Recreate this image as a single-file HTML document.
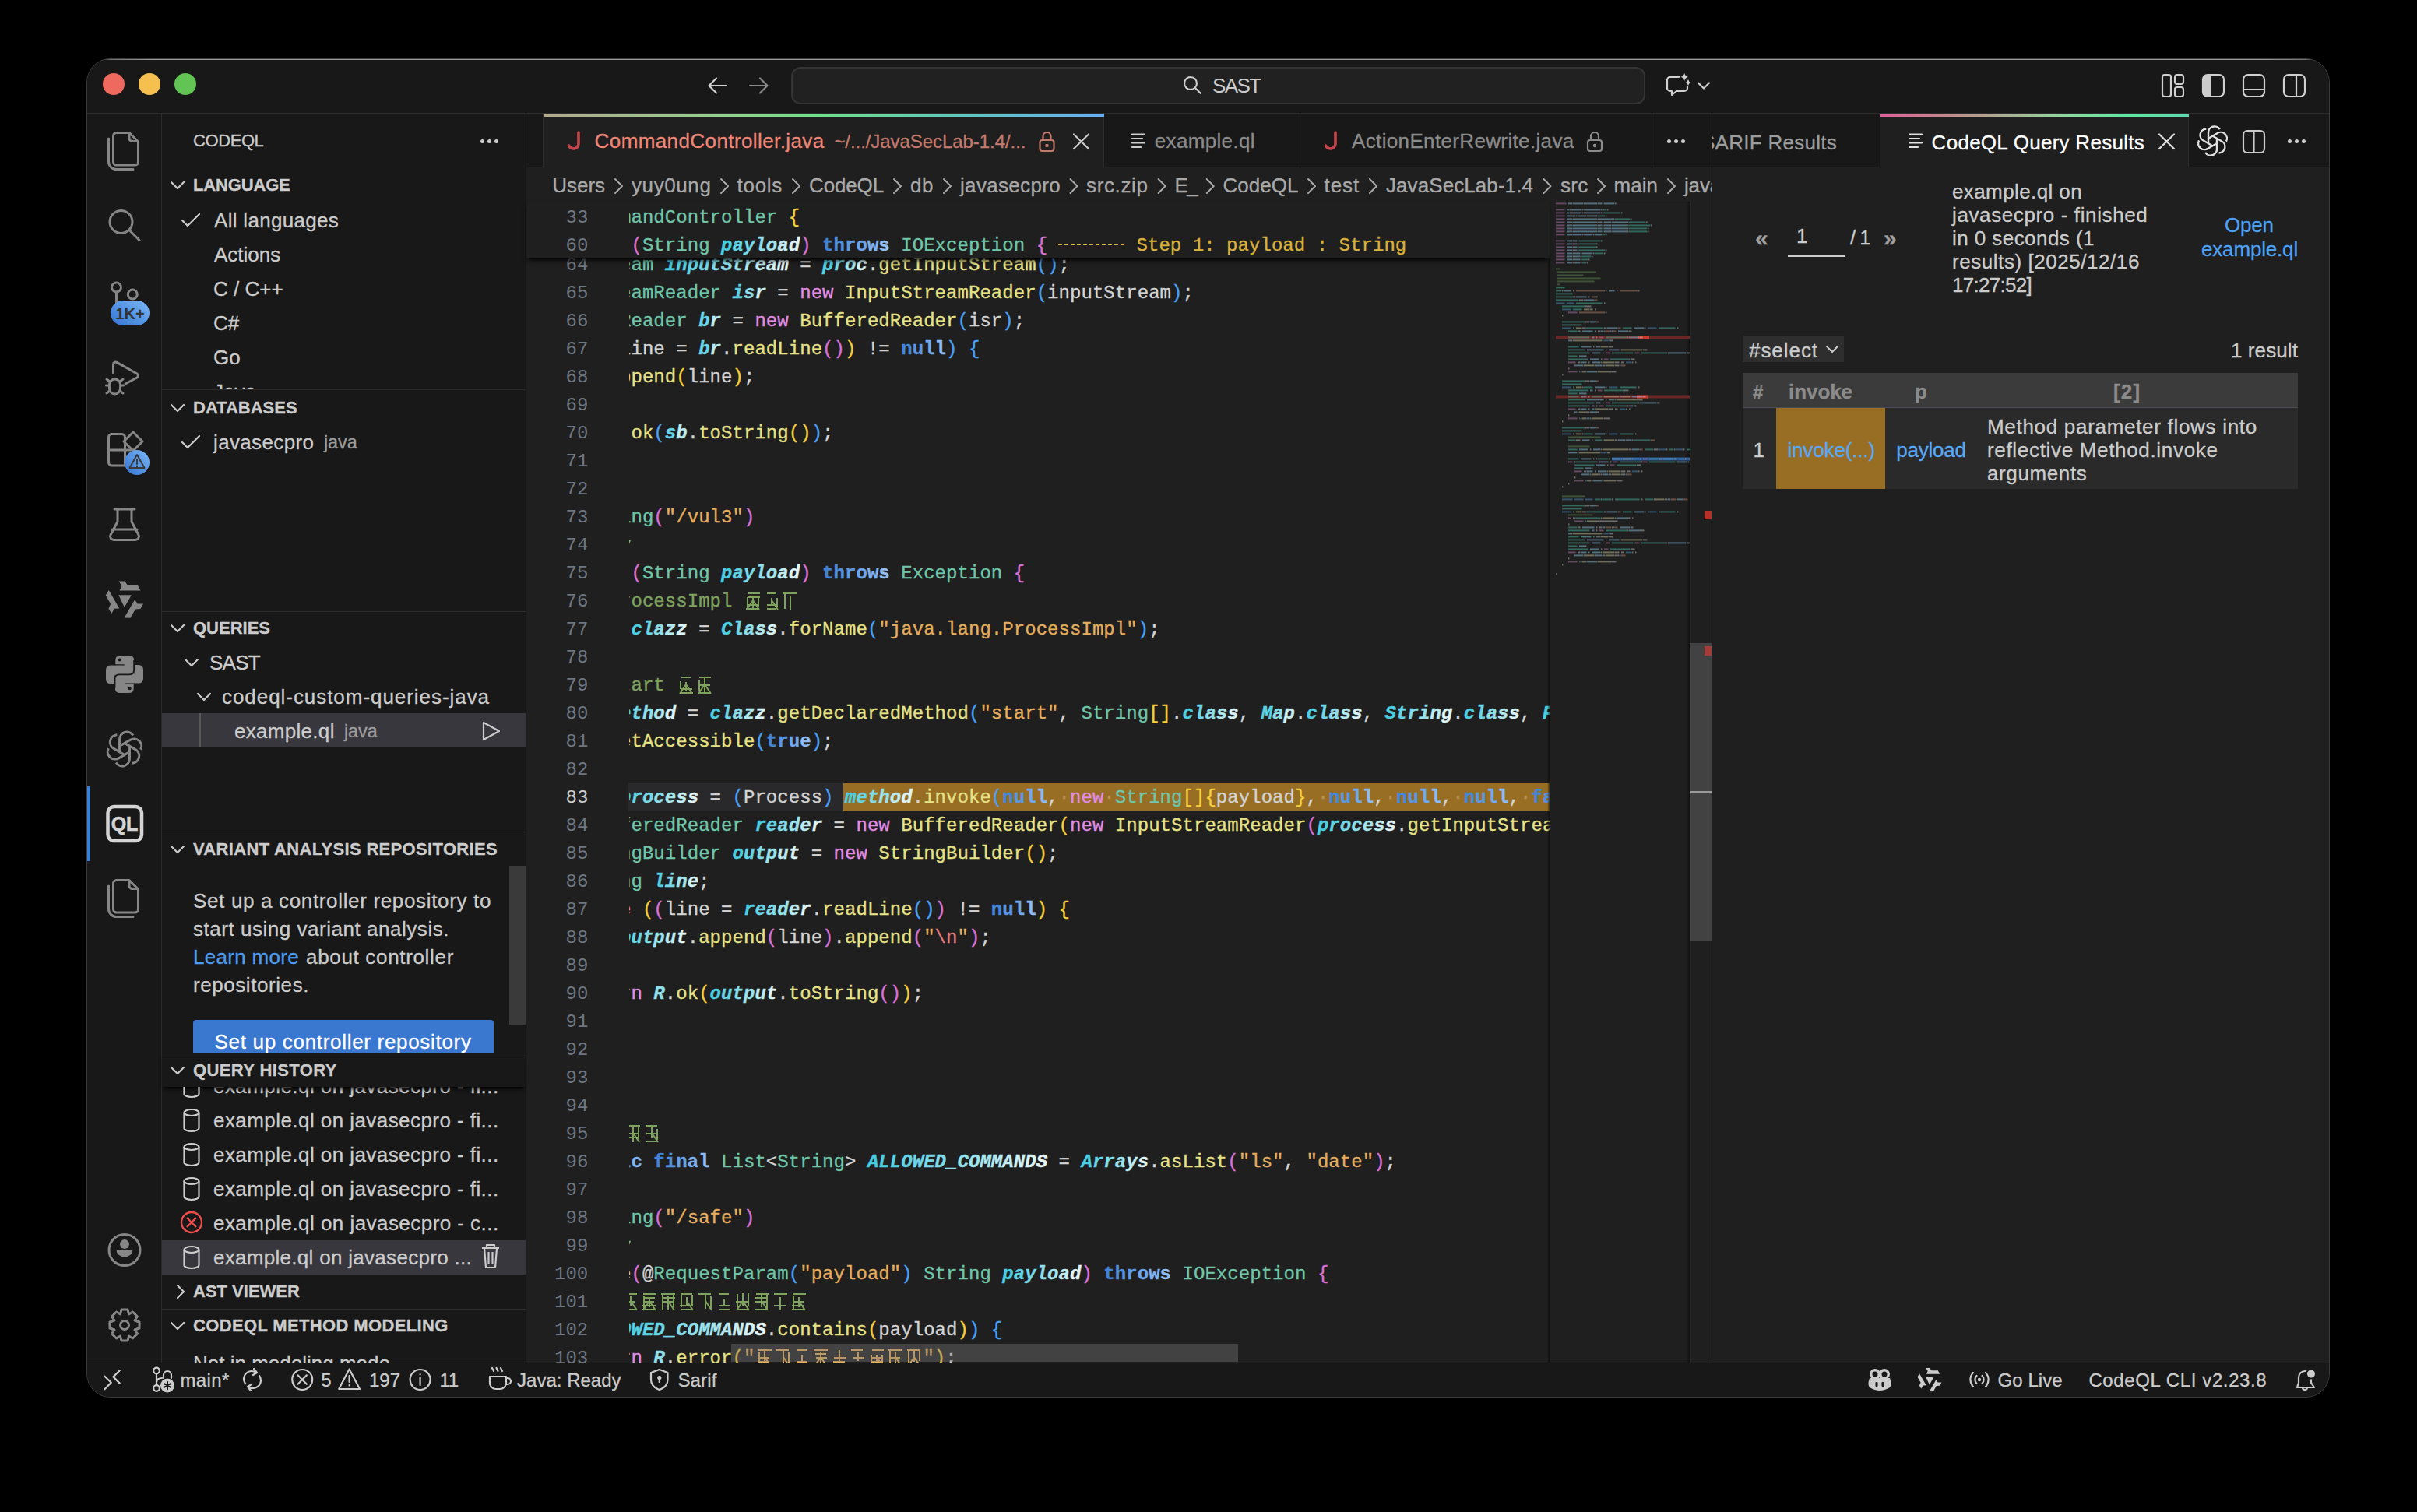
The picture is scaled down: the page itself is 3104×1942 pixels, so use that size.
<!DOCTYPE html>
<html><head><meta charset="utf-8">
<style>
html,body{margin:0;padding:0;background:#000;width:3104px;height:1942px;overflow:hidden}
*{box-sizing:border-box}
.win{position:absolute;left:112px;top:76px;width:2879px;height:1718px;border-radius:30px;overflow:hidden;background:#181818;box-shadow:0 0 0 1px #3a3a3a}
.pg{position:absolute;left:-112px;top:-76px;width:3104px;height:1942px}
.a{position:absolute}
.ui{position:absolute;font-family:"Liberation Sans",sans-serif;color:#cccccc;font-size:26px;white-space:pre;line-height:44px;height:44px}
.hdr{position:absolute;font-family:"Liberation Sans",sans-serif;color:#cccccc;font-size:22px;font-weight:700;white-space:pre;line-height:44px;height:44px}
.cl{position:absolute;font-family:"Liberation Mono",monospace;font-size:24px;white-space:pre;line-height:36px;height:36px;color:#cccccc}
.cl i{position:absolute;top:0;font-style:normal;-webkit-text-stroke:0.35px currentColor}
.a[style*='Liberation Sans']{-webkit-text-stroke:0.3px currentColor}
svg{position:absolute;overflow:visible}
.ic{fill:none;stroke:#868686;stroke-width:3;stroke-linecap:round;stroke-linejoin:round}
</style></head><body>
<div class="win"><div class="pg">

<!-- TITLE BAR -->
<div class="a" style="left:112px;top:76px;width:2880px;height:70px;background:#181818;border-bottom:1px solid #2b2b2b"></div>
<div class="a" style="left:132px;top:94px;width:28px;height:28px;border-radius:50%;background:#ee6a5f"></div>
<div class="a" style="left:178px;top:94px;width:28px;height:28px;border-radius:50%;background:#f5c04f"></div>
<div class="a" style="left:224px;top:94px;width:28px;height:28px;border-radius:50%;background:#61c454"></div>
<svg style="left:0;top:0" width="1" height="1">
 <g fill="none" stroke-width="2.2" stroke-linecap="round" stroke-linejoin="round">
  <path d="M933,110 H911 M920,100.5 L910.5,110 L920,119.5" stroke="#d0d0d0"/>
  <path d="M963,110 H985 M976,100.5 L985.5,110 L976,119.5" stroke="#8a8a8a"/>
 </g>
</svg>
<div class="a" style="left:1016px;top:86px;width:1097px;height:48px;border-radius:12px;background:#212121;border:2px solid #343434"></div>
<svg style="left:0;top:0" width="1" height="1">
 <g fill="none" stroke="#cccccc" stroke-width="2.2" stroke-linecap="round">
  <circle cx="1529" cy="107" r="8"/><path d="M1535,113 L1542,120"/>
 </g>
</svg>
<div class="ui" style="left:1557px;top:88px;line-height:44px;font-size:26px;color:#cccccc;letter-spacing:-1.6px">SAST</div>
<svg style="left:0;top:0" width="1" height="1">
 <g fill="none" stroke="#d0d0d0" stroke-width="2.2" stroke-linecap="round" stroke-linejoin="round">
  <path d="M2156,98.8 H2145 a4,4 0 0 0 -4,4 V113 a4,4 0 0 0 4,4 H2147 V122 L2153,117 H2163 a4,4 0 0 0 4,-4 V111"/>
  <path d="M2181,106.5 L2188,113.5 L2195,106.5"/>
 </g>
 <path fill="#d0d0d0" d="M2163.2,94 Q2164.2,98 2168,98.8 Q2164.2,99.6 2163.2,104 Q2162.2,99.6 2158.4,98.8 Q2162.2,98 2163.2,94 Z M2168,102 Q2168.7,105 2171.5,106 Q2168.7,107 2168,110 Q2167.3,107 2164.5,106 Q2167.3,105 2168,102 Z"/>
 <g fill="none" stroke="#d0d0d0" stroke-width="2.2">
  <rect x="2777" y="96" width="11" height="28" rx="3"/>
  <rect x="2793" y="96" width="11" height="12" rx="3"/>
  <rect x="2793" y="112" width="11" height="12" rx="3"/>
  <rect x="2829" y="96" width="27" height="28" rx="6"/>
  <rect x="2881" y="96" width="27" height="28" rx="6"/>
  <path d="M2881,115 H2908"/>
  <rect x="2933" y="96" width="27" height="28" rx="6"/>
  <path d="M2949,96 V124"/>
 </g>
 <path fill="#cccccc" d="M2835,96 H2840 V124 H2835 a6,6 0 0 1 -6,-6 V102 a6,6 0 0 1 6,-6 Z"/>
</svg>

<!-- ACTIVITY BAR -->
<div class="a" style="left:112px;top:146px;width:96px;height:1604px;background:#181818;border-right:1px solid #2b2b2b"></div>
<svg style="left:0;top:0" width="1" height="1">
 <g class="ic">
  <!-- files -->
  <path d="M149.5,170.5 H166 L177.5,182 V208 a4,4 0 0 1 -4,4 H149.5 a4,4 0 0 1 -4,-4 V174.5 a4,4 0 0 1 4,-4 Z M166,170.5 V177.5 a4,4 0 0 0 4,4 H177.5"/>
  <path d="M139.5,178 V207.5 a10,10 0 0 0 10,10 H171"/>
  <!-- search -->
  <circle cx="155.5" cy="285" r="14.5"/><path d="M166.5,296 L179,308.5"/>
  <!-- scm -->
  <circle cx="149.5" cy="369" r="6"/><circle cx="170.3" cy="378" r="6"/><path d="M149.5,375 V392"/>
  <!-- debug -->
  <path d="M145.5,479 V468 a3,3 0 0 1 4.5,-2.6 L176,480 a3,3 0 0 1 0,5 L161,493"/>
  <path d="M147.5,487 a7,7 0 0 1 7,7 V499 a7,7 0 0 1 -14,0 V494 a7,7 0 0 1 7,-7 Z" transform="translate(-0,0)"/>
  <path d="M136.5,495 H140 M155,495 H158.5 M137,487 L141,490 M158,487 L154,490 M137,505 L141,502 M158,505 L154,502"/>
  <!-- extensions -->
  <path d="M143.5,557.5 H156.5 a4,4 0 0 1 4,4 V598 H143.5 a4,4 0 0 1 -4,-4 V561.5 a4,4 0 0 1 4,-4 Z M139.5,578 H160.5 M160.5,578 H172"/>
  <path d="M171,555 L183,567 L171,579 L159,567 Z"/>
  <!-- flask -->
  <path d="M147,654 H173 M151,654 V670 L142,687 a4.5,4.5 0 0 0 4,6.5 H174 a4.5,4.5 0 0 0 4,-6.5 L169,670 V654 M144,680 H176"/>
  <!-- files 2 -->
  <path d="M149.5,1130.5 H166 L177.5,1142 V1168 a4,4 0 0 1 -4,4 H149.5 a4,4 0 0 1 -4,-4 V1134.5 a4,4 0 0 1 4,-4 Z M166,1130.5 V1137.5 a4,4 0 0 0 4,4 H177.5"/>
  <path d="M139.5,1138 V1167.5 a10,10 0 0 0 10,10 H171"/>
  <!-- account -->
  <circle cx="160" cy="1605.5" r="20"/>
  <!-- gear -->
  <circle cx="160" cy="1702" r="5.5"/>
 </g>
 <!-- scm badge -->
 <defs>
  <linearGradient id="bg1" x1="0" y1="1" x2="1" y2="0"><stop offset="0" stop-color="#3274d3"/><stop offset="1" stop-color="#7ab6f5"/></linearGradient>
 </defs>
 <rect x="142" y="386" width="50" height="32" rx="16" fill="url(#bg1)"/>
 <text x="167" y="409.5" text-anchor="middle" font-family="Liberation Sans" font-weight="700" font-size="20" fill="#333333">1K+</text>
 <!-- ext badge -->
 <circle cx="176" cy="594" r="16" fill="url(#bg1)"/>
 <path d="M176,584 L185.5,601 H166.5 Z" fill="none" stroke="#3a3a3a" stroke-width="2" stroke-linejoin="round"/>
 <path d="M176,590 V596 M176,598.5 V599.5" stroke="#3a3a3a" stroke-width="2" stroke-linecap="round"/>
 <!-- qwen-like filled -->
 <defs><path id="qarm" d="M-7.3,-23.6 L0.2,-23.6 L4,-18.3 L16.9,-18.3 L20.6,-11.5 L-6.5,-11.5 L-3.6,-17.1 L-6.5,-22.2 Z"/>
 <path id="oalk" d="M-6.5,4 V-12 A9.5,9.5 0 0 1 11,-17.5"/></defs>
 <g fill="#868686" transform="translate(160,770)">
  <use href="#qarm"/><use href="#qarm" transform="rotate(120)"/><use href="#qarm" transform="rotate(240)"/>
  <path d="M-7.7,-5.75 L8.9,-5.75 L-0.2,10.1 Z"/>
 </g>
 <g fill="none" stroke="#868686" stroke-width="3" stroke-linejoin="round" transform="translate(160,962)">
  <use href="#oalk"/><use href="#oalk" transform="rotate(60)"/><use href="#oalk" transform="rotate(120)"/><use href="#oalk" transform="rotate(180)"/><use href="#oalk" transform="rotate(240)"/><use href="#oalk" transform="rotate(300)"/>
 </g>
 <!-- python -->
 <g transform="translate(160,866)">
  <defs><path id="pysn" d="M-5.7,-24 H6.1 Q12.1,-24 12.1,-18 V0.4 H-12.5 V12.1 H-18 Q-24,12.1 -24,6 V-5.6 Q-24,-11.6 -18,-11.6 H-11.7 V-18 Q-11.7,-24 -5.7,-24 Z"/></defs>
  <use href="#pysn" fill="#868686"/><use href="#pysn" fill="#868686" transform="rotate(180)"/>
  <path d="M12.1,-18 V-5.4 Q12.1,0.4 6.5,0.4 H-6.9 Q-12.5,0.4 -12.5,5.8 V18" fill="none" stroke="#181818" stroke-width="1.8"/>
  <path d="M-13,-12.1 H-0.3 M0.3,12.1 H13" fill="none" stroke="#181818" stroke-width="1.4"/>
  <circle cx="-6.3" cy="-18.6" r="2" fill="#181818"/><circle cx="6.6" cy="18.3" r="2" fill="#181818"/>
 </g>
 <!-- account fill -->
 <circle cx="160" cy="1598" r="6" fill="#868686"/>
 <path d="M149.5,1605.5 H170.5 a10.5,9 0 0 1 -21,0 Z" fill="#868686"/>
 <!-- gear -->
 <path fill="none" stroke="#868686" stroke-width="3" stroke-linejoin="round" d="M156,1682 H164 L165.5,1688 L170.5,1685 L176.5,1691 L173,1696 L179,1698 V1706 L173,1708 L176.5,1713 L170.5,1719 L165.5,1716 L164,1722 H156 L154.5,1716 L149.5,1719 L143.5,1713 L147,1708 L141,1706 V1698 L147,1696 L143.5,1691 L149.5,1685 L154.5,1688 Z"/>
 <!-- QL active -->
 <rect x="138.5" y="1036" width="43.5" height="44" rx="8" fill="none" stroke="#d4d4d4" stroke-width="4.5"/>
 <text x="160" y="1067" text-anchor="middle" font-family="Liberation Sans" font-weight="700" font-size="25" fill="#d4d4d4" stroke="#d4d4d4" stroke-width="0.6">QL</text>
</svg>
<div class="a" style="left:112px;top:1010px;width:4px;height:96px;background:#3a80d6"></div>

<div class="a" style="left:208px;top:146px;width:468px;height:1604px;background:#181818;border-right:1px solid #2b2b2b"></div>
<div class="a" style="left:208px;top:500px;width:467px;height:1px;background:#2b2b2b"></div>
<div class="a" style="left:208px;top:785px;width:467px;height:1px;background:#2b2b2b"></div>
<div class="a" style="left:208px;top:1068px;width:467px;height:1px;background:#2b2b2b"></div>
<div class="a" style="left:208px;top:1352px;width:467px;height:1px;background:#2b2b2b"></div>
<div class="a" style="left:208px;top:1681px;width:467px;height:1px;background:#2b2b2b"></div>
<div class="a " style="left:248px;top:162.1px;height:37px;line-height:37px;font-family:'Liberation Sans';font-size:22px;font-weight:400;font-style:normal;color:#cccccc;white-space:pre;letter-spacing:-0.420px;">CODEQL</div>
<div class="a" style="left:617px;top:179px;width:5px;height:5px;border-radius:50%;background:#ccc;box-shadow:9px 0 0 #ccc,18px 0 0 #ccc"></div>
<div class="a " style="left:248px;top:219.1px;height:37px;line-height:37px;font-family:'Liberation Sans';font-size:22px;font-weight:700;font-style:normal;color:#cccccc;white-space:pre;letter-spacing:-0.161px;">LANGUAGE</div>
<div class="a " style="left:275px;top:260.7px;height:44px;line-height:44px;font-family:'Liberation Sans';font-size:26px;font-weight:400;font-style:normal;color:#cccccc;white-space:pre;letter-spacing:0.298px;">All languages</div>
<div class="a " style="left:275px;top:304.7px;height:44px;line-height:44px;font-family:'Liberation Sans';font-size:26px;font-weight:400;font-style:normal;color:#cccccc;white-space:pre;">Actions</div>
<div class="a " style="left:274px;top:348.7px;height:44px;line-height:44px;font-family:'Liberation Sans';font-size:26px;font-weight:400;font-style:normal;color:#cccccc;white-space:pre;">C / C++</div>
<div class="a " style="left:274px;top:392.7px;height:44px;line-height:44px;font-family:'Liberation Sans';font-size:26px;font-weight:400;font-style:normal;color:#cccccc;white-space:pre;">C#</div>
<div class="a " style="left:274px;top:436.7px;height:44px;line-height:44px;font-family:'Liberation Sans';font-size:26px;font-weight:400;font-style:normal;color:#cccccc;white-space:pre;">Go</div>
<div class="a" style="left:208px;top:470px;width:467px;height:30px;overflow:hidden"><div class="a " style="left:66px;top:10.7px;height:44px;line-height:44px;font-family:'Liberation Sans';font-size:26px;font-weight:400;font-style:normal;color:#cccccc;white-space:pre;">Java</div></div>
<div class="a " style="left:248px;top:505.1px;height:37px;line-height:37px;font-family:'Liberation Sans';font-size:22px;font-weight:700;font-style:normal;color:#cccccc;white-space:pre;">DATABASES</div>
<div class="a " style="left:274px;top:545.7px;height:44px;line-height:44px;font-family:'Liberation Sans';font-size:26px;font-weight:400;font-style:normal;color:#cccccc;white-space:pre;letter-spacing:0.357px;">javasecpro</div>
<div class="a " style="left:416px;top:547.6px;height:40px;line-height:40px;font-family:'Liberation Sans';font-size:23.4px;font-weight:400;font-style:normal;color:#9d9d9d;white-space:pre;letter-spacing:-0.080px;">java</div>
<div class="a " style="left:248px;top:788.1px;height:37px;line-height:37px;font-family:'Liberation Sans';font-size:22px;font-weight:700;font-style:normal;color:#cccccc;white-space:pre;">QUERIES</div>
<div class="a " style="left:269px;top:828.7px;height:44px;line-height:44px;font-family:'Liberation Sans';font-size:26px;font-weight:400;font-style:normal;color:#cccccc;white-space:pre;letter-spacing:-0.730px;">SAST</div>
<div class="a " style="left:285px;top:872.7px;height:44px;line-height:44px;font-family:'Liberation Sans';font-size:26px;font-weight:400;font-style:normal;color:#cccccc;white-space:pre;letter-spacing:0.947px;">codeql-custom-queries-java</div>
<div class="a" style="left:208px;top:916px;width:467px;height:44px;background:#37373d"></div>
<div class="a" style="left:256px;top:916px;width:2px;height:44px;background:#585858"></div>
<div class="a " style="left:301px;top:916.7px;height:44px;line-height:44px;font-family:'Liberation Sans';font-size:26px;font-weight:400;font-style:normal;color:#cccccc;white-space:pre;letter-spacing:0.297px;">example.ql</div>
<div class="a " style="left:442px;top:918.6px;height:40px;line-height:40px;font-family:'Liberation Sans';font-size:23.4px;font-weight:400;font-style:normal;color:#9d9d9d;white-space:pre;letter-spacing:-0.080px;">java</div>
<div class="a " style="left:248px;top:1072.1px;height:37px;line-height:37px;font-family:'Liberation Sans';font-size:22px;font-weight:700;font-style:normal;color:#cccccc;white-space:pre;letter-spacing:0.331px;">VARIANT ANALYSIS REPOSITORIES</div>
<div class="a " style="left:248px;top:1134.7px;height:44px;line-height:44px;font-family:'Liberation Sans';font-size:26px;font-weight:400;font-style:normal;color:#cccccc;white-space:pre;letter-spacing:0.658px;">Set up a controller repository to</div>
<div class="a " style="left:248px;top:1170.7px;height:44px;line-height:44px;font-family:'Liberation Sans';font-size:26px;font-weight:400;font-style:normal;color:#cccccc;white-space:pre;letter-spacing:0.531px;">start using variant analysis.</div>
<div class="a" style="left:248px;top:1171px;height:80px"><div class="a " style="left:0px;top:35.7px;height:44px;line-height:44px;font-family:'Liberation Sans';font-size:26px;font-weight:400;font-style:normal;color:#4d9cf0;white-space:pre;letter-spacing:0.303px;">Learn more</div></div>
<div class="a " style="left:393px;top:1206.7px;height:44px;line-height:44px;font-family:'Liberation Sans';font-size:26px;font-weight:400;font-style:normal;color:#cccccc;white-space:pre;letter-spacing:0.673px;">about controller</div>
<div class="a " style="left:248px;top:1242.7px;height:44px;line-height:44px;font-family:'Liberation Sans';font-size:26px;font-weight:400;font-style:normal;color:#cccccc;white-space:pre;letter-spacing:0.567px;">repositories.</div>
<div class="a" style="left:248px;top:1310px;width:386px;height:42px;background:#3a78d0;border-radius:4px 4px 0 0;overflow:hidden"><div class="a " style="left:27.6px;top:5.7px;height:44px;line-height:44px;font-family:'Liberation Sans';font-size:26px;font-weight:400;font-style:normal;color:#ffffff;white-space:pre;letter-spacing:0.689px;">Set up controller repository</div></div>
<div class="a" style="left:654px;top:1112px;width:21px;height:204px;background:#3a3a3a"></div>
<div class="a" style="left:208px;top:1353px;width:467px;height:280px;overflow:hidden">
<div class="a " style="left:66px;top:19.7px;height:44px;line-height:44px;font-family:'Liberation Sans';font-size:26px;font-weight:400;font-style:normal;color:#cccccc;white-space:pre;letter-spacing:0.437px;">example.ql on javasecpro - fi...</div>
<div class="a " style="left:66px;top:63.7px;height:44px;line-height:44px;font-family:'Liberation Sans';font-size:26px;font-weight:400;font-style:normal;color:#cccccc;white-space:pre;letter-spacing:0.437px;">example.ql on javasecpro - fi...</div>
<div class="a " style="left:66px;top:107.7px;height:44px;line-height:44px;font-family:'Liberation Sans';font-size:26px;font-weight:400;font-style:normal;color:#cccccc;white-space:pre;letter-spacing:0.437px;">example.ql on javasecpro - fi...</div>
<div class="a " style="left:66px;top:151.7px;height:44px;line-height:44px;font-family:'Liberation Sans';font-size:26px;font-weight:400;font-style:normal;color:#cccccc;white-space:pre;letter-spacing:0.437px;">example.ql on javasecpro - fi...</div>
<div class="a " style="left:66px;top:195.7px;height:44px;line-height:44px;font-family:'Liberation Sans';font-size:26px;font-weight:400;font-style:normal;color:#cccccc;white-space:pre;letter-spacing:0.451px;">example.ql on javasecpro - c...</div>
</div>
<div class="a" style="left:208px;top:1593px;width:467px;height:44px;background:#37373d"></div>
<div class="a " style="left:274px;top:1592.7px;height:44px;line-height:44px;font-family:'Liberation Sans';font-size:26px;font-weight:400;font-style:normal;color:#cccccc;white-space:pre;letter-spacing:0.295px;">example.ql on javasecpro ...</div>
<div class="a" style="left:208px;top:1353px;width:467px;height:43px;background:#181818;box-shadow:0 4px 5px -2px #000"></div>
<div class="a " style="left:248px;top:1356.1px;height:37px;line-height:37px;font-family:'Liberation Sans';font-size:22px;font-weight:700;font-style:normal;color:#cccccc;white-space:pre;letter-spacing:0.383px;">QUERY HISTORY</div>
<svg style="left:0;top:0" width="1" height="1"><g fill="none" stroke="#cccccc" stroke-width="2.2"><ellipse cx="246" cy="1429" rx="9.5" ry="4"/><path d="M236.5,1429 V1449 a9.5,4 0 0 0 19,0 V1429"/><ellipse cx="246" cy="1473" rx="9.5" ry="4"/><path d="M236.5,1473 V1493 a9.5,4 0 0 0 19,0 V1473"/><ellipse cx="246" cy="1517" rx="9.5" ry="4"/><path d="M236.5,1517 V1537 a9.5,4 0 0 0 19,0 V1517"/><ellipse cx="246" cy="1605" rx="9.5" ry="4"/><path d="M236.5,1605 V1625 a9.5,4 0 0 0 19,0 V1605"/></g><g fill="none" stroke="#f14c4c" stroke-width="2.4"><circle cx="246" cy="1570" r="13"/><path d="M240,1564 L252,1576 M252,1564 L240,1576"/></g><g fill="none" stroke="#cccccc" stroke-width="2.2" stroke-linejoin="round"><path d="M619,1603 H641 M625,1603 V1599 H635 V1603 M622,1603 L624,1628 H636 L638,1603 M627.5,1608 V1623 M632.5,1608 V1623"/></g></svg>
<div class="a" style="left:208px;top:1396px;width:100px;height:20px;overflow:hidden"><svg style="left:0;top:0" width="1" height="1"><g fill="none" stroke="#cccccc" stroke-width="2.2" transform="translate(-208,-1396)"><ellipse cx="246" cy="1385" rx="9.5" ry="4"/><path d="M236.5,1385 V1405 a9.5,4 0 0 0 19,0 V1385"/></g></svg></div>
<div class="a " style="left:248px;top:1640.1px;height:37px;line-height:37px;font-family:'Liberation Sans';font-size:22px;font-weight:700;font-style:normal;color:#cccccc;white-space:pre;">AST VIEWER</div>
<div class="a " style="left:248px;top:1684.1px;height:37px;line-height:37px;font-family:'Liberation Sans';font-size:22px;font-weight:700;font-style:normal;color:#cccccc;white-space:pre;letter-spacing:0.358px;">CODEQL METHOD MODELING</div>
<div class="a" style="left:208px;top:1726px;width:467px;height:24px;overflow:hidden"><div class="a " style="left:40px;top:2.7px;height:44px;line-height:44px;font-family:'Liberation Sans';font-size:26px;font-weight:400;font-style:normal;color:#cccccc;white-space:pre;">Not in modeling mode</div></div>
<svg style="left:0;top:0" width="1" height="1"><g fill="none" stroke-width="2.2" stroke-linecap="round" stroke-linejoin="round"><path d="M220,234 L228,242 L236,234" stroke="#cccccc"/><path d="M234,283 L241,290 L256,275" stroke="#cccccc"/><path d="M220,520 L228,528 L236,520" stroke="#cccccc"/><path d="M234,568 L241,575 L256,560" stroke="#cccccc"/><path d="M220,803 L228,811 L236,803" stroke="#cccccc"/><path d="M238,847 L246,855 L254,847" stroke="#cccccc"/><path d="M254,891 L262,899 L270,891" stroke="#cccccc"/><path d="M621,928 L641,939 L621,950 Z" stroke="#cccccc"/><path d="M220,1087 L228,1095 L236,1087" stroke="#cccccc"/><path d="M220,1371 L228,1379 L236,1371" stroke="#cccccc"/><path d="M228,1651 L236,1659 L228,1667" stroke="#cccccc"/><path d="M220,1699 L228,1707 L236,1699" stroke="#cccccc"/></g></svg>
<div class="a" style="left:676px;top:146px;width:1522px;height:1604px;background:#1f1f1f"></div>
<div class="a" style="left:676px;top:146px;width:1522px;height:69px;background:#181818;border-bottom:1px solid #2b2b2b"></div>
<div class="a" style="left:676px;top:146px;width:22px;height:69px;background:#181818;border-right:1px solid #2b2b2b;border-bottom:1px solid #2b2b2b"></div>
<div class="a" style="left:698px;top:146px;width:720px;height:69px;background:#1f1f1f;border-right:1px solid #2b2b2b"></div>
<div class="a" style="left:698px;top:146px;width:720px;height:4px;background:linear-gradient(90deg,#b3a98c 0%,#8fd58e 35%,#6fe08a 50%,#5fc7c0 75%,#6aaef2 100%)"></div>
<div class="a" style="left:1418px;top:146px;width:252px;height:69px;border-right:1px solid #2b2b2b"></div>
<div class="a" style="left:1670px;top:146px;width:452px;height:69px;border-right:1px solid #2b2b2b"></div>
<div class="a " style="left:763.6px;top:159.2px;height:44px;line-height:44px;font-family:'Liberation Sans';font-size:26px;font-weight:400;font-style:normal;color:#ef8677;white-space:pre;letter-spacing:0.403px;">CommandController.java</div>
<div class="a " style="left:1071.4px;top:160.7px;height:41px;line-height:41px;font-family:'Liberation Sans';font-size:24px;font-weight:400;font-style:normal;color:#c47a6c;white-space:pre;letter-spacing:-0.062px;">~/.../JavaSecLab-1.4/...</div>
<div class="a " style="left:1736px;top:159.2px;height:44px;line-height:44px;font-family:'Liberation Sans';font-size:26px;font-weight:400;font-style:normal;color:#8b8b8b;white-space:pre;letter-spacing:0.354px;">ActionEnterRewrite.java</div>
<div class="a " style="left:1482.8px;top:159.2px;height:44px;line-height:44px;font-family:'Liberation Sans';font-size:26px;font-weight:400;font-style:normal;color:#8b8b8b;white-space:pre;letter-spacing:0.327px;">example.ql</div>
<svg style="left:0;top:0" width="1" height="1"><g fill="none" stroke-width="2.2" stroke-linecap="round" stroke-linejoin="round"><rect x="1335.5" y="180" width="18" height="14" rx="3" stroke="#c47a6c"/><path d="M1339.5,180 V175 a5,5 0 0 1 10,0 V180" stroke="#c47a6c"/><circle cx="1344.5" cy="187" r="1.2" fill="#c47a6c" stroke="#c47a6c"/><rect x="2039" y="180" width="18" height="14" rx="3" stroke="#8b8b8b"/><path d="M2043,180 V175 a5,5 0 0 1 10,0 V180" stroke="#8b8b8b"/><circle cx="2048" cy="187" r="1.2" fill="#8b8b8b" stroke="#8b8b8b"/><path d="M743,170 V184.5 a6.5,6.5 0 0 1 -12.5,2.5" stroke="#c9454a" stroke-width="3.6"/><path d="M1715,170 V184.5 a6.5,6.5 0 0 1 -12.5,2.5" stroke="#c9454a" stroke-width="3.6"/><path d="M1379,172.5 L1398,191 M1398,172.5 L1379,191" stroke="#cccccc"/><path d="M1454,172.5 H1470 M1454,178 H1467 M1454,183.5 H1470 M1454,189 H1465" stroke="#cccccc" stroke-width="2.2"/></g></svg>
<div class="a" style="left:2141px;top:179px;width:5px;height:5px;border-radius:50%;background:#ccc;box-shadow:9px 0 0 #ccc,18px 0 0 #ccc"></div>
<div class="a" style="left:676px;top:215px;width:1522px;height:44px;overflow:hidden">
<div class="a " style="left:33.299999999999955px;top:1.2px;height:44px;line-height:44px;font-family:'Liberation Sans';font-size:26px;font-weight:400;font-style:normal;color:#a9a9a9;white-space:pre;letter-spacing:-0.041px;">Users</div>
<div class="a " style="left:135px;top:1.2px;height:44px;line-height:44px;font-family:'Liberation Sans';font-size:26px;font-weight:400;font-style:normal;color:#a9a9a9;white-space:pre;letter-spacing:0.598px;">yuy0ung</div>
<div class="a " style="left:270.6px;top:1.2px;height:44px;line-height:44px;font-family:'Liberation Sans';font-size:26px;font-weight:400;font-style:normal;color:#a9a9a9;white-space:pre;letter-spacing:0.696px;">tools</div>
<div class="a " style="left:363px;top:1.2px;height:44px;line-height:44px;font-family:'Liberation Sans';font-size:26px;font-weight:400;font-style:normal;color:#a9a9a9;white-space:pre;letter-spacing:-0.141px;">CodeQL</div>
<div class="a " style="left:493px;top:1.2px;height:44px;line-height:44px;font-family:'Liberation Sans';font-size:26px;font-weight:400;font-style:normal;color:#a9a9a9;white-space:pre;letter-spacing:0.539px;">db</div>
<div class="a " style="left:557px;top:1.2px;height:44px;line-height:44px;font-family:'Liberation Sans';font-size:26px;font-weight:400;font-style:normal;color:#a9a9a9;white-space:pre;letter-spacing:0.327px;">javasecpro</div>
<div class="a " style="left:719px;top:1.2px;height:44px;line-height:44px;font-family:'Liberation Sans';font-size:26px;font-weight:400;font-style:normal;color:#a9a9a9;white-space:pre;letter-spacing:0.639px;">src.zip</div>
<div class="a " style="left:832.5999999999999px;top:1.2px;height:44px;line-height:44px;font-family:'Liberation Sans';font-size:26px;font-weight:400;font-style:normal;color:#a9a9a9;white-space:pre;letter-spacing:-1.706px;">E_</div>
<div class="a " style="left:894.5px;top:1.2px;height:44px;line-height:44px;font-family:'Liberation Sans';font-size:26px;font-weight:400;font-style:normal;color:#a9a9a9;white-space:pre;letter-spacing:0.026px;">CodeQL</div>
<div class="a " style="left:1024.6px;top:1.2px;height:44px;line-height:44px;font-family:'Liberation Sans';font-size:26px;font-weight:400;font-style:normal;color:#a9a9a9;white-space:pre;letter-spacing:0.870px;">test</div>
<div class="a " style="left:1104px;top:1.2px;height:44px;line-height:44px;font-family:'Liberation Sans';font-size:26px;font-weight:400;font-style:normal;color:#a9a9a9;white-space:pre;letter-spacing:0.078px;">JavaSecLab-1.4</div>
<div class="a " style="left:1328px;top:1.2px;height:44px;line-height:44px;font-family:'Liberation Sans';font-size:26px;font-weight:400;font-style:normal;color:#a9a9a9;white-space:pre;letter-spacing:0.276px;">src</div>
<div class="a " style="left:1396.6px;top:1.2px;height:44px;line-height:44px;font-family:'Liberation Sans';font-size:26px;font-weight:400;font-style:normal;color:#a9a9a9;white-space:pre;letter-spacing:0.010px;">main</div>
<div class="a " style="left:1487px;top:1.2px;height:44px;line-height:44px;font-family:'Liberation Sans';font-size:26px;font-weight:400;font-style:normal;color:#a9a9a9;white-space:pre;letter-spacing:-0.176px;">java</div>
<svg style="left:0;top:0" width="1" height="1"><g fill="none" stroke="#a9a9a9" stroke-width="2" stroke-linecap="round" stroke-linejoin="round"><path d="M114.0,15 L123.0,24 L114.0,33"/><path d="M250.04999999999995,15 L259.04999999999995,24 L250.04999999999995,33"/><path d="M342.0,15 L351.0,24 L342.0,33"/><path d="M472.0,15 L481.0,24 L472.0,33"/><path d="M536.0,15 L545.0,24 L536.0,33"/><path d="M698.5,15 L707.5,24 L698.5,33"/><path d="M811.5999999999999,15 L820.5999999999999,24 L811.5999999999999,33"/><path d="M873.75,15 L882.75,24 L873.75,33"/><path d="M1004.05,15 L1013.05,24 L1004.05,33"/><path d="M1083.0,15 L1092.0,24 L1083.0,33"/><path d="M1306.5,15 L1315.5,24 L1306.5,33"/><path d="M1376.0500000000002,15 L1385.0500000000002,24 L1376.0500000000002,33"/><path d="M1466.0,15 L1475.0,24 L1466.0,33"/></g></svg>
</div>
<div class="a" style="left:676px;top:259px;width:1314px;height:1491px;overflow:hidden">
<div class="a" style="left:-676px;top:-259px;width:3104px;height:1942px">
<div class="a" style="left:807px;top:1006px;width:276px;height:36px;background:#29292b"></div>
<div class="a" style="left:1083px;top:1006px;width:907px;height:36px;background:#986e24"></div>
<div class="cl" style="left:726.5px;top:323px;color:#6e7681">64</div>
<div class="cl" style="left:726.5px;top:359px;color:#6e7681">65</div>
<div class="cl" style="left:726.5px;top:395px;color:#6e7681">66</div>
<div class="cl" style="left:726.5px;top:431px;color:#6e7681">67</div>
<div class="cl" style="left:726.5px;top:467px;color:#6e7681">68</div>
<div class="cl" style="left:726.5px;top:503px;color:#6e7681">69</div>
<div class="cl" style="left:726.5px;top:539px;color:#6e7681">70</div>
<div class="cl" style="left:726.5px;top:575px;color:#6e7681">71</div>
<div class="cl" style="left:726.5px;top:611px;color:#6e7681">72</div>
<div class="cl" style="left:726.5px;top:647px;color:#6e7681">73</div>
<div class="cl" style="left:726.5px;top:683px;color:#6e7681">74</div>
<div class="cl" style="left:726.5px;top:719px;color:#6e7681">75</div>
<div class="cl" style="left:726.5px;top:755px;color:#6e7681">76</div>
<div class="cl" style="left:726.5px;top:791px;color:#6e7681">77</div>
<div class="cl" style="left:726.5px;top:827px;color:#6e7681">78</div>
<div class="cl" style="left:726.5px;top:863px;color:#6e7681">79</div>
<div class="cl" style="left:726.5px;top:899px;color:#6e7681">80</div>
<div class="cl" style="left:726.5px;top:935px;color:#6e7681">81</div>
<div class="cl" style="left:726.5px;top:971px;color:#6e7681">82</div>
<div class="cl" style="left:726.5px;top:1007px;color:#cccccc">83</div>
<div class="cl" style="left:726.5px;top:1043px;color:#6e7681">84</div>
<div class="cl" style="left:726.5px;top:1079px;color:#6e7681">85</div>
<div class="cl" style="left:726.5px;top:1115px;color:#6e7681">86</div>
<div class="cl" style="left:726.5px;top:1151px;color:#6e7681">87</div>
<div class="cl" style="left:726.5px;top:1187px;color:#6e7681">88</div>
<div class="cl" style="left:726.5px;top:1223px;color:#6e7681">89</div>
<div class="cl" style="left:726.5px;top:1259px;color:#6e7681">90</div>
<div class="cl" style="left:726.5px;top:1295px;color:#6e7681">91</div>
<div class="cl" style="left:726.5px;top:1331px;color:#6e7681">92</div>
<div class="cl" style="left:726.5px;top:1367px;color:#6e7681">93</div>
<div class="cl" style="left:726.5px;top:1403px;color:#6e7681">94</div>
<div class="cl" style="left:726.5px;top:1439px;color:#6e7681">95</div>
<div class="cl" style="left:726.5px;top:1475px;color:#6e7681">96</div>
<div class="cl" style="left:726.5px;top:1511px;color:#6e7681">97</div>
<div class="cl" style="left:726.5px;top:1547px;color:#6e7681">98</div>
<div class="cl" style="left:726.5px;top:1583px;color:#6e7681">99</div>
<div class="cl" style="left:712.0px;top:1619px;color:#6e7681">100</div>
<div class="cl" style="left:712.0px;top:1655px;color:#6e7681">101</div>
<div class="cl" style="left:712.0px;top:1691px;color:#6e7681">102</div>
<div class="cl" style="left:712.0px;top:1727px;color:#6e7681">103</div>
<div class="a" style="left:808px;top:259px;width:1182px;height:1491px;overflow:hidden"><div class="a" style="left:-808px;top:-259px;width:3104px;height:1942px">
<div class="cl" style="left:796.0px;top:323px"><i style="left:0.00px;color:#6fc6a8">e</i><i style="left:14.45px;color:#6fc6a8">a</i><i style="left:28.90px;color:#6fc6a8">m</i><i style="left:57.80px;font-weight:700;font-style:italic;color:#46cde1">i</i><i style="left:72.25px;font-weight:700;font-style:italic;color:#55d0e3">n</i><i style="left:86.70px;font-weight:700;font-style:italic;color:#63d4e5">p</i><i style="left:101.15px;font-weight:700;font-style:italic;color:#72d8e6">u</i><i style="left:115.60px;font-weight:700;font-style:italic;color:#80dbe8">t</i><i style="left:130.05px;font-weight:700;font-style:italic;color:#8fdfea">S</i><i style="left:144.50px;font-weight:700;font-style:italic;color:#9ee3ec">t</i><i style="left:158.95px;font-weight:700;font-style:italic;color:#afe7ef">r</i><i style="left:173.40px;font-weight:700;font-style:italic;color:#c1ecf2">e</i><i style="left:187.85px;font-weight:700;font-style:italic;color:#d3f1f5">a</i><i style="left:202.30px;font-weight:700;font-style:italic;color:#e5f6f8">m</i><i style="left:231.20px;color:#d4d4d4">=</i><i style="left:260.10px;font-weight:700;font-style:italic;color:#53d0e2">p</i><i style="left:274.55px;font-weight:700;font-style:italic;color:#7bdae8">r</i><i style="left:289.00px;font-weight:700;font-style:italic;color:#a4e4ed">o</i><i style="left:303.45px;font-weight:700;font-style:italic;color:#d5f1f5">c</i><i style="left:317.90px;color:#d4d4d4">.</i><i style="left:332.35px;color:#e6e287">g</i><i style="left:346.80px;color:#e6e287">e</i><i style="left:361.25px;color:#e6e287">t</i><i style="left:375.70px;color:#e6e287">I</i><i style="left:390.15px;color:#e6e287">n</i><i style="left:404.60px;color:#e6e287">p</i><i style="left:419.05px;color:#e6e287">u</i><i style="left:433.50px;color:#e6e287">t</i><i style="left:447.95px;color:#e6e287">S</i><i style="left:462.40px;color:#e6e287">t</i><i style="left:476.85px;color:#e6e287">r</i><i style="left:491.30px;color:#e6e287">e</i><i style="left:505.75px;color:#e6e287">a</i><i style="left:520.20px;color:#e6e287">m</i><i style="left:534.65px;color:#4aa0f5">(</i><i style="left:549.10px;color:#4aa0f5">)</i><i style="left:563.55px;color:#d4d4d4">;</i></div>
<div class="cl" style="left:796.0px;top:359px"><i style="left:0.00px;color:#6fc6a8">e</i><i style="left:14.45px;color:#6fc6a8">a</i><i style="left:28.90px;color:#6fc6a8">m</i><i style="left:43.35px;color:#6fc6a8">R</i><i style="left:57.80px;color:#6fc6a8">e</i><i style="left:72.25px;color:#6fc6a8">a</i><i style="left:86.70px;color:#6fc6a8">d</i><i style="left:101.15px;color:#6fc6a8">e</i><i style="left:115.60px;color:#6fc6a8">r</i><i style="left:144.50px;font-weight:700;font-style:italic;color:#5ad2e3">i</i><i style="left:158.95px;font-weight:700;font-style:italic;color:#8fdfea">s</i><i style="left:173.40px;font-weight:700;font-style:italic;color:#cdeff4">r</i><i style="left:202.30px;color:#d4d4d4">=</i><i style="left:231.20px;color:#e28de4">n</i><i style="left:245.65px;color:#e28de4">e</i><i style="left:260.10px;color:#e28de4">w</i><i style="left:289.00px;color:#e6e287">I</i><i style="left:303.45px;color:#e6e287">n</i><i style="left:317.90px;color:#e6e287">p</i><i style="left:332.35px;color:#e6e287">u</i><i style="left:346.80px;color:#e6e287">t</i><i style="left:361.25px;color:#e6e287">S</i><i style="left:375.70px;color:#e6e287">t</i><i style="left:390.15px;color:#e6e287">r</i><i style="left:404.60px;color:#e6e287">e</i><i style="left:419.05px;color:#e6e287">a</i><i style="left:433.50px;color:#e6e287">m</i><i style="left:447.95px;color:#e6e287">R</i><i style="left:462.40px;color:#e6e287">e</i><i style="left:476.85px;color:#e6e287">a</i><i style="left:491.30px;color:#e6e287">d</i><i style="left:505.75px;color:#e6e287">e</i><i style="left:520.20px;color:#e6e287">r</i><i style="left:534.65px;color:#4aa0f5">(</i><i style="left:549.10px;color:#d4d4d4">i</i><i style="left:563.55px;color:#d4d4d4">n</i><i style="left:578.00px;color:#d4d4d4">p</i><i style="left:592.45px;color:#d4d4d4">u</i><i style="left:606.90px;color:#d4d4d4">t</i><i style="left:621.35px;color:#d4d4d4">S</i><i style="left:635.80px;color:#d4d4d4">t</i><i style="left:650.25px;color:#d4d4d4">r</i><i style="left:664.70px;color:#d4d4d4">e</i><i style="left:679.15px;color:#d4d4d4">a</i><i style="left:693.60px;color:#d4d4d4">m</i><i style="left:708.05px;color:#4aa0f5">)</i><i style="left:722.50px;color:#d4d4d4">;</i></div>
<div class="cl" style="left:796.0px;top:395px"><i style="left:0.00px;color:#6fc6a8">R</i><i style="left:14.45px;color:#6fc6a8">e</i><i style="left:28.90px;color:#6fc6a8">a</i><i style="left:43.35px;color:#6fc6a8">d</i><i style="left:57.80px;color:#6fc6a8">e</i><i style="left:72.25px;color:#6fc6a8">r</i><i style="left:101.15px;font-weight:700;font-style:italic;color:#67d5e5">b</i><i style="left:115.60px;font-weight:700;font-style:italic;color:#bdebf1">r</i><i style="left:144.50px;color:#d4d4d4">=</i><i style="left:173.40px;color:#e28de4">n</i><i style="left:187.85px;color:#e28de4">e</i><i style="left:202.30px;color:#e28de4">w</i><i style="left:231.20px;color:#e6e287">B</i><i style="left:245.65px;color:#e6e287">u</i><i style="left:260.10px;color:#e6e287">f</i><i style="left:274.55px;color:#e6e287">f</i><i style="left:289.00px;color:#e6e287">e</i><i style="left:303.45px;color:#e6e287">r</i><i style="left:317.90px;color:#e6e287">e</i><i style="left:332.35px;color:#e6e287">d</i><i style="left:346.80px;color:#e6e287">R</i><i style="left:361.25px;color:#e6e287">e</i><i style="left:375.70px;color:#e6e287">a</i><i style="left:390.15px;color:#e6e287">d</i><i style="left:404.60px;color:#e6e287">e</i><i style="left:419.05px;color:#e6e287">r</i><i style="left:433.50px;color:#4aa0f5">(</i><i style="left:447.95px;color:#d4d4d4">i</i><i style="left:462.40px;color:#d4d4d4">s</i><i style="left:476.85px;color:#d4d4d4">r</i><i style="left:491.30px;color:#4aa0f5">)</i><i style="left:505.75px;color:#d4d4d4">;</i></div>
<div class="cl" style="left:796.0px;top:431px"><i style="left:0.00px;color:#d4d4d4">l</i><i style="left:14.45px;color:#d4d4d4">i</i><i style="left:28.90px;color:#d4d4d4">n</i><i style="left:43.35px;color:#d4d4d4">e</i><i style="left:72.25px;color:#d4d4d4">=</i><i style="left:101.15px;font-weight:700;font-style:italic;color:#67d5e5">b</i><i style="left:115.60px;font-weight:700;font-style:italic;color:#bdebf1">r</i><i style="left:130.05px;color:#d4d4d4">.</i><i style="left:144.50px;color:#e6e287">r</i><i style="left:158.95px;color:#e6e287">e</i><i style="left:173.40px;color:#e6e287">a</i><i style="left:187.85px;color:#e6e287">d</i><i style="left:202.30px;color:#e6e287">L</i><i style="left:216.75px;color:#e6e287">i</i><i style="left:231.20px;color:#e6e287">n</i><i style="left:245.65px;color:#e6e287">e</i><i style="left:260.10px;color:#da70d6">(</i><i style="left:274.55px;color:#da70d6">)</i><i style="left:289.00px;color:#f5cf3c">)</i><i style="left:317.90px;color:#d4d4d4">!</i><i style="left:332.35px;color:#d4d4d4">=</i><i style="left:361.25px;font-weight:700;color:#4586db">n</i><i style="left:375.70px;font-weight:700;color:#5b97e4">u</i><i style="left:390.15px;font-weight:700;color:#72a9ec">l</i><i style="left:404.60px;font-weight:700;color:#8ebcf2">l</i><i style="left:419.05px;color:#4aa0f5">)</i><i style="left:447.95px;color:#4aa0f5">{</i></div>
<div class="cl" style="left:796.0px;top:467px"><i style="left:0.00px;color:#e6e287">p</i><i style="left:14.45px;color:#e6e287">p</i><i style="left:28.90px;color:#e6e287">e</i><i style="left:43.35px;color:#e6e287">n</i><i style="left:57.80px;color:#e6e287">d</i><i style="left:72.25px;color:#f5cf3c">(</i><i style="left:86.70px;color:#d4d4d4">l</i><i style="left:101.15px;color:#d4d4d4">i</i><i style="left:115.60px;color:#d4d4d4">n</i><i style="left:130.05px;color:#d4d4d4">e</i><i style="left:144.50px;color:#f5cf3c">)</i><i style="left:158.95px;color:#d4d4d4">;</i></div>
<div class="cl" style="left:796.0px;top:539px"><i style="left:0.00px;color:#d4d4d4">.</i><i style="left:14.45px;color:#e6e287">o</i><i style="left:28.90px;color:#e6e287">k</i><i style="left:43.35px;color:#4aa0f5">(</i><i style="left:57.80px;font-weight:700;font-style:italic;color:#67d5e5">s</i><i style="left:72.25px;font-weight:700;font-style:italic;color:#bdebf1">b</i><i style="left:86.70px;color:#d4d4d4">.</i><i style="left:101.15px;color:#e6e287">t</i><i style="left:115.60px;color:#e6e287">o</i><i style="left:130.05px;color:#e6e287">S</i><i style="left:144.50px;color:#e6e287">t</i><i style="left:158.95px;color:#e6e287">r</i><i style="left:173.40px;color:#e6e287">i</i><i style="left:187.85px;color:#e6e287">n</i><i style="left:202.30px;color:#e6e287">g</i><i style="left:216.75px;color:#f5cf3c">(</i><i style="left:231.20px;color:#f5cf3c">)</i><i style="left:245.65px;color:#4aa0f5">)</i><i style="left:260.10px;color:#d4d4d4">;</i></div>
<div class="cl" style="left:796.0px;top:647px"><i style="left:0.00px;color:#6fc6a8">i</i><i style="left:14.45px;color:#6fc6a8">n</i><i style="left:28.90px;color:#6fc6a8">g</i><i style="left:43.35px;color:#da70d6">(</i><i style="left:57.80px;color:#e5ad5e">"</i><i style="left:72.25px;color:#e5ad5e">/</i><i style="left:86.70px;color:#e5ad5e">v</i><i style="left:101.15px;color:#e5ad5e">u</i><i style="left:115.60px;color:#e5ad5e">l</i><i style="left:130.05px;color:#e5ad5e">3</i><i style="left:144.50px;color:#e5ad5e">"</i><i style="left:158.95px;color:#da70d6">)</i></div>
<div class="cl" style="left:796.0px;top:683px"><i style="left:0.00px;color:#6fc6a8">y</i></div>
<div class="cl" style="left:796.0px;top:719px"><i style="left:14.45px;color:#da70d6">(</i><i style="left:28.90px;color:#6fc6a8">S</i><i style="left:43.35px;color:#6fc6a8">t</i><i style="left:57.80px;color:#6fc6a8">r</i><i style="left:72.25px;color:#6fc6a8">i</i><i style="left:86.70px;color:#6fc6a8">n</i><i style="left:101.15px;color:#6fc6a8">g</i><i style="left:130.05px;font-weight:700;font-style:italic;color:#4acee1">p</i><i style="left:144.50px;font-weight:700;font-style:italic;color:#61d4e4">a</i><i style="left:158.95px;font-weight:700;font-style:italic;color:#78d9e7">y</i><i style="left:173.40px;font-weight:700;font-style:italic;color:#8fdfea">l</i><i style="left:187.85px;font-weight:700;font-style:italic;color:#a7e5ed">o</i><i style="left:202.30px;font-weight:700;font-style:italic;color:#c4edf2">a</i><i style="left:216.75px;font-weight:700;font-style:italic;color:#e0f4f7">d</i><i style="left:231.20px;color:#da70d6">)</i><i style="left:260.10px;font-weight:700;color:#4183d9">t</i><i style="left:274.55px;font-weight:700;color:#508edf">h</i><i style="left:289.00px;font-weight:700;color:#5e9ae5">r</i><i style="left:303.45px;font-weight:700;color:#6ea6eb">o</i><i style="left:317.90px;font-weight:700;color:#80b3ef">w</i><i style="left:332.35px;font-weight:700;color:#93c0f3">s</i><i style="left:361.25px;color:#6fc6a8">E</i><i style="left:375.70px;color:#6fc6a8">x</i><i style="left:390.15px;color:#6fc6a8">c</i><i style="left:404.60px;color:#6fc6a8">e</i><i style="left:419.05px;color:#6fc6a8">p</i><i style="left:433.50px;color:#6fc6a8">t</i><i style="left:447.95px;color:#6fc6a8">i</i><i style="left:462.40px;color:#6fc6a8">o</i><i style="left:476.85px;color:#6fc6a8">n</i><i style="left:505.75px;color:#da70d6">{</i></div>
<div class="cl" style="left:796.0px;top:755px"><i style="left:0.00px;color:#7fa35f">r</i><i style="left:14.45px;color:#7fa35f">o</i><i style="left:28.90px;color:#7fa35f">c</i><i style="left:43.35px;color:#7fa35f">e</i><i style="left:57.80px;color:#7fa35f">s</i><i style="left:72.25px;color:#7fa35f">s</i><i style="left:86.70px;color:#7fa35f">I</i><i style="left:101.15px;color:#7fa35f">m</i><i style="left:115.60px;color:#7fa35f">p</i><i style="left:130.05px;color:#7fa35f">l</i><svg style="left:159.45px;top:0" width="24" height="36"><path d="M6,7 H21 M6,12 H21 M4,22 H18 M3,27 H18 M5,12 V27 M12,13 V28 M19,13 V24 M12,16 L4,28 M12,16 L20,28" fill="none" stroke="#7fa35f" stroke-width="2"/></svg><svg style="left:183.45px;top:0" width="24" height="36"><path d="M6,7 H18 M6,22 H19 M6,27 H18 M12,13 V21 M19,13 V25 M12,16 L20,28" fill="none" stroke="#7fa35f" stroke-width="2"/></svg><svg style="left:207.45px;top:0" width="24" height="36"><path d="M3,7 H21 M5,6 V27 M12,10 V28" fill="none" stroke="#7fa35f" stroke-width="2"/></svg></div>
<div class="cl" style="left:796.0px;top:791px"><i style="left:14.45px;font-weight:700;font-style:italic;color:#4fcfe2">c</i><i style="left:28.90px;font-weight:700;font-style:italic;color:#6fd7e6">l</i><i style="left:43.35px;font-weight:700;font-style:italic;color:#8fdfea">a</i><i style="left:57.80px;font-weight:700;font-style:italic;color:#b3e8ef">z</i><i style="left:72.25px;font-weight:700;font-style:italic;color:#daf3f6">z</i><i style="left:101.15px;color:#d4d4d4">=</i><i style="left:130.05px;font-weight:700;font-style:italic;color:#4fcfe2">C</i><i style="left:144.50px;font-weight:700;font-style:italic;color:#6fd7e6">l</i><i style="left:158.95px;font-weight:700;font-style:italic;color:#8fdfea">a</i><i style="left:173.40px;font-weight:700;font-style:italic;color:#b3e8ef">s</i><i style="left:187.85px;font-weight:700;font-style:italic;color:#daf3f6">s</i><i style="left:202.30px;color:#d4d4d4">.</i><i style="left:216.75px;color:#e6e287">f</i><i style="left:231.20px;color:#e6e287">o</i><i style="left:245.65px;color:#e6e287">r</i><i style="left:260.10px;color:#e6e287">N</i><i style="left:274.55px;color:#e6e287">a</i><i style="left:289.00px;color:#e6e287">m</i><i style="left:303.45px;color:#e6e287">e</i><i style="left:317.90px;color:#4aa0f5">(</i><i style="left:332.35px;color:#e5ad5e">"</i><i style="left:346.80px;color:#e5ad5e">j</i><i style="left:361.25px;color:#e5ad5e">a</i><i style="left:375.70px;color:#e5ad5e">v</i><i style="left:390.15px;color:#e5ad5e">a</i><i style="left:404.60px;color:#e5ad5e">.</i><i style="left:419.05px;color:#e5ad5e">l</i><i style="left:433.50px;color:#e5ad5e">a</i><i style="left:447.95px;color:#e5ad5e">n</i><i style="left:462.40px;color:#e5ad5e">g</i><i style="left:476.85px;color:#e5ad5e">.</i><i style="left:491.30px;color:#e5ad5e">P</i><i style="left:505.75px;color:#e5ad5e">r</i><i style="left:520.20px;color:#e5ad5e">o</i><i style="left:534.65px;color:#e5ad5e">c</i><i style="left:549.10px;color:#e5ad5e">e</i><i style="left:563.55px;color:#e5ad5e">s</i><i style="left:578.00px;color:#e5ad5e">s</i><i style="left:592.45px;color:#e5ad5e">I</i><i style="left:606.90px;color:#e5ad5e">m</i><i style="left:621.35px;color:#e5ad5e">p</i><i style="left:635.80px;color:#e5ad5e">l</i><i style="left:650.25px;color:#e5ad5e">"</i><i style="left:664.70px;color:#4aa0f5">)</i><i style="left:679.15px;color:#d4d4d4">;</i></div>
<div class="cl" style="left:796.0px;top:863px"><i style="left:0.00px;color:#7fa35f">t</i><i style="left:14.45px;color:#7fa35f">a</i><i style="left:28.90px;color:#7fa35f">r</i><i style="left:43.35px;color:#7fa35f">t</i><svg style="left:72.75px;top:0" width="24" height="36"><path d="M6,7 H18 M5,22 H20 M6,27 H21 M5,12 V22 M12,13 V25 M12,16 L4,28 M12,16 L20,28" fill="none" stroke="#7fa35f" stroke-width="2"/></svg><svg style="left:96.75px;top:0" width="24" height="36"><path d="M5,7 H20 M5,17 H19 M4,27 H20 M5,11 V25 M12,8 V27 M12,16 L4,28 M12,16 L20,28" fill="none" stroke="#7fa35f" stroke-width="2"/></svg></div>
<div class="cl" style="left:796.0px;top:899px"><i style="left:0.00px;font-weight:700;font-style:italic;color:#4fcfe2">e</i><i style="left:14.45px;font-weight:700;font-style:italic;color:#6fd7e6">t</i><i style="left:28.90px;font-weight:700;font-style:italic;color:#8fdfea">h</i><i style="left:43.35px;font-weight:700;font-style:italic;color:#b3e8ef">o</i><i style="left:57.80px;font-weight:700;font-style:italic;color:#daf3f6">d</i><i style="left:86.70px;color:#d4d4d4">=</i><i style="left:115.60px;font-weight:700;font-style:italic;color:#4fcfe2">c</i><i style="left:130.05px;font-weight:700;font-style:italic;color:#6fd7e6">l</i><i style="left:144.50px;font-weight:700;font-style:italic;color:#8fdfea">a</i><i style="left:158.95px;font-weight:700;font-style:italic;color:#b3e8ef">z</i><i style="left:173.40px;font-weight:700;font-style:italic;color:#daf3f6">z</i><i style="left:187.85px;color:#d4d4d4">.</i><i style="left:202.30px;color:#e6e287">g</i><i style="left:216.75px;color:#e6e287">e</i><i style="left:231.20px;color:#e6e287">t</i><i style="left:245.65px;color:#e6e287">D</i><i style="left:260.10px;color:#e6e287">e</i><i style="left:274.55px;color:#e6e287">c</i><i style="left:289.00px;color:#e6e287">l</i><i style="left:303.45px;color:#e6e287">a</i><i style="left:317.90px;color:#e6e287">r</i><i style="left:332.35px;color:#e6e287">e</i><i style="left:346.80px;color:#e6e287">d</i><i style="left:361.25px;color:#e6e287">M</i><i style="left:375.70px;color:#e6e287">e</i><i style="left:390.15px;color:#e6e287">t</i><i style="left:404.60px;color:#e6e287">h</i><i style="left:419.05px;color:#e6e287">o</i><i style="left:433.50px;color:#e6e287">d</i><i style="left:447.95px;color:#4aa0f5">(</i><i style="left:462.40px;color:#e5ad5e">"</i><i style="left:476.85px;color:#e5ad5e">s</i><i style="left:491.30px;color:#e5ad5e">t</i><i style="left:505.75px;color:#e5ad5e">a</i><i style="left:520.20px;color:#e5ad5e">r</i><i style="left:534.65px;color:#e5ad5e">t</i><i style="left:549.10px;color:#e5ad5e">"</i><i style="left:563.55px;color:#d4d4d4">,</i><i style="left:592.45px;color:#6fc6a8">S</i><i style="left:606.90px;color:#6fc6a8">t</i><i style="left:621.35px;color:#6fc6a8">r</i><i style="left:635.80px;color:#6fc6a8">i</i><i style="left:650.25px;color:#6fc6a8">n</i><i style="left:664.70px;color:#6fc6a8">g</i><i style="left:679.15px;color:#f5cf3c">[</i><i style="left:693.60px;color:#f5cf3c">]</i><i style="left:708.05px;color:#d4d4d4">.</i><i style="left:722.50px;font-weight:700;font-style:italic;color:#4fcfe2">c</i><i style="left:736.95px;font-weight:700;font-style:italic;color:#6fd7e6">l</i><i style="left:751.40px;font-weight:700;font-style:italic;color:#8fdfea">a</i><i style="left:765.85px;font-weight:700;font-style:italic;color:#b3e8ef">s</i><i style="left:780.30px;font-weight:700;font-style:italic;color:#daf3f6">s</i><i style="left:794.75px;color:#d4d4d4">,</i><i style="left:823.65px;font-weight:700;font-style:italic;color:#5ad2e3">M</i><i style="left:838.10px;font-weight:700;font-style:italic;color:#8fdfea">a</i><i style="left:852.55px;font-weight:700;font-style:italic;color:#cdeff4">p</i><i style="left:867.00px;color:#d4d4d4">.</i><i style="left:881.45px;font-weight:700;font-style:italic;color:#4fcfe2">c</i><i style="left:895.90px;font-weight:700;font-style:italic;color:#6fd7e6">l</i><i style="left:910.35px;font-weight:700;font-style:italic;color:#8fdfea">a</i><i style="left:924.80px;font-weight:700;font-style:italic;color:#b3e8ef">s</i><i style="left:939.25px;font-weight:700;font-style:italic;color:#daf3f6">s</i><i style="left:953.70px;color:#d4d4d4">,</i><i style="left:982.60px;font-weight:700;font-style:italic;color:#4ccee2">S</i><i style="left:997.05px;font-weight:700;font-style:italic;color:#67d5e5">t</i><i style="left:1011.50px;font-weight:700;font-style:italic;color:#82dce8">r</i><i style="left:1025.95px;font-weight:700;font-style:italic;color:#9ce2ec">i</i><i style="left:1040.40px;font-weight:700;font-style:italic;color:#bdebf1">n</i><i style="left:1054.85px;font-weight:700;font-style:italic;color:#def4f6">g</i><i style="left:1069.30px;color:#d4d4d4">.</i><i style="left:1083.75px;font-weight:700;font-style:italic;color:#4fcfe2">c</i><i style="left:1098.20px;font-weight:700;font-style:italic;color:#6fd7e6">l</i><i style="left:1112.65px;font-weight:700;font-style:italic;color:#8fdfea">a</i><i style="left:1127.10px;font-weight:700;font-style:italic;color:#b3e8ef">s</i><i style="left:1141.55px;font-weight:700;font-style:italic;color:#daf3f6">s</i><i style="left:1156.00px;color:#d4d4d4">,</i><i style="left:1184.90px;font-weight:700;font-style:italic;color:#4acee1">P</i><i style="left:1199.35px;font-weight:700;font-style:italic;color:#61d4e4">r</i><i style="left:1213.80px;font-weight:700;font-style:italic;color:#78d9e7">o</i><i style="left:1228.25px;font-weight:700;font-style:italic;color:#8fdfea">c</i><i style="left:1242.70px;font-weight:700;font-style:italic;color:#a7e5ed">e</i><i style="left:1257.15px;font-weight:700;font-style:italic;color:#c4edf2">s</i><i style="left:1271.60px;font-weight:700;font-style:italic;color:#e0f4f7">s</i></div>
<div class="cl" style="left:796.0px;top:935px"><i style="left:0.00px;color:#e6e287">e</i><i style="left:14.45px;color:#e6e287">t</i><i style="left:28.90px;color:#e6e287">A</i><i style="left:43.35px;color:#e6e287">c</i><i style="left:57.80px;color:#e6e287">c</i><i style="left:72.25px;color:#e6e287">e</i><i style="left:86.70px;color:#e6e287">s</i><i style="left:101.15px;color:#e6e287">s</i><i style="left:115.60px;color:#e6e287">i</i><i style="left:130.05px;color:#e6e287">b</i><i style="left:144.50px;color:#e6e287">l</i><i style="left:158.95px;color:#e6e287">e</i><i style="left:173.40px;color:#4aa0f5">(</i><i style="left:187.85px;font-weight:700;color:#4586db">t</i><i style="left:202.30px;font-weight:700;color:#5b97e4">r</i><i style="left:216.75px;font-weight:700;color:#72a9ec">u</i><i style="left:231.20px;font-weight:700;color:#8ebcf2">e</i><i style="left:245.65px;color:#4aa0f5">)</i><i style="left:260.10px;color:#d4d4d4">;</i></div>
<div class="cl" style="left:796.0px;top:1043px"><i style="left:0.00px;color:#6fc6a8">f</i><i style="left:14.45px;color:#6fc6a8">e</i><i style="left:28.90px;color:#6fc6a8">r</i><i style="left:43.35px;color:#6fc6a8">e</i><i style="left:57.80px;color:#6fc6a8">d</i><i style="left:72.25px;color:#6fc6a8">R</i><i style="left:86.70px;color:#6fc6a8">e</i><i style="left:101.15px;color:#6fc6a8">a</i><i style="left:115.60px;color:#6fc6a8">d</i><i style="left:130.05px;color:#6fc6a8">e</i><i style="left:144.50px;color:#6fc6a8">r</i><i style="left:173.40px;font-weight:700;font-style:italic;color:#4ccee2">r</i><i style="left:187.85px;font-weight:700;font-style:italic;color:#67d5e5">e</i><i style="left:202.30px;font-weight:700;font-style:italic;color:#82dce8">a</i><i style="left:216.75px;font-weight:700;font-style:italic;color:#9ce2ec">d</i><i style="left:231.20px;font-weight:700;font-style:italic;color:#bdebf1">e</i><i style="left:245.65px;font-weight:700;font-style:italic;color:#def4f6">r</i><i style="left:274.55px;color:#d4d4d4">=</i><i style="left:303.45px;color:#e28de4">n</i><i style="left:317.90px;color:#e28de4">e</i><i style="left:332.35px;color:#e28de4">w</i><i style="left:361.25px;color:#e6e287">B</i><i style="left:375.70px;color:#e6e287">u</i><i style="left:390.15px;color:#e6e287">f</i><i style="left:404.60px;color:#e6e287">f</i><i style="left:419.05px;color:#e6e287">e</i><i style="left:433.50px;color:#e6e287">r</i><i style="left:447.95px;color:#e6e287">e</i><i style="left:462.40px;color:#e6e287">d</i><i style="left:476.85px;color:#e6e287">R</i><i style="left:491.30px;color:#e6e287">e</i><i style="left:505.75px;color:#e6e287">a</i><i style="left:520.20px;color:#e6e287">d</i><i style="left:534.65px;color:#e6e287">e</i><i style="left:549.10px;color:#e6e287">r</i><i style="left:563.55px;color:#f5cf3c">(</i><i style="left:578.00px;color:#e28de4">n</i><i style="left:592.45px;color:#e28de4">e</i><i style="left:606.90px;color:#e28de4">w</i><i style="left:635.80px;color:#e6e287">I</i><i style="left:650.25px;color:#e6e287">n</i><i style="left:664.70px;color:#e6e287">p</i><i style="left:679.15px;color:#e6e287">u</i><i style="left:693.60px;color:#e6e287">t</i><i style="left:708.05px;color:#e6e287">S</i><i style="left:722.50px;color:#e6e287">t</i><i style="left:736.95px;color:#e6e287">r</i><i style="left:751.40px;color:#e6e287">e</i><i style="left:765.85px;color:#e6e287">a</i><i style="left:780.30px;color:#e6e287">m</i><i style="left:794.75px;color:#e6e287">R</i><i style="left:809.20px;color:#e6e287">e</i><i style="left:823.65px;color:#e6e287">a</i><i style="left:838.10px;color:#e6e287">d</i><i style="left:852.55px;color:#e6e287">e</i><i style="left:867.00px;color:#e6e287">r</i><i style="left:881.45px;color:#da70d6">(</i><i style="left:895.90px;font-weight:700;font-style:italic;color:#4acee1">p</i><i style="left:910.35px;font-weight:700;font-style:italic;color:#61d4e4">r</i><i style="left:924.80px;font-weight:700;font-style:italic;color:#78d9e7">o</i><i style="left:939.25px;font-weight:700;font-style:italic;color:#8fdfea">c</i><i style="left:953.70px;font-weight:700;font-style:italic;color:#a7e5ed">e</i><i style="left:968.15px;font-weight:700;font-style:italic;color:#c4edf2">s</i><i style="left:982.60px;font-weight:700;font-style:italic;color:#e0f4f7">s</i><i style="left:997.05px;color:#d4d4d4">.</i><i style="left:1011.50px;color:#e6e287">g</i><i style="left:1025.95px;color:#e6e287">e</i><i style="left:1040.40px;color:#e6e287">t</i><i style="left:1054.85px;color:#e6e287">I</i><i style="left:1069.30px;color:#e6e287">n</i><i style="left:1083.75px;color:#e6e287">p</i><i style="left:1098.20px;color:#e6e287">u</i><i style="left:1112.65px;color:#e6e287">t</i><i style="left:1127.10px;color:#e6e287">S</i><i style="left:1141.55px;color:#e6e287">t</i><i style="left:1156.00px;color:#e6e287">r</i><i style="left:1170.45px;color:#e6e287">e</i><i style="left:1184.90px;color:#e6e287">a</i><i style="left:1199.35px;color:#e6e287">m</i></div>
<div class="cl" style="left:796.0px;top:1079px"><i style="left:0.00px;color:#6fc6a8">n</i><i style="left:14.45px;color:#6fc6a8">g</i><i style="left:28.90px;color:#6fc6a8">B</i><i style="left:43.35px;color:#6fc6a8">u</i><i style="left:57.80px;color:#6fc6a8">i</i><i style="left:72.25px;color:#6fc6a8">l</i><i style="left:86.70px;color:#6fc6a8">d</i><i style="left:101.15px;color:#6fc6a8">e</i><i style="left:115.60px;color:#6fc6a8">r</i><i style="left:144.50px;font-weight:700;font-style:italic;color:#4ccee2">o</i><i style="left:158.95px;font-weight:700;font-style:italic;color:#67d5e5">u</i><i style="left:173.40px;font-weight:700;font-style:italic;color:#82dce8">t</i><i style="left:187.85px;font-weight:700;font-style:italic;color:#9ce2ec">p</i><i style="left:202.30px;font-weight:700;font-style:italic;color:#bdebf1">u</i><i style="left:216.75px;font-weight:700;font-style:italic;color:#def4f6">t</i><i style="left:245.65px;color:#d4d4d4">=</i><i style="left:274.55px;color:#e28de4">n</i><i style="left:289.00px;color:#e28de4">e</i><i style="left:303.45px;color:#e28de4">w</i><i style="left:332.35px;color:#e6e287">S</i><i style="left:346.80px;color:#e6e287">t</i><i style="left:361.25px;color:#e6e287">r</i><i style="left:375.70px;color:#e6e287">i</i><i style="left:390.15px;color:#e6e287">n</i><i style="left:404.60px;color:#e6e287">g</i><i style="left:419.05px;color:#e6e287">B</i><i style="left:433.50px;color:#e6e287">u</i><i style="left:447.95px;color:#e6e287">i</i><i style="left:462.40px;color:#e6e287">l</i><i style="left:476.85px;color:#e6e287">d</i><i style="left:491.30px;color:#e6e287">e</i><i style="left:505.75px;color:#e6e287">r</i><i style="left:520.20px;color:#f5cf3c">(</i><i style="left:534.65px;color:#f5cf3c">)</i><i style="left:549.10px;color:#d4d4d4">;</i></div>
<div class="cl" style="left:796.0px;top:1115px"><i style="left:0.00px;color:#6fc6a8">n</i><i style="left:14.45px;color:#6fc6a8">g</i><i style="left:43.35px;font-weight:700;font-style:italic;color:#53d0e2">l</i><i style="left:57.80px;font-weight:700;font-style:italic;color:#7bdae8">i</i><i style="left:72.25px;font-weight:700;font-style:italic;color:#a4e4ed">n</i><i style="left:86.70px;font-weight:700;font-style:italic;color:#d5f1f5">e</i><i style="left:101.15px;color:#d4d4d4">;</i></div>
<div class="cl" style="left:796.0px;top:1151px"><i style="left:0.00px;color:#e28de4">e</i><i style="left:28.90px;color:#f5cf3c">(</i><i style="left:43.35px;color:#da70d6">(</i><i style="left:57.80px;color:#d4d4d4">l</i><i style="left:72.25px;color:#d4d4d4">i</i><i style="left:86.70px;color:#d4d4d4">n</i><i style="left:101.15px;color:#d4d4d4">e</i><i style="left:130.05px;color:#d4d4d4">=</i><i style="left:158.95px;font-weight:700;font-style:italic;color:#4ccee2">r</i><i style="left:173.40px;font-weight:700;font-style:italic;color:#67d5e5">e</i><i style="left:187.85px;font-weight:700;font-style:italic;color:#82dce8">a</i><i style="left:202.30px;font-weight:700;font-style:italic;color:#9ce2ec">d</i><i style="left:216.75px;font-weight:700;font-style:italic;color:#bdebf1">e</i><i style="left:231.20px;font-weight:700;font-style:italic;color:#def4f6">r</i><i style="left:245.65px;color:#d4d4d4">.</i><i style="left:260.10px;color:#e6e287">r</i><i style="left:274.55px;color:#e6e287">e</i><i style="left:289.00px;color:#e6e287">a</i><i style="left:303.45px;color:#e6e287">d</i><i style="left:317.90px;color:#e6e287">L</i><i style="left:332.35px;color:#e6e287">i</i><i style="left:346.80px;color:#e6e287">n</i><i style="left:361.25px;color:#e6e287">e</i><i style="left:375.70px;color:#4aa0f5">(</i><i style="left:390.15px;color:#4aa0f5">)</i><i style="left:404.60px;color:#da70d6">)</i><i style="left:433.50px;color:#d4d4d4">!</i><i style="left:447.95px;color:#d4d4d4">=</i><i style="left:476.85px;font-weight:700;color:#4586db">n</i><i style="left:491.30px;font-weight:700;color:#5b97e4">u</i><i style="left:505.75px;font-weight:700;color:#72a9ec">l</i><i style="left:520.20px;font-weight:700;color:#8ebcf2">l</i><i style="left:534.65px;color:#f5cf3c">)</i><i style="left:563.55px;color:#f5cf3c">{</i></div>
<div class="cl" style="left:796.0px;top:1187px"><i style="left:0.00px;font-weight:700;font-style:italic;color:#4ccee2">o</i><i style="left:14.45px;font-weight:700;font-style:italic;color:#67d5e5">u</i><i style="left:28.90px;font-weight:700;font-style:italic;color:#82dce8">t</i><i style="left:43.35px;font-weight:700;font-style:italic;color:#9ce2ec">p</i><i style="left:57.80px;font-weight:700;font-style:italic;color:#bdebf1">u</i><i style="left:72.25px;font-weight:700;font-style:italic;color:#def4f6">t</i><i style="left:86.70px;color:#d4d4d4">.</i><i style="left:101.15px;color:#e6e287">a</i><i style="left:115.60px;color:#e6e287">p</i><i style="left:130.05px;color:#e6e287">p</i><i style="left:144.50px;color:#e6e287">e</i><i style="left:158.95px;color:#e6e287">n</i><i style="left:173.40px;color:#e6e287">d</i><i style="left:187.85px;color:#da70d6">(</i><i style="left:202.30px;color:#d4d4d4">l</i><i style="left:216.75px;color:#d4d4d4">i</i><i style="left:231.20px;color:#d4d4d4">n</i><i style="left:245.65px;color:#d4d4d4">e</i><i style="left:260.10px;color:#da70d6">)</i><i style="left:274.55px;color:#d4d4d4">.</i><i style="left:289.00px;color:#e6e287">a</i><i style="left:303.45px;color:#e6e287">p</i><i style="left:317.90px;color:#e6e287">p</i><i style="left:332.35px;color:#e6e287">e</i><i style="left:346.80px;color:#e6e287">n</i><i style="left:361.25px;color:#e6e287">d</i><i style="left:375.70px;color:#da70d6">(</i><i style="left:390.15px;color:#e5ad5e">"</i><i style="left:404.60px;color:#e27b7b">\</i><i style="left:419.05px;color:#e27b7b">n</i><i style="left:433.50px;color:#e5ad5e">"</i><i style="left:447.95px;color:#da70d6">)</i><i style="left:462.40px;color:#d4d4d4">;</i></div>
<div class="cl" style="left:796.0px;top:1259px"><i style="left:0.00px;color:#e28de4">r</i><i style="left:14.45px;color:#e28de4">n</i><i style="left:43.35px;font-weight:700;font-style:italic;color:#8fdfea">R</i><i style="left:57.80px;color:#d4d4d4">.</i><i style="left:72.25px;color:#e6e287">o</i><i style="left:86.70px;color:#e6e287">k</i><i style="left:101.15px;color:#f5cf3c">(</i><i style="left:115.60px;font-weight:700;font-style:italic;color:#4ccee2">o</i><i style="left:130.05px;font-weight:700;font-style:italic;color:#67d5e5">u</i><i style="left:144.50px;font-weight:700;font-style:italic;color:#82dce8">t</i><i style="left:158.95px;font-weight:700;font-style:italic;color:#9ce2ec">p</i><i style="left:173.40px;font-weight:700;font-style:italic;color:#bdebf1">u</i><i style="left:187.85px;font-weight:700;font-style:italic;color:#def4f6">t</i><i style="left:202.30px;color:#d4d4d4">.</i><i style="left:216.75px;color:#e6e287">t</i><i style="left:231.20px;color:#e6e287">o</i><i style="left:245.65px;color:#e6e287">S</i><i style="left:260.10px;color:#e6e287">t</i><i style="left:274.55px;color:#e6e287">r</i><i style="left:289.00px;color:#e6e287">i</i><i style="left:303.45px;color:#e6e287">n</i><i style="left:317.90px;color:#e6e287">g</i><i style="left:332.35px;color:#da70d6">(</i><i style="left:346.80px;color:#da70d6">)</i><i style="left:361.25px;color:#f5cf3c">)</i><i style="left:375.70px;color:#d4d4d4">;</i></div>
<div class="cl" style="left:786.4px;top:1439px"><i style="left:0.00px;color:#7fa35f">白</i><svg style="left:14.95px;top:0" width="24" height="36"><path d="M4,7 H21 M3,17 H19 M3,22 H20 M5,9 V28 M12,7 V28 M19,6 V24 M12,16 L20,28" fill="none" stroke="#7fa35f" stroke-width="2"/></svg><svg style="left:38.95px;top:0" width="24" height="36"><path d="M5,7 H19 M5,17 H20 M5,27 H19 M12,8 V22 M19,11 V25 M12,16 L20,28" fill="none" stroke="#7fa35f" stroke-width="2"/></svg></div>
<div class="cl" style="left:796.0px;top:1475px"><i style="left:0.00px;font-weight:700;color:#508edf">i</i><i style="left:14.45px;font-weight:700;color:#80b3ef">c</i><i style="left:43.35px;font-weight:700;color:#4384da">f</i><i style="left:57.80px;font-weight:700;color:#5492e1">i</i><i style="left:72.25px;font-weight:700;color:#66a0e8">n</i><i style="left:86.70px;font-weight:700;color:#7bafee">a</i><i style="left:101.15px;font-weight:700;color:#91bef3">l</i><i style="left:130.05px;color:#6fc6a8">L</i><i style="left:144.50px;color:#6fc6a8">i</i><i style="left:158.95px;color:#6fc6a8">s</i><i style="left:173.40px;color:#6fc6a8">t</i><i style="left:187.85px;color:#d4d4d4">&lt;</i><i style="left:202.30px;color:#6fc6a8">S</i><i style="left:216.75px;color:#6fc6a8">t</i><i style="left:231.20px;color:#6fc6a8">r</i><i style="left:245.65px;color:#6fc6a8">i</i><i style="left:260.10px;color:#6fc6a8">n</i><i style="left:274.55px;color:#6fc6a8">g</i><i style="left:289.00px;color:#d4d4d4">&gt;</i><i style="left:317.90px;font-weight:700;font-style:italic;color:#44cce1">A</i><i style="left:332.35px;font-weight:700;font-style:italic;color:#4ecfe2">L</i><i style="left:346.80px;font-weight:700;font-style:italic;color:#58d1e3">L</i><i style="left:361.25px;font-weight:700;font-style:italic;color:#62d4e4">O</i><i style="left:375.70px;font-weight:700;font-style:italic;color:#6cd6e6">W</i><i style="left:390.15px;font-weight:700;font-style:italic;color:#76d9e7">E</i><i style="left:404.60px;font-weight:700;font-style:italic;color:#80dbe8">D</i><i style="left:419.05px;font-weight:700;font-style:italic;color:#8adee9">_</i><i style="left:433.50px;font-weight:700;font-style:italic;color:#94e0eb">C</i><i style="left:447.95px;font-weight:700;font-style:italic;color:#9ee3ec">O</i><i style="left:462.40px;font-weight:700;font-style:italic;color:#aae6ee">M</i><i style="left:476.85px;font-weight:700;font-style:italic;color:#b6e9f0">M</i><i style="left:491.30px;font-weight:700;font-style:italic;color:#c3edf2">A</i><i style="left:505.75px;font-weight:700;font-style:italic;color:#cff0f4">N</i><i style="left:520.20px;font-weight:700;font-style:italic;color:#dbf3f6">D</i><i style="left:534.65px;font-weight:700;font-style:italic;color:#e8f6f8">S</i><i style="left:563.55px;color:#d4d4d4">=</i><i style="left:592.45px;font-weight:700;font-style:italic;color:#4ccee2">A</i><i style="left:606.90px;font-weight:700;font-style:italic;color:#67d5e5">r</i><i style="left:621.35px;font-weight:700;font-style:italic;color:#82dce8">r</i><i style="left:635.80px;font-weight:700;font-style:italic;color:#9ce2ec">a</i><i style="left:650.25px;font-weight:700;font-style:italic;color:#bdebf1">y</i><i style="left:664.70px;font-weight:700;font-style:italic;color:#def4f6">s</i><i style="left:679.15px;color:#d4d4d4">.</i><i style="left:693.60px;color:#e6e287">a</i><i style="left:708.05px;color:#e6e287">s</i><i style="left:722.50px;color:#e6e287">L</i><i style="left:736.95px;color:#e6e287">i</i><i style="left:751.40px;color:#e6e287">s</i><i style="left:765.85px;color:#e6e287">t</i><i style="left:780.30px;color:#da70d6">(</i><i style="left:794.75px;color:#e5ad5e">"</i><i style="left:809.20px;color:#e5ad5e">l</i><i style="left:823.65px;color:#e5ad5e">s</i><i style="left:838.10px;color:#e5ad5e">"</i><i style="left:852.55px;color:#d4d4d4">,</i><i style="left:881.45px;color:#e5ad5e">"</i><i style="left:895.90px;color:#e5ad5e">d</i><i style="left:910.35px;color:#e5ad5e">a</i><i style="left:924.80px;color:#e5ad5e">t</i><i style="left:939.25px;color:#e5ad5e">e</i><i style="left:953.70px;color:#e5ad5e">"</i><i style="left:968.15px;color:#da70d6">)</i><i style="left:982.60px;color:#d4d4d4">;</i></div>
<div class="cl" style="left:796.0px;top:1547px"><i style="left:0.00px;color:#6fc6a8">i</i><i style="left:14.45px;color:#6fc6a8">n</i><i style="left:28.90px;color:#6fc6a8">g</i><i style="left:43.35px;color:#da70d6">(</i><i style="left:57.80px;color:#e5ad5e">"</i><i style="left:72.25px;color:#e5ad5e">/</i><i style="left:86.70px;color:#e5ad5e">s</i><i style="left:101.15px;color:#e5ad5e">a</i><i style="left:115.60px;color:#e5ad5e">f</i><i style="left:130.05px;color:#e5ad5e">e</i><i style="left:144.50px;color:#e5ad5e">"</i><i style="left:158.95px;color:#da70d6">)</i></div>
<div class="cl" style="left:796.0px;top:1583px"><i style="left:0.00px;color:#6fc6a8">y</i></div>
<div class="cl" style="left:796.0px;top:1619px"><i style="left:0.00px;color:#d4d4d4">e</i><i style="left:14.45px;color:#da70d6">(</i><i style="left:28.90px;color:#d4d4d4">@</i><i style="left:43.35px;color:#6fc6a8">R</i><i style="left:57.80px;color:#6fc6a8">e</i><i style="left:72.25px;color:#6fc6a8">q</i><i style="left:86.70px;color:#6fc6a8">u</i><i style="left:101.15px;color:#6fc6a8">e</i><i style="left:115.60px;color:#6fc6a8">s</i><i style="left:130.05px;color:#6fc6a8">t</i><i style="left:144.50px;color:#6fc6a8">P</i><i style="left:158.95px;color:#6fc6a8">a</i><i style="left:173.40px;color:#6fc6a8">r</i><i style="left:187.85px;color:#6fc6a8">a</i><i style="left:202.30px;color:#6fc6a8">m</i><i style="left:216.75px;color:#4aa0f5">(</i><i style="left:231.20px;color:#e5ad5e">"</i><i style="left:245.65px;color:#e5ad5e">p</i><i style="left:260.10px;color:#e5ad5e">a</i><i style="left:274.55px;color:#e5ad5e">y</i><i style="left:289.00px;color:#e5ad5e">l</i><i style="left:303.45px;color:#e5ad5e">o</i><i style="left:317.90px;color:#e5ad5e">a</i><i style="left:332.35px;color:#e5ad5e">d</i><i style="left:346.80px;color:#e5ad5e">"</i><i style="left:361.25px;color:#4aa0f5">)</i><i style="left:390.15px;color:#6fc6a8">S</i><i style="left:404.60px;color:#6fc6a8">t</i><i style="left:419.05px;color:#6fc6a8">r</i><i style="left:433.50px;color:#6fc6a8">i</i><i style="left:447.95px;color:#6fc6a8">n</i><i style="left:462.40px;color:#6fc6a8">g</i><i style="left:491.30px;font-weight:700;font-style:italic;color:#4acee1">p</i><i style="left:505.75px;font-weight:700;font-style:italic;color:#61d4e4">a</i><i style="left:520.20px;font-weight:700;font-style:italic;color:#78d9e7">y</i><i style="left:534.65px;font-weight:700;font-style:italic;color:#8fdfea">l</i><i style="left:549.10px;font-weight:700;font-style:italic;color:#a7e5ed">o</i><i style="left:563.55px;font-weight:700;font-style:italic;color:#c4edf2">a</i><i style="left:578.00px;font-weight:700;font-style:italic;color:#e0f4f7">d</i><i style="left:592.45px;color:#da70d6">)</i><i style="left:621.35px;font-weight:700;color:#4183d9">t</i><i style="left:635.80px;font-weight:700;color:#508edf">h</i><i style="left:650.25px;font-weight:700;color:#5e9ae5">r</i><i style="left:664.70px;font-weight:700;color:#6ea6eb">o</i><i style="left:679.15px;font-weight:700;color:#80b3ef">w</i><i style="left:693.60px;font-weight:700;color:#93c0f3">s</i><i style="left:722.50px;color:#6fc6a8">I</i><i style="left:736.95px;color:#6fc6a8">O</i><i style="left:751.40px;color:#6fc6a8">E</i><i style="left:765.85px;color:#6fc6a8">x</i><i style="left:780.30px;color:#6fc6a8">c</i><i style="left:794.75px;color:#6fc6a8">e</i><i style="left:809.20px;color:#6fc6a8">p</i><i style="left:823.65px;color:#6fc6a8">t</i><i style="left:838.10px;color:#6fc6a8">i</i><i style="left:852.55px;color:#6fc6a8">o</i><i style="left:867.00px;color:#6fc6a8">n</i><i style="left:895.90px;color:#da70d6">{</i></div>
<div class="cl" style="left:796.0px;top:1691px"><i style="left:0.00px;font-weight:700;font-style:italic;color:#45cde1">O</i><i style="left:14.45px;font-weight:700;font-style:italic;color:#51d0e2">W</i><i style="left:28.90px;font-weight:700;font-style:italic;color:#5ed3e4">E</i><i style="left:43.35px;font-weight:700;font-style:italic;color:#6ad6e5">D</i><i style="left:57.80px;font-weight:700;font-style:italic;color:#76d9e7">_</i><i style="left:72.25px;font-weight:700;font-style:italic;color:#83dce8">C</i><i style="left:86.70px;font-weight:700;font-style:italic;color:#8fdfea">O</i><i style="left:101.15px;font-weight:700;font-style:italic;color:#9be2ec">M</i><i style="left:115.60px;font-weight:700;font-style:italic;color:#aae6ee">M</i><i style="left:130.05px;font-weight:700;font-style:italic;color:#b9eaf0">A</i><i style="left:144.50px;font-weight:700;font-style:italic;color:#c8eef3">N</i><i style="left:158.95px;font-weight:700;font-style:italic;color:#d7f2f5">D</i><i style="left:173.40px;font-weight:700;font-style:italic;color:#e6f6f8">S</i><i style="left:187.85px;color:#d4d4d4">.</i><i style="left:202.30px;color:#e6e287">c</i><i style="left:216.75px;color:#e6e287">o</i><i style="left:231.20px;color:#e6e287">n</i><i style="left:245.65px;color:#e6e287">t</i><i style="left:260.10px;color:#e6e287">a</i><i style="left:274.55px;color:#e6e287">i</i><i style="left:289.00px;color:#e6e287">n</i><i style="left:303.45px;color:#e6e287">s</i><i style="left:317.90px;color:#f5cf3c">(</i><i style="left:332.35px;color:#d4d4d4">p</i><i style="left:346.80px;color:#d4d4d4">a</i><i style="left:361.25px;color:#d4d4d4">y</i><i style="left:375.70px;color:#d4d4d4">l</i><i style="left:390.15px;color:#d4d4d4">o</i><i style="left:404.60px;color:#d4d4d4">a</i><i style="left:419.05px;color:#d4d4d4">d</i><i style="left:433.50px;color:#f5cf3c">)</i><i style="left:447.95px;color:#4aa0f5">)</i><i style="left:476.85px;color:#4aa0f5">{</i></div>
<div class="cl" style="left:796.0px;top:1727px"><i style="left:0.00px;color:#e28de4">r</i><i style="left:14.45px;color:#e28de4">n</i><i style="left:43.35px;font-weight:700;font-style:italic;color:#8fdfea">R</i><i style="left:57.80px;color:#d4d4d4">.</i><i style="left:72.25px;color:#e6e287">e</i><i style="left:86.70px;color:#e6e287">r</i><i style="left:101.15px;color:#e6e287">r</i><i style="left:115.60px;color:#e6e287">o</i><i style="left:130.05px;color:#e6e287">r</i><i style="left:144.50px;color:#f5cf3c">(</i><i style="left:158.95px;color:#e5ad5e">"</i><svg style="left:173.90px;top:0" width="24" height="36"><path d="M4,7 H21 M3,17 H18 M3,22 H18 M3,27 H20 M5,9 V28 M12,7 V24 M12,16 L20,28" fill="none" stroke="#e5ad5e" stroke-width="2"/></svg><svg style="left:197.90px;top:0" width="24" height="36"><path d="M3,7 H19 M12,6 V26 M19,10 V27 M12,16 L20,28" fill="none" stroke="#e5ad5e" stroke-width="2"/></svg><svg style="left:221.90px;top:0" width="24" height="36"><path d="M6,7 H18 M5,22 H19 M6,27 H20 M12,13 V21" fill="none" stroke="#e5ad5e" stroke-width="2"/></svg><svg style="left:245.90px;top:0" width="24" height="36"><path d="M3,7 H21 M5,12 H19 M6,17 H20 M3,27 H21 M12,10 V24 M12,16 L4,28 M12,16 L20,28" fill="none" stroke="#e5ad5e" stroke-width="2"/></svg><svg style="left:269.90px;top:0" width="24" height="36"><path d="M5,17 H21 M4,22 H19 M12,7 V28" fill="none" stroke="#e5ad5e" stroke-width="2"/></svg><svg style="left:293.90px;top:0" width="24" height="36"><path d="M3,7 H18 M6,17 H20 M6,27 H20 M12,10 V21" fill="none" stroke="#e5ad5e" stroke-width="2"/></svg><svg style="left:317.90px;top:0" width="24" height="36"><path d="M6,7 H21 M6,17 H19 M4,22 H20 M3,27 H19 M5,13 V27 M12,13 V28 M19,13 V24 M12,16 L20,28" fill="none" stroke="#e5ad5e" stroke-width="2"/></svg><svg style="left:341.90px;top:0" width="24" height="36"><path d="M3,7 H20 M6,17 H18 M4,27 H20 M5,7 V25 M12,10 V23 M12,16 L20,28" fill="none" stroke="#e5ad5e" stroke-width="2"/></svg><svg style="left:365.90px;top:0" width="24" height="36"><path d="M3,7 H19 M5,27 H18 M5,6 V24 M12,6 V22 M19,6 V21 M12,16 L4,28 M12,16 L20,28" fill="none" stroke="#e5ad5e" stroke-width="2"/></svg><i style="left:389.40px;color:#e5ad5e">"</i><i style="left:403.85px;color:#f5cf3c">)</i><i style="left:418.30px;color:#d4d4d4">;</i></div>
<div class="cl" style="left:797.5px;top:1655px"><svg style="left:0.50px;top:0" width="24" height="36"><path d="M3,7 H20 M6,17 H18 M4,27 H20 M5,7 V25 M12,10 V23 M12,16 L20,28" fill="none" stroke="#7fa35f" stroke-width="2"/></svg><svg style="left:24.50px;top:0" width="24" height="36"><path d="M4,7 H21 M5,12 H19 M4,17 H18 M3,22 H20 M3,27 H21 M5,9 V28 M12,11 V24 M12,16 L4,28 M12,16 L20,28" fill="none" stroke="#7fa35f" stroke-width="2"/></svg><svg style="left:48.50px;top:0" width="24" height="36"><path d="M3,7 H21 M5,12 H21 M4,17 H19 M5,7 V28 M12,10 V28 M19,8 V24 M12,16 L20,28" fill="none" stroke="#7fa35f" stroke-width="2"/></svg><svg style="left:72.50px;top:0" width="24" height="36"><path d="M4,7 H19 M3,22 H20 M5,27 H19 M5,8 V24 M12,11 V22 M19,8 V21 M12,16 L20,28" fill="none" stroke="#7fa35f" stroke-width="2"/></svg><svg style="left:96.50px;top:0" width="24" height="36"><path d="M3,7 H19 M12,6 V26 M19,10 V27 M12,16 L20,28" fill="none" stroke="#7fa35f" stroke-width="2"/></svg><svg style="left:120.50px;top:0" width="24" height="36"><path d="M6,7 H18 M5,22 H19 M6,27 H20 M12,13 V21" fill="none" stroke="#7fa35f" stroke-width="2"/></svg><svg style="left:144.50px;top:0" width="24" height="36"><path d="M3,17 H18 M4,27 H19 M5,7 V26 M12,6 V23 M19,6 V22 M12,16 L4,28 M12,16 L20,28" fill="none" stroke="#7fa35f" stroke-width="2"/></svg><svg style="left:168.50px;top:0" width="24" height="36"><path d="M5,7 H21 M4,12 H19 M3,17 H20 M3,27 H19 M12,8 V24 M19,7 V26 M12,16 L20,28" fill="none" stroke="#7fa35f" stroke-width="2"/></svg><svg style="left:192.50px;top:0" width="24" height="36"><path d="M4,7 H21 M4,22 H19 M12,11 V28" fill="none" stroke="#7fa35f" stroke-width="2"/></svg><svg style="left:216.50px;top:0" width="24" height="36"><path d="M4,7 H21 M4,17 H18 M3,22 H18 M3,27 H20 M5,9 V28 M12,11 V24 M12,16 L20,28" fill="none" stroke="#7fa35f" stroke-width="2"/></svg></div>
<div class="cl" style="left:796.0px;top:1007px"><i style="left:0.00px;font-weight:700;font-style:italic;color:#4acee1">p</i><i style="left:14.45px;font-weight:700;font-style:italic;color:#61d4e4">r</i><i style="left:28.90px;font-weight:700;font-style:italic;color:#78d9e7">o</i><i style="left:43.35px;font-weight:700;font-style:italic;color:#8fdfea">c</i><i style="left:57.80px;font-weight:700;font-style:italic;color:#a7e5ed">e</i><i style="left:72.25px;font-weight:700;font-style:italic;color:#c4edf2">s</i><i style="left:86.70px;font-weight:700;font-style:italic;color:#e0f4f7">s</i><i style="left:115.60px;color:#d4d4d4">=</i><i style="left:144.50px;color:#4aa0f5">(</i><i style="left:158.95px;color:#d4d4d4">P</i><i style="left:173.40px;color:#d4d4d4">r</i><i style="left:187.85px;color:#d4d4d4">o</i><i style="left:202.30px;color:#d4d4d4">c</i><i style="left:216.75px;color:#d4d4d4">e</i><i style="left:231.20px;color:#d4d4d4">s</i><i style="left:245.65px;color:#d4d4d4">s</i><i style="left:260.10px;color:#4aa0f5">)</i><i style="left:289.00px;font-weight:700;font-style:italic;color:#4ccee2">m</i><i style="left:303.45px;font-weight:700;font-style:italic;color:#67d5e5">e</i><i style="left:317.90px;font-weight:700;font-style:italic;color:#82dce8">t</i><i style="left:332.35px;font-weight:700;font-style:italic;color:#9ce2ec">h</i><i style="left:346.80px;font-weight:700;font-style:italic;color:#bdebf1">o</i><i style="left:361.25px;font-weight:700;font-style:italic;color:#def4f6">d</i><i style="left:375.70px;color:#d4d4d4">.</i><i style="left:390.15px;color:#e6e287">i</i><i style="left:404.60px;color:#e6e287">n</i><i style="left:419.05px;color:#e6e287">v</i><i style="left:433.50px;color:#e6e287">o</i><i style="left:447.95px;color:#e6e287">k</i><i style="left:462.40px;color:#e6e287">e</i><i style="left:476.85px;color:#4aa0f5">(</i><i style="left:491.30px;font-weight:700;color:#4586db">n</i><i style="left:505.75px;font-weight:700;color:#5b97e4">u</i><i style="left:520.20px;font-weight:700;color:#72a9ec">l</i><i style="left:534.65px;font-weight:700;color:#8ebcf2">l</i><i style="left:549.10px;color:#d4d4d4">,</i><i style="left:563.55px;color:#b89050">·</i><i style="left:578.00px;color:#e28de4">n</i><i style="left:592.45px;color:#e28de4">e</i><i style="left:606.90px;color:#e28de4">w</i><i style="left:621.35px;color:#b89050">·</i><i style="left:635.80px;color:#6fc6a8">S</i><i style="left:650.25px;color:#6fc6a8">t</i><i style="left:664.70px;color:#6fc6a8">r</i><i style="left:679.15px;color:#6fc6a8">i</i><i style="left:693.60px;color:#6fc6a8">n</i><i style="left:708.05px;color:#6fc6a8">g</i><i style="left:722.50px;color:#f5cf3c">[</i><i style="left:736.95px;color:#f5cf3c">]</i><i style="left:751.40px;color:#f5cf3c">{</i><i style="left:765.85px;color:#d4d4d4">p</i><i style="left:780.30px;color:#d4d4d4">a</i><i style="left:794.75px;color:#d4d4d4">y</i><i style="left:809.20px;color:#d4d4d4">l</i><i style="left:823.65px;color:#d4d4d4">o</i><i style="left:838.10px;color:#d4d4d4">a</i><i style="left:852.55px;color:#d4d4d4">d</i><i style="left:867.00px;color:#f5cf3c">}</i><i style="left:881.45px;color:#d4d4d4">,</i><i style="left:895.90px;color:#b89050">·</i><i style="left:910.35px;font-weight:700;color:#4586db">n</i><i style="left:924.80px;font-weight:700;color:#5b97e4">u</i><i style="left:939.25px;font-weight:700;color:#72a9ec">l</i><i style="left:953.70px;font-weight:700;color:#8ebcf2">l</i><i style="left:968.15px;color:#d4d4d4">,</i><i style="left:982.60px;color:#b89050">·</i><i style="left:997.05px;font-weight:700;color:#4586db">n</i><i style="left:1011.50px;font-weight:700;color:#5b97e4">u</i><i style="left:1025.95px;font-weight:700;color:#72a9ec">l</i><i style="left:1040.40px;font-weight:700;color:#8ebcf2">l</i><i style="left:1054.85px;color:#d4d4d4">,</i><i style="left:1069.30px;color:#b89050">·</i><i style="left:1083.75px;font-weight:700;color:#4586db">n</i><i style="left:1098.20px;font-weight:700;color:#5b97e4">u</i><i style="left:1112.65px;font-weight:700;color:#72a9ec">l</i><i style="left:1127.10px;font-weight:700;color:#8ebcf2">l</i><i style="left:1141.55px;color:#d4d4d4">,</i><i style="left:1156.00px;color:#b89050">·</i><i style="left:1170.45px;font-weight:700;color:#4384da">f</i><i style="left:1184.90px;font-weight:700;color:#5492e1">a</i><i style="left:1199.35px;font-weight:700;color:#66a0e8">l</i><i style="left:1213.80px;font-weight:700;color:#7bafee">s</i><i style="left:1228.25px;font-weight:700;color:#91bef3">e</i></div>
</div></div>
</div></div>
<div class="a" style="left:676px;top:259px;width:1314px;height:73px;background:#1f1f1f;box-shadow:0 4px 6px -2px #000;overflow:hidden">
<div class="a" style="left:-676px;top:-259px;width:3104px;height:1942px">
<div class="cl" style="left:726.5px;top:261.5px;color:#6e7681">33</div>
<div class="cl" style="left:726.5px;top:297.5px;color:#6e7681">60</div>
<div class="a" style="left:808px;top:259px;width:1182px;height:73px;overflow:hidden"><div class="a" style="left:-808px;top:-259px;width:3104px;height:1942px">
<div class="cl" style="left:796.0px;top:261.5px"><i style="left:0.00px;color:#6fc6a8">m</i><i style="left:14.45px;color:#6fc6a8">a</i><i style="left:28.90px;color:#6fc6a8">n</i><i style="left:43.35px;color:#6fc6a8">d</i><i style="left:57.80px;color:#6fc6a8">C</i><i style="left:72.25px;color:#6fc6a8">o</i><i style="left:86.70px;color:#6fc6a8">n</i><i style="left:101.15px;color:#6fc6a8">t</i><i style="left:115.60px;color:#6fc6a8">r</i><i style="left:130.05px;color:#6fc6a8">o</i><i style="left:144.50px;color:#6fc6a8">l</i><i style="left:158.95px;color:#6fc6a8">l</i><i style="left:173.40px;color:#6fc6a8">e</i><i style="left:187.85px;color:#6fc6a8">r</i><i style="left:216.75px;color:#f5cf3c">{</i></div>
<div class="cl" style="left:796.0px;top:297.5px"><i style="left:14.45px;color:#da70d6">(</i><i style="left:28.90px;color:#6fc6a8">S</i><i style="left:43.35px;color:#6fc6a8">t</i><i style="left:57.80px;color:#6fc6a8">r</i><i style="left:72.25px;color:#6fc6a8">i</i><i style="left:86.70px;color:#6fc6a8">n</i><i style="left:101.15px;color:#6fc6a8">g</i><i style="left:130.05px;font-weight:700;font-style:italic;color:#4acee1">p</i><i style="left:144.50px;font-weight:700;font-style:italic;color:#61d4e4">a</i><i style="left:158.95px;font-weight:700;font-style:italic;color:#78d9e7">y</i><i style="left:173.40px;font-weight:700;font-style:italic;color:#8fdfea">l</i><i style="left:187.85px;font-weight:700;font-style:italic;color:#a7e5ed">o</i><i style="left:202.30px;font-weight:700;font-style:italic;color:#c4edf2">a</i><i style="left:216.75px;font-weight:700;font-style:italic;color:#e0f4f7">d</i><i style="left:231.20px;color:#da70d6">)</i><i style="left:260.10px;font-weight:700;color:#4183d9">t</i><i style="left:274.55px;font-weight:700;color:#508edf">h</i><i style="left:289.00px;font-weight:700;color:#5e9ae5">r</i><i style="left:303.45px;font-weight:700;color:#6ea6eb">o</i><i style="left:317.90px;font-weight:700;color:#80b3ef">w</i><i style="left:332.35px;font-weight:700;color:#93c0f3">s</i><i style="left:361.25px;color:#6fc6a8">I</i><i style="left:375.70px;color:#6fc6a8">O</i><i style="left:390.15px;color:#6fc6a8">E</i><i style="left:404.60px;color:#6fc6a8">x</i><i style="left:419.05px;color:#6fc6a8">c</i><i style="left:433.50px;color:#6fc6a8">e</i><i style="left:447.95px;color:#6fc6a8">p</i><i style="left:462.40px;color:#6fc6a8">t</i><i style="left:476.85px;color:#6fc6a8">i</i><i style="left:491.30px;color:#6fc6a8">o</i><i style="left:505.75px;color:#6fc6a8">n</i><i style="left:534.65px;color:#da70d6">{</i></div>
<div class="a" style="left:1359px;top:313px;width:88px;height:2px;background:repeating-linear-gradient(90deg,#d9b13c 0 5px,transparent 5px 8px)"></div>
<div class="cl" style="left:1459.5px;top:297.5px"><i style="left:0.00px;color:#d9b13c">S</i><i style="left:14.45px;color:#d9b13c">t</i><i style="left:28.90px;color:#d9b13c">e</i><i style="left:43.35px;color:#d9b13c">p</i><i style="left:72.25px;color:#d9b13c">1</i><i style="left:86.70px;color:#d9b13c">:</i><i style="left:115.60px;color:#d9b13c">p</i><i style="left:130.05px;color:#d9b13c">a</i><i style="left:144.50px;color:#d9b13c">y</i><i style="left:158.95px;color:#d9b13c">l</i><i style="left:173.40px;color:#d9b13c">o</i><i style="left:187.85px;color:#d9b13c">a</i><i style="left:202.30px;color:#d9b13c">d</i><i style="left:231.20px;color:#d9b13c">:</i><i style="left:260.10px;color:#d9b13c">S</i><i style="left:274.55px;color:#d9b13c">t</i><i style="left:289.00px;color:#d9b13c">r</i><i style="left:303.45px;color:#d9b13c">i</i><i style="left:317.90px;color:#d9b13c">n</i><i style="left:332.35px;color:#d9b13c">g</i></div>
</div></div></div></div>
<div class="a" style="left:2198px;top:146px;width:794px;height:1604px;background:#1f1f1f;border-left:1px solid #2b2b2b"></div>
<div class="a" style="left:2198px;top:146px;width:794px;height:69px;background:#181818;border-bottom:1px solid #2b2b2b"></div>
<div class="a" style="left:2198px;top:146px;width:217px;height:69px;border-right:1px solid #2b2b2b;border-left:1px solid #2b2b2b;overflow:hidden"><div class="a " style="left:-14px;top:14.7px;height:44px;line-height:44px;font-family:'Liberation Sans';font-size:26px;font-weight:400;font-style:normal;color:#9d9d9d;white-space:pre;letter-spacing:0.269px;">SARIF Results</div></div>
<div class="a" style="left:2415px;top:146px;width:396px;height:69px;background:#1f1f1f;border-right:1px solid #2b2b2b"></div>
<div class="a" style="left:2415px;top:146px;width:396px;height:4px;background:linear-gradient(90deg,#e0609a 0%,#b89a8a 30%,#8fd9a0 60%,#5fe8a0 80%,#5fd8b0 100%)"></div>
<div class="a " style="left:2480.6px;top:160.7px;height:44px;line-height:44px;font-family:'Liberation Sans';font-size:26px;font-weight:400;font-style:normal;color:#ffffff;white-space:pre;letter-spacing:0.279px;">CodeQL Query Results</div>
<svg style="left:0;top:0" width="1" height="1"><g fill="none" stroke-width="2.2" stroke-linecap="round" stroke-linejoin="round"><path d="M2452,172.5 H2468 M2452,178 H2465 M2452,183.5 H2468 M2452,189 H2463" stroke="#e0e0e0" stroke-width="2.2"/><path d="M2773,172.5 L2792,191 M2792,172.5 L2773,191" stroke="#e0e0e0"/><rect x="2881" y="168" width="27" height="28" rx="5" stroke="#cccccc"/><path d="M2894.5,168 V196" stroke="#cccccc"/></g><defs><path id="oalk2" d="M-5.5,3.4 V-10 A8,8 0 0 1 9.3,-14.8"/></defs><g fill="none" stroke="#e0e0e0" stroke-width="2.4" stroke-linejoin="round" transform="translate(2841.5,181)"><use href="#oalk2" transform="rotate(0)"/><use href="#oalk2" transform="rotate(60)"/><use href="#oalk2" transform="rotate(120)"/><use href="#oalk2" transform="rotate(180)"/><use href="#oalk2" transform="rotate(240)"/><use href="#oalk2" transform="rotate(300)"/></g></svg>
<div class="a" style="left:2938px;top:179px;width:5px;height:5px;border-radius:50%;background:#ccc;box-shadow:9px 0 0 #ccc,18px 0 0 #ccc"></div>
<div class="a" style="left:2163px;top:179px;width:0px;height:5px"></div>
<div class="a " style="left:2254px;top:280.3px;height:51px;line-height:51px;font-family:'Liberation Sans';font-size:30px;font-weight:700;font-style:normal;color:#a0a0a0;white-space:pre;">«</div>
<div class="a " style="left:2307px;top:281.1px;height:44px;line-height:44px;font-family:'Liberation Sans';font-size:26px;font-weight:400;font-style:normal;color:#cccccc;white-space:pre;">1</div>
<div class="a" style="left:2296px;top:328px;width:74px;height:2px;background:#cccccc"></div>
<div class="a " style="left:2376px;top:283.4px;height:44px;line-height:44px;font-family:'Liberation Sans';font-size:26px;font-weight:400;font-style:normal;color:#cccccc;white-space:pre;letter-spacing:-1.107px;">/ 1</div>
<div class="a " style="left:2419px;top:280.3px;height:51px;line-height:51px;font-family:'Liberation Sans';font-size:30px;font-weight:700;font-style:normal;color:#a0a0a0;white-space:pre;">»</div>
<div class="a " style="left:2507px;top:223.5px;height:44px;line-height:44px;font-family:'Liberation Sans';font-size:26px;font-weight:400;font-style:normal;color:#cccccc;white-space:pre;letter-spacing:0.393px;">example.ql on</div>
<div class="a " style="left:2507px;top:253.5px;height:44px;line-height:44px;font-family:'Liberation Sans';font-size:26px;font-weight:400;font-style:normal;color:#cccccc;white-space:pre;letter-spacing:0.616px;">javasecpro - finished</div>
<div class="a " style="left:2507px;top:283.5px;height:44px;line-height:44px;font-family:'Liberation Sans';font-size:26px;font-weight:400;font-style:normal;color:#cccccc;white-space:pre;letter-spacing:0.438px;">in 0 seconds (1</div>
<div class="a " style="left:2507px;top:313.5px;height:44px;line-height:44px;font-family:'Liberation Sans';font-size:26px;font-weight:400;font-style:normal;color:#cccccc;white-space:pre;letter-spacing:0.554px;">results) [2025/12/16</div>
<div class="a " style="left:2507px;top:343.5px;height:44px;line-height:44px;font-family:'Liberation Sans';font-size:26px;font-weight:400;font-style:normal;color:#cccccc;white-space:pre;letter-spacing:-0.715px;">17:27:52]</div>
<div class="a " style="left:2857px;top:267.3px;height:44px;line-height:44px;font-family:'Liberation Sans';font-size:26px;font-weight:400;font-style:normal;color:#4ea1f3;white-space:pre;letter-spacing:-0.252px;">Open</div>
<div class="a " style="left:2827px;top:298.2px;height:44px;line-height:44px;font-family:'Liberation Sans';font-size:26px;font-weight:400;font-style:normal;color:#4ea1f3;white-space:pre;letter-spacing:-0.173px;">example.ql</div>
<div class="a" style="left:2238px;top:431px;width:130px;height:34px;background:#2e2e2e"></div>
<div class="a " style="left:2246px;top:427.7px;height:44px;line-height:44px;font-family:'Liberation Sans';font-size:26px;font-weight:400;font-style:normal;color:#cccccc;white-space:pre;letter-spacing:0.944px;">#select</div>
<svg style="left:0;top:0" width="1" height="1"><path d="M2346,445 L2353,452 L2360,445" fill="none" stroke="#cccccc" stroke-width="2" stroke-linecap="round" stroke-linejoin="round"/></svg>
<div class="a " style="left:2865px;top:427.7px;height:44px;line-height:44px;font-family:'Liberation Sans';font-size:26px;font-weight:400;font-style:normal;color:#cccccc;white-space:pre;letter-spacing:0.092px;">1 result</div>
<div class="a" style="left:2238px;top:479px;width:713px;height:45px;background:#3b3b3b;border-bottom:1px solid #4a4c52"></div>
<div class="a" style="left:2238px;top:524px;width:713px;height:104px;background:#2a2a2a"></div>
<div class="a" style="left:2281px;top:524px;width:140px;height:104px;background:#986e25"></div>
<div class="a " style="left:2251px;top:482.5px;height:41px;line-height:41px;font-family:'Liberation Sans';font-size:24px;font-weight:700;font-style:normal;color:#8b8b8b;white-space:pre;">#</div>
<div class="a " style="left:2297px;top:481.0px;height:44px;line-height:44px;font-family:'Liberation Sans';font-size:26px;font-weight:700;font-style:normal;color:#8b8b8b;white-space:pre;letter-spacing:-0.062px;">invoke</div>
<div class="a " style="left:2459px;top:481.0px;height:44px;line-height:44px;font-family:'Liberation Sans';font-size:26px;font-weight:700;font-style:normal;color:#8b8b8b;white-space:pre;">p</div>
<div class="a " style="left:2714px;top:481.0px;height:44px;line-height:44px;font-family:'Liberation Sans';font-size:26px;font-weight:700;font-style:normal;color:#8b8b8b;white-space:pre;letter-spacing:1.206px;">[2]</div>
<div class="a " style="left:2251.5px;top:556.0px;height:44px;line-height:44px;font-family:'Liberation Sans';font-size:26px;font-weight:400;font-style:normal;color:#cccccc;white-space:pre;">1</div>
<div class="a " style="left:2295.4px;top:556.0px;height:44px;line-height:44px;font-family:'Liberation Sans';font-size:26px;font-weight:400;font-style:normal;color:#5aa8f5;white-space:pre;letter-spacing:-0.141px;">invoke(...)</div>
<div class="a " style="left:2435.3px;top:556.0px;height:44px;line-height:44px;font-family:'Liberation Sans';font-size:26px;font-weight:400;font-style:normal;color:#5aa8f5;white-space:pre;letter-spacing:-0.240px;">payload</div>
<div class="a " style="left:2552px;top:526.1px;height:44px;line-height:44px;font-family:'Liberation Sans';font-size:26px;font-weight:400;font-style:normal;color:#cccccc;white-space:pre;letter-spacing:0.698px;">Method parameter flows into</div>
<div class="a " style="left:2552px;top:556.1px;height:44px;line-height:44px;font-family:'Liberation Sans';font-size:26px;font-weight:400;font-style:normal;color:#cccccc;white-space:pre;letter-spacing:0.676px;">reflective Method.invoke</div>
<div class="a " style="left:2552px;top:586.1px;height:44px;line-height:44px;font-family:'Liberation Sans';font-size:26px;font-weight:400;font-style:normal;color:#cccccc;white-space:pre;letter-spacing:0.617px;">arguments</div>
<div class="a" style="left:112px;top:1750px;width:2880px;height:44px;background:#181818;border-top:1px solid #2b2b2b"></div>
<div class="a " style="left:231.4px;top:1752.2px;height:41px;line-height:41px;font-family:'Liberation Sans';font-size:24px;font-weight:400;font-style:normal;color:#cccccc;white-space:pre;letter-spacing:0.408px;">main*</div>
<div class="a " style="left:412.2px;top:1752.2px;height:41px;line-height:41px;font-family:'Liberation Sans';font-size:24px;font-weight:400;font-style:normal;color:#cccccc;white-space:pre;letter-spacing:-0.559px;">5</div>
<div class="a " style="left:474px;top:1752.2px;height:41px;line-height:41px;font-family:'Liberation Sans';font-size:24px;font-weight:400;font-style:normal;color:#cccccc;white-space:pre;letter-spacing:-0.016px;">197</div>
<div class="a " style="left:564.5px;top:1752.2px;height:41px;line-height:41px;font-family:'Liberation Sans';font-size:24px;font-weight:400;font-style:normal;color:#cccccc;white-space:pre;letter-spacing:-0.211px;">11</div>
<div class="a " style="left:664px;top:1752.2px;height:41px;line-height:41px;font-family:'Liberation Sans';font-size:24px;font-weight:400;font-style:normal;color:#cccccc;white-space:pre;letter-spacing:0.018px;">Java: Ready</div>
<div class="a " style="left:870.4px;top:1752.2px;height:41px;line-height:41px;font-family:'Liberation Sans';font-size:24px;font-weight:400;font-style:normal;color:#cccccc;white-space:pre;letter-spacing:0.148px;">Sarif</div>
<div class="a " style="left:2565.5px;top:1752.2px;height:41px;line-height:41px;font-family:'Liberation Sans';font-size:24px;font-weight:400;font-style:normal;color:#cccccc;white-space:pre;letter-spacing:0.083px;">Go Live</div>
<div class="a " style="left:2682.4px;top:1752.2px;height:41px;line-height:41px;font-family:'Liberation Sans';font-size:24px;font-weight:400;font-style:normal;color:#cccccc;white-space:pre;letter-spacing:0.610px;">CodeQL CLI v2.23.8</div>
<svg style="left:0;top:0" width="1" height="1"><g fill="none" stroke="#cccccc" stroke-width="2.2" stroke-linecap="round" stroke-linejoin="round"><path d="M134.2,1767.5 L142.8,1775.7 L134.2,1784.4 M153.7,1760.2 L145.5,1768.4 L153.7,1776.6"/><circle cx="201" cy="1760.5" r="3.8"/><circle cx="201" cy="1783" r="3.8"/><path d="M201,1764.3 V1779.2 M201,1776 Q201,1770 208,1770"/><path d="M210,1770 V1766 a5,5 0 0 1 10,0 V1770"/></g><circle cx="215" cy="1779.5" r="9" fill="#cccccc"/><path d="M215,1774 V1785 M210.2,1776.8 L219.8,1782.2 M219.8,1776.8 L210.2,1782.2" stroke="#181818" stroke-width="2"/><g fill="none" stroke="#cccccc" stroke-width="2.2" stroke-linecap="round" stroke-linejoin="round"><path d="M315,1777 a10,10 0 0 1 14,-14 M326,1758 L330,1763 L325,1766 M333,1767 a10,10 0 0 1 -14,14 M322,1786 L318,1781 L323,1778"/><circle cx="388.2" cy="1772" r="13"/><path d="M382.5,1766.3 L393.9,1777.7 M393.9,1766.3 L382.5,1777.7"/><path d="M448.6,1758.5 L462,1784 H435.2 Z"/><path d="M448.6,1767 V1775 M448.6,1779 V1779.5"/><circle cx="539.6" cy="1772" r="13"/><path d="M539.6,1769 V1779 M539.6,1765 V1765.5"/><path d="M629,1768 H650 V1776 a8,8 0 0 1 -8,8 H637 a8,8 0 0 1 -8,-8 Z M650,1770 h2 a4,4 0 0 1 0,8 h-2.5 M632,1757 l2,4 M637.5,1757 l2,4 M643,1757 l2,4"/><path d="M846.8,1759 L857.5,1763 V1772 Q857.5,1781 846.8,1785 Q836,1781 836,1772 V1763 Z"/></g><circle cx="846.8" cy="1769.5" r="2.6" fill="#cccccc"/><path d="M846.8,1770 V1776" stroke="#cccccc" stroke-width="2.2"/><g fill="#cccccc"><path d="M2401,1770 Q2398,1778 2401,1782 Q2414,1790 2427,1782 Q2430,1778 2427,1770 Z"/><circle cx="2408" cy="1765" r="7"/><circle cx="2420" cy="1765" r="7"/></g><g fill="#181818"><circle cx="2408" cy="1765" r="3.5"/><circle cx="2420" cy="1765" r="3.5"/><rect x="2408.5" y="1775" width="3" height="6" rx="1"/><rect x="2416.5" y="1775" width="3" height="6" rx="1"/></g><defs><path id="qarm2" d="M-7.3,-23.6 L0.2,-23.6 L4,-18.3 L16.9,-18.3 L20.6,-11.5 L-6.5,-11.5 L-3.6,-17.1 L-6.5,-22.2 Z"/></defs><g fill="#cccccc" transform="translate(2478,1772) scale(0.64)"><use href="#qarm2"/><use href="#qarm2" transform="rotate(120)"/><use href="#qarm2" transform="rotate(240)"/><path d="M-7.7,-5.75 L8.9,-5.75 L-0.2,10.1 Z"/></g><g fill="none" stroke="#cccccc" stroke-width="2.2" stroke-linecap="round"><path d="M2534,1763 a13,13 0 0 0 0,18 M2550,1763 a13,13 0 0 1 0,18 M2538.5,1767 a7,7 0 0 0 0,10 M2545.5,1767 a7,7 0 0 1 0,10"/></g><circle cx="2542" cy="1772" r="2.2" fill="#cccccc"/><g fill="none" stroke="#cccccc" stroke-width="2.2" stroke-linejoin="round"><path d="M2950,1782 H2972 L2968,1776 V1769 a8,8 0 0 0 -16,0 V1776 Z M2957,1782 a3,3 0 0 0 6,0"/></g><circle cx="2968" cy="1764.6" r="6" fill="#cccccc" stroke="#181818" stroke-width="2"/></svg>
<div class="a" style="left:112px;top:76px;width:2880px;height:1px;background:linear-gradient(90deg,rgba(160,160,160,0.5),#9a9a9a 3%,#9a9a9a 97%,rgba(160,160,160,0.5))"></div>
<div class="a" style="left:1990px;top:259px;width:181px;height:1491px;overflow:hidden;box-shadow:-4px 0 5px -3px #000 inset">
<svg style="left:0;top:0" width="181" height="600">
<rect x="8" y="172.5" width="172" height="4" fill="#6b2626"/>
<rect x="8" y="248.5" width="172" height="4" fill="#6b2626"/>
<rect x="80" y="328.5" width="100" height="4" fill="#2d5a96"/>
<rect x="114.0" y="172.5" width="14" height="4" fill="#c93a2e"/>
<rect x="112.0" y="248.5" width="14" height="4" fill="#c93a2e"/>
<rect x="8.0" y="1.4" width="13.5" height="2" fill="#c586c0" fill-opacity="0.42"/>
<rect x="24.0" y="1.4" width="5.5" height="2" fill="#9cdcfe" fill-opacity="0.42"/>
<rect x="30.0" y="1.4" width="1.5" height="2" fill="#d4d4d4" fill-opacity="0.42"/>
<rect x="32.0" y="1.4" width="11.5" height="2" fill="#9cdcfe" fill-opacity="0.42"/>
<rect x="44.0" y="1.4" width="1.5" height="2" fill="#d4d4d4" fill-opacity="0.42"/>
<rect x="46.0" y="1.4" width="13.5" height="2" fill="#9cdcfe" fill-opacity="0.42"/>
<rect x="60.0" y="1.4" width="1.5" height="2" fill="#d4d4d4" fill-opacity="0.42"/>
<rect x="62.0" y="1.4" width="5.5" height="2" fill="#9cdcfe" fill-opacity="0.42"/>
<rect x="68.0" y="1.4" width="1.5" height="2" fill="#d4d4d4" fill-opacity="0.42"/>
<rect x="70.0" y="1.4" width="13.5" height="2" fill="#9cdcfe" fill-opacity="0.42"/>
<rect x="84.0" y="1.4" width="1.5" height="2" fill="#d4d4d4" fill-opacity="0.42"/>
<rect x="8.0" y="9.4" width="11.5" height="2" fill="#c586c0" fill-opacity="0.42"/>
<rect x="22.0" y="9.4" width="3.5" height="2" fill="#9cdcfe" fill-opacity="0.42"/>
<rect x="26.0" y="9.4" width="1.5" height="2" fill="#d4d4d4" fill-opacity="0.42"/>
<rect x="28.0" y="9.4" width="13.5" height="2" fill="#9cdcfe" fill-opacity="0.42"/>
<rect x="42.0" y="9.4" width="1.5" height="2" fill="#d4d4d4" fill-opacity="0.42"/>
<rect x="44.0" y="9.4" width="21.5" height="2" fill="#9cdcfe" fill-opacity="0.42"/>
<rect x="66.0" y="9.4" width="1.5" height="2" fill="#d4d4d4" fill-opacity="0.42"/>
<rect x="68.0" y="9.4" width="5.5" height="2" fill="#4ec9b0" fill-opacity="0.42"/>
<rect x="74.0" y="9.4" width="1.5" height="2" fill="#d4d4d4" fill-opacity="0.42"/>
<rect x="8.0" y="13.4" width="11.5" height="2" fill="#c586c0" fill-opacity="0.42"/>
<rect x="22.0" y="13.4" width="3.5" height="2" fill="#9cdcfe" fill-opacity="0.42"/>
<rect x="26.0" y="13.4" width="1.5" height="2" fill="#d4d4d4" fill-opacity="0.42"/>
<rect x="28.0" y="13.4" width="13.5" height="2" fill="#9cdcfe" fill-opacity="0.42"/>
<rect x="42.0" y="13.4" width="1.5" height="2" fill="#d4d4d4" fill-opacity="0.42"/>
<rect x="44.0" y="13.4" width="21.5" height="2" fill="#9cdcfe" fill-opacity="0.42"/>
<rect x="66.0" y="13.4" width="1.5" height="2" fill="#d4d4d4" fill-opacity="0.42"/>
<rect x="68.0" y="13.4" width="23.5" height="2" fill="#4ec9b0" fill-opacity="0.42"/>
<rect x="92.0" y="13.4" width="1.5" height="2" fill="#d4d4d4" fill-opacity="0.42"/>
<rect x="8.0" y="17.4" width="11.5" height="2" fill="#c586c0" fill-opacity="0.42"/>
<rect x="22.0" y="17.4" width="11.5" height="2" fill="#9cdcfe" fill-opacity="0.42"/>
<rect x="34.0" y="17.4" width="1.5" height="2" fill="#d4d4d4" fill-opacity="0.42"/>
<rect x="36.0" y="17.4" width="11.5" height="2" fill="#9cdcfe" fill-opacity="0.42"/>
<rect x="48.0" y="17.4" width="1.5" height="2" fill="#d4d4d4" fill-opacity="0.42"/>
<rect x="50.0" y="17.4" width="9.5" height="2" fill="#9cdcfe" fill-opacity="0.42"/>
<rect x="60.0" y="17.4" width="1.5" height="2" fill="#d4d4d4" fill-opacity="0.42"/>
<rect x="62.0" y="17.4" width="9.5" height="2" fill="#4ec9b0" fill-opacity="0.42"/>
<rect x="72.0" y="17.4" width="1.5" height="2" fill="#d4d4d4" fill-opacity="0.42"/>
<rect x="8.0" y="21.4" width="11.5" height="2" fill="#c586c0" fill-opacity="0.42"/>
<rect x="22.0" y="21.4" width="5.5" height="2" fill="#9cdcfe" fill-opacity="0.42"/>
<rect x="28.0" y="21.4" width="1.5" height="2" fill="#d4d4d4" fill-opacity="0.42"/>
<rect x="30.0" y="21.4" width="29.5" height="2" fill="#9cdcfe" fill-opacity="0.42"/>
<rect x="60.0" y="21.4" width="1.5" height="2" fill="#d4d4d4" fill-opacity="0.42"/>
<rect x="62.0" y="21.4" width="19.5" height="2" fill="#9cdcfe" fill-opacity="0.42"/>
<rect x="82.0" y="21.4" width="1.5" height="2" fill="#d4d4d4" fill-opacity="0.42"/>
<rect x="84.0" y="21.4" width="19.5" height="2" fill="#4ec9b0" fill-opacity="0.42"/>
<rect x="104.0" y="21.4" width="1.5" height="2" fill="#d4d4d4" fill-opacity="0.42"/>
<rect x="8.0" y="25.4" width="11.5" height="2" fill="#c586c0" fill-opacity="0.42"/>
<rect x="22.0" y="25.4" width="5.5" height="2" fill="#9cdcfe" fill-opacity="0.42"/>
<rect x="28.0" y="25.4" width="1.5" height="2" fill="#d4d4d4" fill-opacity="0.42"/>
<rect x="30.0" y="25.4" width="29.5" height="2" fill="#9cdcfe" fill-opacity="0.42"/>
<rect x="60.0" y="25.4" width="1.5" height="2" fill="#d4d4d4" fill-opacity="0.42"/>
<rect x="62.0" y="25.4" width="5.5" height="2" fill="#9cdcfe" fill-opacity="0.42"/>
<rect x="68.0" y="25.4" width="1.5" height="2" fill="#d4d4d4" fill-opacity="0.42"/>
<rect x="70.0" y="25.4" width="7.5" height="2" fill="#9cdcfe" fill-opacity="0.42"/>
<rect x="78.0" y="25.4" width="1.5" height="2" fill="#d4d4d4" fill-opacity="0.42"/>
<rect x="80.0" y="25.4" width="19.5" height="2" fill="#9cdcfe" fill-opacity="0.42"/>
<rect x="100.0" y="25.4" width="1.5" height="2" fill="#d4d4d4" fill-opacity="0.42"/>
<rect x="102.0" y="25.4" width="21.5" height="2" fill="#4ec9b0" fill-opacity="0.42"/>
<rect x="124.0" y="25.4" width="1.5" height="2" fill="#d4d4d4" fill-opacity="0.42"/>
<rect x="8.0" y="29.4" width="11.5" height="2" fill="#c586c0" fill-opacity="0.42"/>
<rect x="22.0" y="29.4" width="5.5" height="2" fill="#9cdcfe" fill-opacity="0.42"/>
<rect x="28.0" y="29.4" width="1.5" height="2" fill="#d4d4d4" fill-opacity="0.42"/>
<rect x="30.0" y="29.4" width="29.5" height="2" fill="#9cdcfe" fill-opacity="0.42"/>
<rect x="60.0" y="29.4" width="1.5" height="2" fill="#d4d4d4" fill-opacity="0.42"/>
<rect x="62.0" y="29.4" width="5.5" height="2" fill="#9cdcfe" fill-opacity="0.42"/>
<rect x="68.0" y="29.4" width="1.5" height="2" fill="#d4d4d4" fill-opacity="0.42"/>
<rect x="70.0" y="29.4" width="7.5" height="2" fill="#9cdcfe" fill-opacity="0.42"/>
<rect x="78.0" y="29.4" width="1.5" height="2" fill="#d4d4d4" fill-opacity="0.42"/>
<rect x="80.0" y="29.4" width="19.5" height="2" fill="#9cdcfe" fill-opacity="0.42"/>
<rect x="100.0" y="29.4" width="1.5" height="2" fill="#d4d4d4" fill-opacity="0.42"/>
<rect x="102.0" y="29.4" width="27.5" height="2" fill="#4ec9b0" fill-opacity="0.42"/>
<rect x="130.0" y="29.4" width="1.5" height="2" fill="#d4d4d4" fill-opacity="0.42"/>
<rect x="8.0" y="33.4" width="11.5" height="2" fill="#c586c0" fill-opacity="0.42"/>
<rect x="22.0" y="33.4" width="5.5" height="2" fill="#9cdcfe" fill-opacity="0.42"/>
<rect x="28.0" y="33.4" width="1.5" height="2" fill="#d4d4d4" fill-opacity="0.42"/>
<rect x="30.0" y="33.4" width="29.5" height="2" fill="#9cdcfe" fill-opacity="0.42"/>
<rect x="60.0" y="33.4" width="1.5" height="2" fill="#d4d4d4" fill-opacity="0.42"/>
<rect x="62.0" y="33.4" width="5.5" height="2" fill="#9cdcfe" fill-opacity="0.42"/>
<rect x="68.0" y="33.4" width="1.5" height="2" fill="#d4d4d4" fill-opacity="0.42"/>
<rect x="70.0" y="33.4" width="7.5" height="2" fill="#9cdcfe" fill-opacity="0.42"/>
<rect x="78.0" y="33.4" width="1.5" height="2" fill="#d4d4d4" fill-opacity="0.42"/>
<rect x="80.0" y="33.4" width="19.5" height="2" fill="#9cdcfe" fill-opacity="0.42"/>
<rect x="100.0" y="33.4" width="1.5" height="2" fill="#d4d4d4" fill-opacity="0.42"/>
<rect x="102.0" y="33.4" width="23.5" height="2" fill="#4ec9b0" fill-opacity="0.42"/>
<rect x="126.0" y="33.4" width="1.5" height="2" fill="#d4d4d4" fill-opacity="0.42"/>
<rect x="8.0" y="37.4" width="11.5" height="2" fill="#c586c0" fill-opacity="0.42"/>
<rect x="22.0" y="37.4" width="5.5" height="2" fill="#9cdcfe" fill-opacity="0.42"/>
<rect x="28.0" y="37.4" width="1.5" height="2" fill="#d4d4d4" fill-opacity="0.42"/>
<rect x="30.0" y="37.4" width="29.5" height="2" fill="#9cdcfe" fill-opacity="0.42"/>
<rect x="60.0" y="37.4" width="1.5" height="2" fill="#d4d4d4" fill-opacity="0.42"/>
<rect x="62.0" y="37.4" width="5.5" height="2" fill="#9cdcfe" fill-opacity="0.42"/>
<rect x="68.0" y="37.4" width="1.5" height="2" fill="#d4d4d4" fill-opacity="0.42"/>
<rect x="70.0" y="37.4" width="7.5" height="2" fill="#9cdcfe" fill-opacity="0.42"/>
<rect x="78.0" y="37.4" width="1.5" height="2" fill="#d4d4d4" fill-opacity="0.42"/>
<rect x="80.0" y="37.4" width="19.5" height="2" fill="#9cdcfe" fill-opacity="0.42"/>
<rect x="100.0" y="37.4" width="1.5" height="2" fill="#d4d4d4" fill-opacity="0.42"/>
<rect x="102.0" y="37.4" width="23.5" height="2" fill="#4ec9b0" fill-opacity="0.42"/>
<rect x="126.0" y="37.4" width="1.5" height="2" fill="#d4d4d4" fill-opacity="0.42"/>
<rect x="8.0" y="41.4" width="11.5" height="2" fill="#c586c0" fill-opacity="0.42"/>
<rect x="22.0" y="41.4" width="5.5" height="2" fill="#9cdcfe" fill-opacity="0.42"/>
<rect x="28.0" y="41.4" width="1.5" height="2" fill="#d4d4d4" fill-opacity="0.42"/>
<rect x="30.0" y="41.4" width="11.5" height="2" fill="#9cdcfe" fill-opacity="0.42"/>
<rect x="42.0" y="41.4" width="1.5" height="2" fill="#d4d4d4" fill-opacity="0.42"/>
<rect x="44.0" y="41.4" width="11.5" height="2" fill="#9cdcfe" fill-opacity="0.42"/>
<rect x="56.0" y="41.4" width="1.5" height="2" fill="#d4d4d4" fill-opacity="0.42"/>
<rect x="58.0" y="41.4" width="9.5" height="2" fill="#9cdcfe" fill-opacity="0.42"/>
<rect x="68.0" y="41.4" width="1.5" height="2" fill="#d4d4d4" fill-opacity="0.42"/>
<rect x="70.0" y="41.4" width="1.5" height="2" fill="#4ec9b0" fill-opacity="0.42"/>
<rect x="72.0" y="41.4" width="1.5" height="2" fill="#d4d4d4" fill-opacity="0.42"/>
<rect x="8.0" y="49.4" width="11.5" height="2" fill="#c586c0" fill-opacity="0.42"/>
<rect x="22.0" y="49.4" width="7.5" height="2" fill="#9cdcfe" fill-opacity="0.42"/>
<rect x="30.0" y="49.4" width="1.5" height="2" fill="#d4d4d4" fill-opacity="0.42"/>
<rect x="32.0" y="49.4" width="3.5" height="2" fill="#9cdcfe" fill-opacity="0.42"/>
<rect x="36.0" y="49.4" width="1.5" height="2" fill="#d4d4d4" fill-opacity="0.42"/>
<rect x="38.0" y="49.4" width="27.5" height="2" fill="#4ec9b0" fill-opacity="0.42"/>
<rect x="66.0" y="49.4" width="1.5" height="2" fill="#d4d4d4" fill-opacity="0.42"/>
<rect x="8.0" y="53.4" width="11.5" height="2" fill="#c586c0" fill-opacity="0.42"/>
<rect x="22.0" y="53.4" width="7.5" height="2" fill="#9cdcfe" fill-opacity="0.42"/>
<rect x="30.0" y="53.4" width="1.5" height="2" fill="#d4d4d4" fill-opacity="0.42"/>
<rect x="32.0" y="53.4" width="3.5" height="2" fill="#9cdcfe" fill-opacity="0.42"/>
<rect x="36.0" y="53.4" width="1.5" height="2" fill="#d4d4d4" fill-opacity="0.42"/>
<rect x="38.0" y="53.4" width="21.5" height="2" fill="#4ec9b0" fill-opacity="0.42"/>
<rect x="60.0" y="53.4" width="1.5" height="2" fill="#d4d4d4" fill-opacity="0.42"/>
<rect x="8.0" y="57.4" width="11.5" height="2" fill="#c586c0" fill-opacity="0.42"/>
<rect x="22.0" y="57.4" width="7.5" height="2" fill="#9cdcfe" fill-opacity="0.42"/>
<rect x="30.0" y="57.4" width="1.5" height="2" fill="#d4d4d4" fill-opacity="0.42"/>
<rect x="32.0" y="57.4" width="3.5" height="2" fill="#9cdcfe" fill-opacity="0.42"/>
<rect x="36.0" y="57.4" width="1.5" height="2" fill="#d4d4d4" fill-opacity="0.42"/>
<rect x="38.0" y="57.4" width="21.5" height="2" fill="#4ec9b0" fill-opacity="0.42"/>
<rect x="60.0" y="57.4" width="1.5" height="2" fill="#d4d4d4" fill-opacity="0.42"/>
<rect x="8.0" y="61.4" width="11.5" height="2" fill="#c586c0" fill-opacity="0.42"/>
<rect x="22.0" y="61.4" width="7.5" height="2" fill="#9cdcfe" fill-opacity="0.42"/>
<rect x="30.0" y="61.4" width="1.5" height="2" fill="#d4d4d4" fill-opacity="0.42"/>
<rect x="32.0" y="61.4" width="3.5" height="2" fill="#9cdcfe" fill-opacity="0.42"/>
<rect x="36.0" y="61.4" width="1.5" height="2" fill="#d4d4d4" fill-opacity="0.42"/>
<rect x="38.0" y="61.4" width="33.5" height="2" fill="#4ec9b0" fill-opacity="0.42"/>
<rect x="72.0" y="61.4" width="1.5" height="2" fill="#d4d4d4" fill-opacity="0.42"/>
<rect x="8.0" y="65.4" width="11.5" height="2" fill="#c586c0" fill-opacity="0.42"/>
<rect x="22.0" y="65.4" width="7.5" height="2" fill="#9cdcfe" fill-opacity="0.42"/>
<rect x="30.0" y="65.4" width="1.5" height="2" fill="#d4d4d4" fill-opacity="0.42"/>
<rect x="32.0" y="65.4" width="7.5" height="2" fill="#9cdcfe" fill-opacity="0.42"/>
<rect x="40.0" y="65.4" width="1.5" height="2" fill="#d4d4d4" fill-opacity="0.42"/>
<rect x="42.0" y="65.4" width="13.5" height="2" fill="#9cdcfe" fill-opacity="0.42"/>
<rect x="56.0" y="65.4" width="1.5" height="2" fill="#d4d4d4" fill-opacity="0.42"/>
<rect x="58.0" y="65.4" width="11.5" height="2" fill="#4ec9b0" fill-opacity="0.42"/>
<rect x="70.0" y="65.4" width="1.5" height="2" fill="#d4d4d4" fill-opacity="0.42"/>
<rect x="8.0" y="69.4" width="11.5" height="2" fill="#c586c0" fill-opacity="0.42"/>
<rect x="22.0" y="69.4" width="7.5" height="2" fill="#9cdcfe" fill-opacity="0.42"/>
<rect x="30.0" y="69.4" width="1.5" height="2" fill="#d4d4d4" fill-opacity="0.42"/>
<rect x="32.0" y="69.4" width="7.5" height="2" fill="#9cdcfe" fill-opacity="0.42"/>
<rect x="40.0" y="69.4" width="1.5" height="2" fill="#d4d4d4" fill-opacity="0.42"/>
<rect x="42.0" y="69.4" width="11.5" height="2" fill="#4ec9b0" fill-opacity="0.42"/>
<rect x="54.0" y="69.4" width="1.5" height="2" fill="#d4d4d4" fill-opacity="0.42"/>
<rect x="8.0" y="73.4" width="11.5" height="2" fill="#c586c0" fill-opacity="0.42"/>
<rect x="22.0" y="73.4" width="7.5" height="2" fill="#9cdcfe" fill-opacity="0.42"/>
<rect x="30.0" y="73.4" width="1.5" height="2" fill="#d4d4d4" fill-opacity="0.42"/>
<rect x="32.0" y="73.4" width="7.5" height="2" fill="#9cdcfe" fill-opacity="0.42"/>
<rect x="40.0" y="73.4" width="1.5" height="2" fill="#d4d4d4" fill-opacity="0.42"/>
<rect x="42.0" y="73.4" width="7.5" height="2" fill="#4ec9b0" fill-opacity="0.42"/>
<rect x="50.0" y="73.4" width="1.5" height="2" fill="#d4d4d4" fill-opacity="0.42"/>
<rect x="8.0" y="77.4" width="11.5" height="2" fill="#c586c0" fill-opacity="0.42"/>
<rect x="22.0" y="77.4" width="7.5" height="2" fill="#9cdcfe" fill-opacity="0.42"/>
<rect x="30.0" y="77.4" width="1.5" height="2" fill="#d4d4d4" fill-opacity="0.42"/>
<rect x="32.0" y="77.4" width="7.5" height="2" fill="#9cdcfe" fill-opacity="0.42"/>
<rect x="40.0" y="77.4" width="1.5" height="2" fill="#d4d4d4" fill-opacity="0.42"/>
<rect x="42.0" y="77.4" width="5.5" height="2" fill="#4ec9b0" fill-opacity="0.42"/>
<rect x="48.0" y="77.4" width="1.5" height="2" fill="#d4d4d4" fill-opacity="0.42"/>
<rect x="8.0" y="85.4" width="5.5" height="2" fill="#6a9955" fill-opacity="0.42"/>
<rect x="10.0" y="89.4" width="49.5" height="2" fill="#6a9955" fill-opacity="0.42"/>
<rect x="10.0" y="93.4" width="33.5" height="2" fill="#6a9955" fill-opacity="0.42"/>
<rect x="10.0" y="97.4" width="55.5" height="2" fill="#6a9955" fill-opacity="0.42"/>
<rect x="10.0" y="101.4" width="47.5" height="2" fill="#6a9955" fill-opacity="0.42"/>
<rect x="10.0" y="105.4" width="3.5" height="2" fill="#6a9955" fill-opacity="0.42"/>
<rect x="8.0" y="109.4" width="11.5" height="2" fill="#4ec9b0" fill-opacity="0.42"/>
<rect x="8.0" y="113.4" width="7.5" height="2" fill="#4ec9b0" fill-opacity="0.42"/>
<rect x="16.0" y="113.4" width="1.5" height="2" fill="#d4d4d4" fill-opacity="0.42"/>
<rect x="18.0" y="113.4" width="9.5" height="2" fill="#9cdcfe" fill-opacity="0.42"/>
<rect x="30.0" y="113.4" width="1.5" height="2" fill="#d4d4d4" fill-opacity="0.42"/>
<rect x="34.0" y="113.4" width="37.5" height="2" fill="#ce9178" fill-opacity="0.42"/>
<rect x="72.0" y="113.4" width="1.5" height="2" fill="#d4d4d4" fill-opacity="0.42"/>
<rect x="76.0" y="113.4" width="7.5" height="2" fill="#9cdcfe" fill-opacity="0.42"/>
<rect x="86.0" y="113.4" width="1.5" height="2" fill="#d4d4d4" fill-opacity="0.42"/>
<rect x="90.0" y="113.4" width="23.5" height="2" fill="#ce9178" fill-opacity="0.42"/>
<rect x="114.0" y="113.4" width="1.5" height="2" fill="#d4d4d4" fill-opacity="0.42"/>
<rect x="8.0" y="117.4" width="21.5" height="2" fill="#4ec9b0" fill-opacity="0.42"/>
<rect x="8.0" y="121.4" width="23.5" height="2" fill="#4ec9b0" fill-opacity="0.42"/>
<rect x="32.0" y="121.4" width="1.5" height="2" fill="#d4d4d4" fill-opacity="0.42"/>
<rect x="34.0" y="121.4" width="13.5" height="2" fill="#9cdcfe" fill-opacity="0.42"/>
<rect x="50.0" y="121.4" width="1.5" height="2" fill="#d4d4d4" fill-opacity="0.42"/>
<rect x="54.0" y="121.4" width="5.5" height="2" fill="#ce9178" fill-opacity="0.42"/>
<rect x="60.0" y="121.4" width="1.5" height="2" fill="#d4d4d4" fill-opacity="0.42"/>
<rect x="8.0" y="125.4" width="29.5" height="2" fill="#4ec9b0" fill-opacity="0.42"/>
<rect x="38.0" y="125.4" width="5.5" height="2" fill="#d4d4d4" fill-opacity="0.42"/>
<rect x="44.0" y="125.4" width="13.5" height="2" fill="#9cdcfe" fill-opacity="0.42"/>
<rect x="58.0" y="125.4" width="3.5" height="2" fill="#ce9178" fill-opacity="0.42"/>
<rect x="8.0" y="129.4" width="11.5" height="2" fill="#569cd6" fill-opacity="0.42"/>
<rect x="22.0" y="129.4" width="9.5" height="2" fill="#569cd6" fill-opacity="0.42"/>
<rect x="34.0" y="129.4" width="33.5" height="2" fill="#4ec9b0" fill-opacity="0.42"/>
<rect x="70.0" y="129.4" width="1.5" height="2" fill="#d4d4d4" fill-opacity="0.42"/>
<rect x="16.0" y="133.4" width="29.5" height="2" fill="#4ec9b0" fill-opacity="0.42"/>
<rect x="46.0" y="133.4" width="7.5" height="2" fill="#d4d4d4" fill-opacity="0.42"/>
<rect x="16.0" y="137.4" width="11.5" height="2" fill="#569cd6" fill-opacity="0.42"/>
<rect x="30.0" y="137.4" width="11.5" height="2" fill="#4ec9b0" fill-opacity="0.42"/>
<rect x="44.0" y="137.4" width="7.5" height="2" fill="#dcdcaa" fill-opacity="0.42"/>
<rect x="52.0" y="137.4" width="3.5" height="2" fill="#d4d4d4" fill-opacity="0.42"/>
<rect x="58.0" y="137.4" width="1.5" height="2" fill="#d4d4d4" fill-opacity="0.42"/>
<rect x="24.0" y="141.4" width="11.5" height="2" fill="#c586c0" fill-opacity="0.42"/>
<rect x="38.0" y="141.4" width="33.5" height="2" fill="#ce9178" fill-opacity="0.42"/>
<rect x="72.0" y="141.4" width="1.5" height="2" fill="#d4d4d4" fill-opacity="0.42"/>
<rect x="16.0" y="145.4" width="1.5" height="2" fill="#d4d4d4" fill-opacity="0.42"/>
<rect x="16.0" y="153.4" width="29.5" height="2" fill="#4ec9b0" fill-opacity="0.42"/>
<rect x="46.0" y="153.4" width="5.5" height="2" fill="#d4d4d4" fill-opacity="0.42"/>
<rect x="52.0" y="153.4" width="7.5" height="2" fill="#9cdcfe" fill-opacity="0.42"/>
<rect x="60.0" y="153.4" width="3.5" height="2" fill="#ce9178" fill-opacity="0.42"/>
<rect x="16.0" y="157.4" width="25.5" height="2" fill="#4ec9b0" fill-opacity="0.42"/>
<rect x="16.0" y="161.4" width="11.5" height="2" fill="#569cd6" fill-opacity="0.42"/>
<rect x="30.0" y="161.4" width="1.5" height="2" fill="#4ec9b0" fill-opacity="0.42"/>
<rect x="34.0" y="161.4" width="7.5" height="2" fill="#dcdcaa" fill-opacity="0.42"/>
<rect x="42.0" y="161.4" width="3.5" height="2" fill="#d4d4d4" fill-opacity="0.42"/>
<rect x="46.0" y="161.4" width="23.5" height="2" fill="#4ec9b0" fill-opacity="0.42"/>
<rect x="70.0" y="161.4" width="3.5" height="2" fill="#d4d4d4" fill-opacity="0.42"/>
<rect x="74.0" y="161.4" width="13.5" height="2" fill="#9cdcfe" fill-opacity="0.42"/>
<rect x="88.0" y="161.4" width="3.5" height="2" fill="#ce9178" fill-opacity="0.42"/>
<rect x="94.0" y="161.4" width="11.5" height="2" fill="#4ec9b0" fill-opacity="0.42"/>
<rect x="108.0" y="161.4" width="13.5" height="2" fill="#9cdcfe" fill-opacity="0.42"/>
<rect x="122.0" y="161.4" width="1.5" height="2" fill="#d4d4d4" fill-opacity="0.42"/>
<rect x="126.0" y="161.4" width="11.5" height="2" fill="#569cd6" fill-opacity="0.42"/>
<rect x="140.0" y="161.4" width="21.5" height="2" fill="#4ec9b0" fill-opacity="0.42"/>
<rect x="164.0" y="161.4" width="1.5" height="2" fill="#d4d4d4" fill-opacity="0.42"/>
<rect x="24.0" y="165.4" width="11.5" height="2" fill="#4ec9b0" fill-opacity="0.42"/>
<rect x="36.0" y="165.4" width="3.5" height="2" fill="#d4d4d4" fill-opacity="0.42"/>
<rect x="42.0" y="165.4" width="13.5" height="2" fill="#9cdcfe" fill-opacity="0.42"/>
<rect x="58.0" y="165.4" width="1.5" height="2" fill="#d4d4d4" fill-opacity="0.42"/>
<rect x="62.0" y="165.4" width="3.5" height="2" fill="#d4d4d4" fill-opacity="0.42"/>
<rect x="66.0" y="165.4" width="3.5" height="2" fill="#9cdcfe" fill-opacity="0.42"/>
<rect x="70.0" y="165.4" width="7.5" height="2" fill="#ce9178" fill-opacity="0.42"/>
<rect x="78.0" y="165.4" width="1.5" height="2" fill="#d4d4d4" fill-opacity="0.42"/>
<rect x="80.0" y="165.4" width="1.5" height="2" fill="#9cdcfe" fill-opacity="0.42"/>
<rect x="82.0" y="165.4" width="3.5" height="2" fill="#ce9178" fill-opacity="0.42"/>
<rect x="88.0" y="165.4" width="13.5" height="2" fill="#9cdcfe" fill-opacity="0.42"/>
<rect x="102.0" y="165.4" width="3.5" height="2" fill="#d4d4d4" fill-opacity="0.42"/>
<rect x="24.0" y="173.4" width="27.5" height="2" fill="#4ec9b0" fill-opacity="0.42"/>
<rect x="54.0" y="173.4" width="3.5" height="2" fill="#9cdcfe" fill-opacity="0.42"/>
<rect x="60.0" y="173.4" width="1.5" height="2" fill="#d4d4d4" fill-opacity="0.42"/>
<rect x="64.0" y="173.4" width="5.5" height="2" fill="#c586c0" fill-opacity="0.42"/>
<rect x="72.0" y="173.4" width="27.5" height="2" fill="#4ec9b0" fill-opacity="0.42"/>
<rect x="100.0" y="173.4" width="1.5" height="2" fill="#d4d4d4" fill-opacity="0.42"/>
<rect x="102.0" y="173.4" width="13.5" height="2" fill="#9cdcfe" fill-opacity="0.42"/>
<rect x="116.0" y="173.4" width="3.5" height="2" fill="#d4d4d4" fill-opacity="0.42"/>
<rect x="24.0" y="177.4" width="3.5" height="2" fill="#9cdcfe" fill-opacity="0.42"/>
<rect x="28.0" y="177.4" width="1.5" height="2" fill="#d4d4d4" fill-opacity="0.42"/>
<rect x="30.0" y="177.4" width="37.5" height="2" fill="#dcdcaa" fill-opacity="0.42"/>
<rect x="68.0" y="177.4" width="1.5" height="2" fill="#d4d4d4" fill-opacity="0.42"/>
<rect x="70.0" y="177.4" width="7.5" height="2" fill="#569cd6" fill-opacity="0.42"/>
<rect x="78.0" y="177.4" width="3.5" height="2" fill="#d4d4d4" fill-opacity="0.42"/>
<rect x="24.0" y="185.4" width="13.5" height="2" fill="#4ec9b0" fill-opacity="0.42"/>
<rect x="40.0" y="185.4" width="13.5" height="2" fill="#9cdcfe" fill-opacity="0.42"/>
<rect x="56.0" y="185.4" width="1.5" height="2" fill="#d4d4d4" fill-opacity="0.42"/>
<rect x="60.0" y="185.4" width="3.5" height="2" fill="#9cdcfe" fill-opacity="0.42"/>
<rect x="64.0" y="185.4" width="1.5" height="2" fill="#d4d4d4" fill-opacity="0.42"/>
<rect x="66.0" y="185.4" width="9.5" height="2" fill="#dcdcaa" fill-opacity="0.42"/>
<rect x="76.0" y="185.4" width="5.5" height="2" fill="#d4d4d4" fill-opacity="0.42"/>
<rect x="24.0" y="189.4" width="21.5" height="2" fill="#4ec9b0" fill-opacity="0.42"/>
<rect x="48.0" y="189.4" width="21.5" height="2" fill="#9cdcfe" fill-opacity="0.42"/>
<rect x="72.0" y="189.4" width="1.5" height="2" fill="#d4d4d4" fill-opacity="0.42"/>
<rect x="76.0" y="189.4" width="13.5" height="2" fill="#9cdcfe" fill-opacity="0.42"/>
<rect x="90.0" y="189.4" width="1.5" height="2" fill="#d4d4d4" fill-opacity="0.42"/>
<rect x="92.0" y="189.4" width="27.5" height="2" fill="#dcdcaa" fill-opacity="0.42"/>
<rect x="120.0" y="189.4" width="5.5" height="2" fill="#d4d4d4" fill-opacity="0.42"/>
<rect x="24.0" y="193.4" width="27.5" height="2" fill="#4ec9b0" fill-opacity="0.42"/>
<rect x="54.0" y="193.4" width="11.5" height="2" fill="#9cdcfe" fill-opacity="0.42"/>
<rect x="68.0" y="193.4" width="1.5" height="2" fill="#d4d4d4" fill-opacity="0.42"/>
<rect x="72.0" y="193.4" width="5.5" height="2" fill="#c586c0" fill-opacity="0.42"/>
<rect x="80.0" y="193.4" width="27.5" height="2" fill="#4ec9b0" fill-opacity="0.42"/>
<rect x="108.0" y="193.4" width="1.5" height="2" fill="#d4d4d4" fill-opacity="0.42"/>
<rect x="110.0" y="193.4" width="5.5" height="2" fill="#c586c0" fill-opacity="0.42"/>
<rect x="118.0" y="193.4" width="33.5" height="2" fill="#4ec9b0" fill-opacity="0.42"/>
<rect x="152.0" y="193.4" width="1.5" height="2" fill="#d4d4d4" fill-opacity="0.42"/>
<rect x="154.0" y="193.4" width="21.5" height="2" fill="#9cdcfe" fill-opacity="0.42"/>
<rect x="176.0" y="193.4" width="5.5" height="2" fill="#d4d4d4" fill-opacity="0.42"/>
<rect x="24.0" y="197.4" width="11.5" height="2" fill="#4ec9b0" fill-opacity="0.42"/>
<rect x="38.0" y="197.4" width="7.5" height="2" fill="#9cdcfe" fill-opacity="0.42"/>
<rect x="46.0" y="197.4" width="1.5" height="2" fill="#d4d4d4" fill-opacity="0.42"/>
<rect x="24.0" y="201.4" width="25.5" height="2" fill="#4ec9b0" fill-opacity="0.42"/>
<rect x="52.0" y="201.4" width="11.5" height="2" fill="#9cdcfe" fill-opacity="0.42"/>
<rect x="66.0" y="201.4" width="1.5" height="2" fill="#d4d4d4" fill-opacity="0.42"/>
<rect x="70.0" y="201.4" width="5.5" height="2" fill="#c586c0" fill-opacity="0.42"/>
<rect x="78.0" y="201.4" width="25.5" height="2" fill="#4ec9b0" fill-opacity="0.42"/>
<rect x="104.0" y="201.4" width="5.5" height="2" fill="#d4d4d4" fill-opacity="0.42"/>
<rect x="24.0" y="205.4" width="9.5" height="2" fill="#c586c0" fill-opacity="0.42"/>
<rect x="36.0" y="205.4" width="3.5" height="2" fill="#d4d4d4" fill-opacity="0.42"/>
<rect x="40.0" y="205.4" width="7.5" height="2" fill="#9cdcfe" fill-opacity="0.42"/>
<rect x="50.0" y="205.4" width="1.5" height="2" fill="#d4d4d4" fill-opacity="0.42"/>
<rect x="54.0" y="205.4" width="11.5" height="2" fill="#9cdcfe" fill-opacity="0.42"/>
<rect x="66.0" y="205.4" width="1.5" height="2" fill="#d4d4d4" fill-opacity="0.42"/>
<rect x="68.0" y="205.4" width="15.5" height="2" fill="#dcdcaa" fill-opacity="0.42"/>
<rect x="84.0" y="205.4" width="5.5" height="2" fill="#d4d4d4" fill-opacity="0.42"/>
<rect x="92.0" y="205.4" width="3.5" height="2" fill="#d4d4d4" fill-opacity="0.42"/>
<rect x="98.0" y="205.4" width="7.5" height="2" fill="#569cd6" fill-opacity="0.42"/>
<rect x="106.0" y="205.4" width="1.5" height="2" fill="#d4d4d4" fill-opacity="0.42"/>
<rect x="110.0" y="205.4" width="1.5" height="2" fill="#d4d4d4" fill-opacity="0.42"/>
<rect x="32.0" y="209.4" width="11.5" height="2" fill="#9cdcfe" fill-opacity="0.42"/>
<rect x="44.0" y="209.4" width="1.5" height="2" fill="#d4d4d4" fill-opacity="0.42"/>
<rect x="46.0" y="209.4" width="11.5" height="2" fill="#dcdcaa" fill-opacity="0.42"/>
<rect x="58.0" y="209.4" width="1.5" height="2" fill="#d4d4d4" fill-opacity="0.42"/>
<rect x="60.0" y="209.4" width="7.5" height="2" fill="#9cdcfe" fill-opacity="0.42"/>
<rect x="68.0" y="209.4" width="3.5" height="2" fill="#d4d4d4" fill-opacity="0.42"/>
<rect x="72.0" y="209.4" width="11.5" height="2" fill="#dcdcaa" fill-opacity="0.42"/>
<rect x="84.0" y="209.4" width="5.5" height="2" fill="#d4d4d4" fill-opacity="0.42"/>
<rect x="90.0" y="209.4" width="1.5" height="2" fill="#9cdcfe" fill-opacity="0.42"/>
<rect x="92.0" y="209.4" width="5.5" height="2" fill="#ce9178" fill-opacity="0.42"/>
<rect x="24.0" y="213.4" width="1.5" height="2" fill="#d4d4d4" fill-opacity="0.42"/>
<rect x="24.0" y="217.4" width="11.5" height="2" fill="#c586c0" fill-opacity="0.42"/>
<rect x="38.0" y="217.4" width="1.5" height="2" fill="#4ec9b0" fill-opacity="0.42"/>
<rect x="40.0" y="217.4" width="1.5" height="2" fill="#d4d4d4" fill-opacity="0.42"/>
<rect x="42.0" y="217.4" width="3.5" height="2" fill="#dcdcaa" fill-opacity="0.42"/>
<rect x="46.0" y="217.4" width="1.5" height="2" fill="#d4d4d4" fill-opacity="0.42"/>
<rect x="48.0" y="217.4" width="11.5" height="2" fill="#9cdcfe" fill-opacity="0.42"/>
<rect x="60.0" y="217.4" width="1.5" height="2" fill="#d4d4d4" fill-opacity="0.42"/>
<rect x="62.0" y="217.4" width="15.5" height="2" fill="#dcdcaa" fill-opacity="0.42"/>
<rect x="78.0" y="217.4" width="7.5" height="2" fill="#d4d4d4" fill-opacity="0.42"/>
<rect x="16.0" y="221.4" width="1.5" height="2" fill="#d4d4d4" fill-opacity="0.42"/>
<rect x="16.0" y="229.4" width="29.5" height="2" fill="#4ec9b0" fill-opacity="0.42"/>
<rect x="46.0" y="229.4" width="5.5" height="2" fill="#d4d4d4" fill-opacity="0.42"/>
<rect x="52.0" y="229.4" width="7.5" height="2" fill="#9cdcfe" fill-opacity="0.42"/>
<rect x="60.0" y="229.4" width="3.5" height="2" fill="#ce9178" fill-opacity="0.42"/>
<rect x="16.0" y="233.4" width="25.5" height="2" fill="#4ec9b0" fill-opacity="0.42"/>
<rect x="16.0" y="237.4" width="11.5" height="2" fill="#569cd6" fill-opacity="0.42"/>
<rect x="30.0" y="237.4" width="1.5" height="2" fill="#4ec9b0" fill-opacity="0.42"/>
<rect x="34.0" y="237.4" width="7.5" height="2" fill="#dcdcaa" fill-opacity="0.42"/>
<rect x="42.0" y="237.4" width="1.5" height="2" fill="#d4d4d4" fill-opacity="0.42"/>
<rect x="44.0" y="237.4" width="11.5" height="2" fill="#4ec9b0" fill-opacity="0.42"/>
<rect x="58.0" y="237.4" width="13.5" height="2" fill="#9cdcfe" fill-opacity="0.42"/>
<rect x="72.0" y="237.4" width="1.5" height="2" fill="#d4d4d4" fill-opacity="0.42"/>
<rect x="76.0" y="237.4" width="11.5" height="2" fill="#569cd6" fill-opacity="0.42"/>
<rect x="90.0" y="237.4" width="21.5" height="2" fill="#4ec9b0" fill-opacity="0.42"/>
<rect x="114.0" y="237.4" width="1.5" height="2" fill="#d4d4d4" fill-opacity="0.42"/>
<rect x="24.0" y="241.4" width="25.5" height="2" fill="#4ec9b0" fill-opacity="0.42"/>
<rect x="52.0" y="241.4" width="3.5" height="2" fill="#9cdcfe" fill-opacity="0.42"/>
<rect x="58.0" y="241.4" width="1.5" height="2" fill="#d4d4d4" fill-opacity="0.42"/>
<rect x="62.0" y="241.4" width="5.5" height="2" fill="#c586c0" fill-opacity="0.42"/>
<rect x="70.0" y="241.4" width="25.5" height="2" fill="#4ec9b0" fill-opacity="0.42"/>
<rect x="96.0" y="241.4" width="5.5" height="2" fill="#d4d4d4" fill-opacity="0.42"/>
<rect x="24.0" y="245.4" width="11.5" height="2" fill="#4ec9b0" fill-opacity="0.42"/>
<rect x="38.0" y="245.4" width="7.5" height="2" fill="#9cdcfe" fill-opacity="0.42"/>
<rect x="46.0" y="245.4" width="1.5" height="2" fill="#d4d4d4" fill-opacity="0.42"/>
<rect x="24.0" y="249.4" width="13.5" height="2" fill="#4ec9b0" fill-opacity="0.42"/>
<rect x="40.0" y="249.4" width="7.5" height="2" fill="#9cdcfe" fill-opacity="0.42"/>
<rect x="50.0" y="249.4" width="1.5" height="2" fill="#d4d4d4" fill-opacity="0.42"/>
<rect x="54.0" y="249.4" width="13.5" height="2" fill="#4ec9b0" fill-opacity="0.42"/>
<rect x="68.0" y="249.4" width="1.5" height="2" fill="#d4d4d4" fill-opacity="0.42"/>
<rect x="70.0" y="249.4" width="19.5" height="2" fill="#dcdcaa" fill-opacity="0.42"/>
<rect x="90.0" y="249.4" width="5.5" height="2" fill="#d4d4d4" fill-opacity="0.42"/>
<rect x="96.0" y="249.4" width="7.5" height="2" fill="#dcdcaa" fill-opacity="0.42"/>
<rect x="104.0" y="249.4" width="1.5" height="2" fill="#d4d4d4" fill-opacity="0.42"/>
<rect x="106.0" y="249.4" width="13.5" height="2" fill="#9cdcfe" fill-opacity="0.42"/>
<rect x="120.0" y="249.4" width="3.5" height="2" fill="#d4d4d4" fill-opacity="0.42"/>
<rect x="24.0" y="253.4" width="21.5" height="2" fill="#4ec9b0" fill-opacity="0.42"/>
<rect x="48.0" y="253.4" width="21.5" height="2" fill="#9cdcfe" fill-opacity="0.42"/>
<rect x="72.0" y="253.4" width="1.5" height="2" fill="#d4d4d4" fill-opacity="0.42"/>
<rect x="76.0" y="253.4" width="7.5" height="2" fill="#9cdcfe" fill-opacity="0.42"/>
<rect x="84.0" y="253.4" width="1.5" height="2" fill="#d4d4d4" fill-opacity="0.42"/>
<rect x="86.0" y="253.4" width="27.5" height="2" fill="#dcdcaa" fill-opacity="0.42"/>
<rect x="114.0" y="253.4" width="5.5" height="2" fill="#d4d4d4" fill-opacity="0.42"/>
<rect x="24.0" y="257.4" width="33.5" height="2" fill="#4ec9b0" fill-opacity="0.42"/>
<rect x="60.0" y="257.4" width="5.5" height="2" fill="#9cdcfe" fill-opacity="0.42"/>
<rect x="68.0" y="257.4" width="1.5" height="2" fill="#d4d4d4" fill-opacity="0.42"/>
<rect x="72.0" y="257.4" width="5.5" height="2" fill="#c586c0" fill-opacity="0.42"/>
<rect x="80.0" y="257.4" width="33.5" height="2" fill="#4ec9b0" fill-opacity="0.42"/>
<rect x="114.0" y="257.4" width="1.5" height="2" fill="#d4d4d4" fill-opacity="0.42"/>
<rect x="116.0" y="257.4" width="21.5" height="2" fill="#9cdcfe" fill-opacity="0.42"/>
<rect x="138.0" y="257.4" width="3.5" height="2" fill="#d4d4d4" fill-opacity="0.42"/>
<rect x="24.0" y="261.4" width="27.5" height="2" fill="#4ec9b0" fill-opacity="0.42"/>
<rect x="54.0" y="261.4" width="3.5" height="2" fill="#9cdcfe" fill-opacity="0.42"/>
<rect x="60.0" y="261.4" width="1.5" height="2" fill="#d4d4d4" fill-opacity="0.42"/>
<rect x="64.0" y="261.4" width="5.5" height="2" fill="#c586c0" fill-opacity="0.42"/>
<rect x="72.0" y="261.4" width="27.5" height="2" fill="#4ec9b0" fill-opacity="0.42"/>
<rect x="100.0" y="261.4" width="1.5" height="2" fill="#d4d4d4" fill-opacity="0.42"/>
<rect x="102.0" y="261.4" width="5.5" height="2" fill="#9cdcfe" fill-opacity="0.42"/>
<rect x="108.0" y="261.4" width="3.5" height="2" fill="#d4d4d4" fill-opacity="0.42"/>
<rect x="24.0" y="265.4" width="9.5" height="2" fill="#c586c0" fill-opacity="0.42"/>
<rect x="36.0" y="265.4" width="3.5" height="2" fill="#d4d4d4" fill-opacity="0.42"/>
<rect x="40.0" y="265.4" width="7.5" height="2" fill="#9cdcfe" fill-opacity="0.42"/>
<rect x="50.0" y="265.4" width="1.5" height="2" fill="#d4d4d4" fill-opacity="0.42"/>
<rect x="54.0" y="265.4" width="3.5" height="2" fill="#9cdcfe" fill-opacity="0.42"/>
<rect x="58.0" y="265.4" width="1.5" height="2" fill="#d4d4d4" fill-opacity="0.42"/>
<rect x="60.0" y="265.4" width="15.5" height="2" fill="#dcdcaa" fill-opacity="0.42"/>
<rect x="76.0" y="265.4" width="5.5" height="2" fill="#d4d4d4" fill-opacity="0.42"/>
<rect x="84.0" y="265.4" width="3.5" height="2" fill="#d4d4d4" fill-opacity="0.42"/>
<rect x="90.0" y="265.4" width="7.5" height="2" fill="#569cd6" fill-opacity="0.42"/>
<rect x="98.0" y="265.4" width="1.5" height="2" fill="#d4d4d4" fill-opacity="0.42"/>
<rect x="102.0" y="265.4" width="1.5" height="2" fill="#d4d4d4" fill-opacity="0.42"/>
<rect x="32.0" y="269.4" width="3.5" height="2" fill="#9cdcfe" fill-opacity="0.42"/>
<rect x="36.0" y="269.4" width="1.5" height="2" fill="#d4d4d4" fill-opacity="0.42"/>
<rect x="38.0" y="269.4" width="11.5" height="2" fill="#dcdcaa" fill-opacity="0.42"/>
<rect x="50.0" y="269.4" width="1.5" height="2" fill="#d4d4d4" fill-opacity="0.42"/>
<rect x="52.0" y="269.4" width="7.5" height="2" fill="#9cdcfe" fill-opacity="0.42"/>
<rect x="60.0" y="269.4" width="3.5" height="2" fill="#d4d4d4" fill-opacity="0.42"/>
<rect x="24.0" y="273.4" width="1.5" height="2" fill="#d4d4d4" fill-opacity="0.42"/>
<rect x="24.0" y="277.4" width="11.5" height="2" fill="#c586c0" fill-opacity="0.42"/>
<rect x="38.0" y="277.4" width="1.5" height="2" fill="#4ec9b0" fill-opacity="0.42"/>
<rect x="40.0" y="277.4" width="1.5" height="2" fill="#d4d4d4" fill-opacity="0.42"/>
<rect x="42.0" y="277.4" width="3.5" height="2" fill="#dcdcaa" fill-opacity="0.42"/>
<rect x="46.0" y="277.4" width="1.5" height="2" fill="#d4d4d4" fill-opacity="0.42"/>
<rect x="48.0" y="277.4" width="3.5" height="2" fill="#9cdcfe" fill-opacity="0.42"/>
<rect x="52.0" y="277.4" width="1.5" height="2" fill="#d4d4d4" fill-opacity="0.42"/>
<rect x="54.0" y="277.4" width="15.5" height="2" fill="#dcdcaa" fill-opacity="0.42"/>
<rect x="70.0" y="277.4" width="7.5" height="2" fill="#d4d4d4" fill-opacity="0.42"/>
<rect x="16.0" y="281.4" width="1.5" height="2" fill="#d4d4d4" fill-opacity="0.42"/>
<rect x="16.0" y="289.4" width="29.5" height="2" fill="#4ec9b0" fill-opacity="0.42"/>
<rect x="46.0" y="289.4" width="5.5" height="2" fill="#d4d4d4" fill-opacity="0.42"/>
<rect x="52.0" y="289.4" width="7.5" height="2" fill="#9cdcfe" fill-opacity="0.42"/>
<rect x="60.0" y="289.4" width="3.5" height="2" fill="#ce9178" fill-opacity="0.42"/>
<rect x="16.0" y="293.4" width="25.5" height="2" fill="#4ec9b0" fill-opacity="0.42"/>
<rect x="16.0" y="297.4" width="11.5" height="2" fill="#569cd6" fill-opacity="0.42"/>
<rect x="30.0" y="297.4" width="1.5" height="2" fill="#4ec9b0" fill-opacity="0.42"/>
<rect x="34.0" y="297.4" width="7.5" height="2" fill="#dcdcaa" fill-opacity="0.42"/>
<rect x="42.0" y="297.4" width="1.5" height="2" fill="#d4d4d4" fill-opacity="0.42"/>
<rect x="44.0" y="297.4" width="11.5" height="2" fill="#4ec9b0" fill-opacity="0.42"/>
<rect x="58.0" y="297.4" width="13.5" height="2" fill="#9cdcfe" fill-opacity="0.42"/>
<rect x="72.0" y="297.4" width="1.5" height="2" fill="#d4d4d4" fill-opacity="0.42"/>
<rect x="76.0" y="297.4" width="11.5" height="2" fill="#569cd6" fill-opacity="0.42"/>
<rect x="90.0" y="297.4" width="17.5" height="2" fill="#4ec9b0" fill-opacity="0.42"/>
<rect x="110.0" y="297.4" width="1.5" height="2" fill="#d4d4d4" fill-opacity="0.42"/>
<rect x="24.0" y="301.4" width="41.5" height="2" fill="#6a9955" fill-opacity="0.42"/>
<rect x="24.0" y="305.4" width="9.5" height="2" fill="#4ec9b0" fill-opacity="0.42"/>
<rect x="34.0" y="305.4" width="5.5" height="2" fill="#d4d4d4" fill-opacity="0.42"/>
<rect x="42.0" y="305.4" width="9.5" height="2" fill="#9cdcfe" fill-opacity="0.42"/>
<rect x="54.0" y="305.4" width="1.5" height="2" fill="#d4d4d4" fill-opacity="0.42"/>
<rect x="58.0" y="305.4" width="9.5" height="2" fill="#4ec9b0" fill-opacity="0.42"/>
<rect x="68.0" y="305.4" width="1.5" height="2" fill="#d4d4d4" fill-opacity="0.42"/>
<rect x="70.0" y="305.4" width="13.5" height="2" fill="#dcdcaa" fill-opacity="0.42"/>
<rect x="84.0" y="305.4" width="3.5" height="2" fill="#d4d4d4" fill-opacity="0.42"/>
<rect x="88.0" y="305.4" width="7.5" height="2" fill="#9cdcfe" fill-opacity="0.42"/>
<rect x="96.0" y="305.4" width="1.5" height="2" fill="#d4d4d4" fill-opacity="0.42"/>
<rect x="98.0" y="305.4" width="7.5" height="2" fill="#9cdcfe" fill-opacity="0.42"/>
<rect x="106.0" y="305.4" width="1.5" height="2" fill="#d4d4d4" fill-opacity="0.42"/>
<rect x="108.0" y="305.4" width="21.5" height="2" fill="#4ec9b0" fill-opacity="0.42"/>
<rect x="130.0" y="305.4" width="5.5" height="2" fill="#ce9178" fill-opacity="0.42"/>
<rect x="24.0" y="313.4" width="27.5" height="2" fill="#6a9955" fill-opacity="0.42"/>
<rect x="24.0" y="317.4" width="11.5" height="2" fill="#4ec9b0" fill-opacity="0.42"/>
<rect x="38.0" y="317.4" width="11.5" height="2" fill="#9cdcfe" fill-opacity="0.42"/>
<rect x="52.0" y="317.4" width="1.5" height="2" fill="#d4d4d4" fill-opacity="0.42"/>
<rect x="56.0" y="317.4" width="9.5" height="2" fill="#9cdcfe" fill-opacity="0.42"/>
<rect x="66.0" y="317.4" width="1.5" height="2" fill="#d4d4d4" fill-opacity="0.42"/>
<rect x="68.0" y="317.4" width="33.5" height="2" fill="#dcdcaa" fill-opacity="0.42"/>
<rect x="102.0" y="317.4" width="3.5" height="2" fill="#d4d4d4" fill-opacity="0.42"/>
<rect x="106.0" y="317.4" width="9.5" height="2" fill="#9cdcfe" fill-opacity="0.42"/>
<rect x="116.0" y="317.4" width="3.5" height="2" fill="#ce9178" fill-opacity="0.42"/>
<rect x="122.0" y="317.4" width="11.5" height="2" fill="#4ec9b0" fill-opacity="0.42"/>
<rect x="134.0" y="317.4" width="5.5" height="2" fill="#d4d4d4" fill-opacity="0.42"/>
<rect x="140.0" y="317.4" width="9.5" height="2" fill="#569cd6" fill-opacity="0.42"/>
<rect x="150.0" y="317.4" width="1.5" height="2" fill="#d4d4d4" fill-opacity="0.42"/>
<rect x="154.0" y="317.4" width="5.5" height="2" fill="#4ec9b0" fill-opacity="0.42"/>
<rect x="160.0" y="317.4" width="1.5" height="2" fill="#d4d4d4" fill-opacity="0.42"/>
<rect x="162.0" y="317.4" width="9.5" height="2" fill="#569cd6" fill-opacity="0.42"/>
<rect x="172.0" y="317.4" width="1.5" height="2" fill="#d4d4d4" fill-opacity="0.42"/>
<rect x="176.0" y="317.4" width="11.5" height="2" fill="#4ec9b0" fill-opacity="0.42"/>
<rect x="188.0" y="317.4" width="1.5" height="2" fill="#d4d4d4" fill-opacity="0.42"/>
<rect x="190.0" y="317.4" width="9.5" height="2" fill="#569cd6" fill-opacity="0.42"/>
<rect x="200.0" y="317.4" width="1.5" height="2" fill="#d4d4d4" fill-opacity="0.42"/>
<rect x="204.0" y="317.4" width="27.5" height="2" fill="#4ec9b0" fill-opacity="0.42"/>
<rect x="232.0" y="317.4" width="1.5" height="2" fill="#d4d4d4" fill-opacity="0.42"/>
<rect x="234.0" y="317.4" width="15.5" height="2" fill="#4ec9b0" fill-opacity="0.42"/>
<rect x="250.0" y="317.4" width="5.5" height="2" fill="#d4d4d4" fill-opacity="0.42"/>
<rect x="256.0" y="317.4" width="9.5" height="2" fill="#569cd6" fill-opacity="0.42"/>
<rect x="266.0" y="317.4" width="1.5" height="2" fill="#d4d4d4" fill-opacity="0.42"/>
<rect x="270.0" y="317.4" width="13.5" height="2" fill="#569cd6" fill-opacity="0.42"/>
<rect x="284.0" y="317.4" width="1.5" height="2" fill="#d4d4d4" fill-opacity="0.42"/>
<rect x="286.0" y="317.4" width="9.5" height="2" fill="#569cd6" fill-opacity="0.42"/>
<rect x="296.0" y="317.4" width="3.5" height="2" fill="#d4d4d4" fill-opacity="0.42"/>
<rect x="24.0" y="321.4" width="11.5" height="2" fill="#9cdcfe" fill-opacity="0.42"/>
<rect x="36.0" y="321.4" width="1.5" height="2" fill="#d4d4d4" fill-opacity="0.42"/>
<rect x="38.0" y="321.4" width="25.5" height="2" fill="#dcdcaa" fill-opacity="0.42"/>
<rect x="64.0" y="321.4" width="1.5" height="2" fill="#d4d4d4" fill-opacity="0.42"/>
<rect x="66.0" y="321.4" width="7.5" height="2" fill="#569cd6" fill-opacity="0.42"/>
<rect x="74.0" y="321.4" width="3.5" height="2" fill="#d4d4d4" fill-opacity="0.42"/>
<rect x="24.0" y="329.4" width="13.5" height="2" fill="#4ec9b0" fill-opacity="0.42"/>
<rect x="40.0" y="329.4" width="13.5" height="2" fill="#9cdcfe" fill-opacity="0.42"/>
<rect x="56.0" y="329.4" width="1.5" height="2" fill="#d4d4d4" fill-opacity="0.42"/>
<rect x="60.0" y="329.4" width="1.5" height="2" fill="#d4d4d4" fill-opacity="0.42"/>
<rect x="62.0" y="329.4" width="13.5" height="2" fill="#4ec9b0" fill-opacity="0.42"/>
<rect x="76.0" y="329.4" width="1.5" height="2" fill="#d4d4d4" fill-opacity="0.42"/>
<rect x="80.0" y="329.4" width="11.5" height="2" fill="#9cdcfe" fill-opacity="0.42"/>
<rect x="92.0" y="329.4" width="1.5" height="2" fill="#d4d4d4" fill-opacity="0.42"/>
<rect x="94.0" y="329.4" width="11.5" height="2" fill="#dcdcaa" fill-opacity="0.42"/>
<rect x="106.0" y="329.4" width="1.5" height="2" fill="#d4d4d4" fill-opacity="0.42"/>
<rect x="108.0" y="329.4" width="7.5" height="2" fill="#569cd6" fill-opacity="0.42"/>
<rect x="116.0" y="329.4" width="1.5" height="2" fill="#d4d4d4" fill-opacity="0.42"/>
<rect x="120.0" y="329.4" width="5.5" height="2" fill="#c586c0" fill-opacity="0.42"/>
<rect x="128.0" y="329.4" width="11.5" height="2" fill="#4ec9b0" fill-opacity="0.42"/>
<rect x="140.0" y="329.4" width="5.5" height="2" fill="#d4d4d4" fill-opacity="0.42"/>
<rect x="146.0" y="329.4" width="13.5" height="2" fill="#9cdcfe" fill-opacity="0.42"/>
<rect x="160.0" y="329.4" width="3.5" height="2" fill="#d4d4d4" fill-opacity="0.42"/>
<rect x="166.0" y="329.4" width="7.5" height="2" fill="#569cd6" fill-opacity="0.42"/>
<rect x="174.0" y="329.4" width="1.5" height="2" fill="#d4d4d4" fill-opacity="0.42"/>
<rect x="178.0" y="329.4" width="7.5" height="2" fill="#569cd6" fill-opacity="0.42"/>
<rect x="186.0" y="329.4" width="1.5" height="2" fill="#d4d4d4" fill-opacity="0.42"/>
<rect x="190.0" y="329.4" width="7.5" height="2" fill="#569cd6" fill-opacity="0.42"/>
<rect x="198.0" y="329.4" width="1.5" height="2" fill="#d4d4d4" fill-opacity="0.42"/>
<rect x="202.0" y="329.4" width="9.5" height="2" fill="#569cd6" fill-opacity="0.42"/>
<rect x="212.0" y="329.4" width="3.5" height="2" fill="#d4d4d4" fill-opacity="0.42"/>
<rect x="24.0" y="333.4" width="5.5" height="2" fill="#c586c0" fill-opacity="0.42"/>
<rect x="32.0" y="333.4" width="1.5" height="2" fill="#d4d4d4" fill-opacity="0.42"/>
<rect x="34.0" y="333.4" width="27.5" height="2" fill="#4ec9b0" fill-opacity="0.42"/>
<rect x="64.0" y="333.4" width="11.5" height="2" fill="#9cdcfe" fill-opacity="0.42"/>
<rect x="78.0" y="333.4" width="1.5" height="2" fill="#d4d4d4" fill-opacity="0.42"/>
<rect x="82.0" y="333.4" width="5.5" height="2" fill="#c586c0" fill-opacity="0.42"/>
<rect x="90.0" y="333.4" width="27.5" height="2" fill="#4ec9b0" fill-opacity="0.42"/>
<rect x="118.0" y="333.4" width="1.5" height="2" fill="#d4d4d4" fill-opacity="0.42"/>
<rect x="120.0" y="333.4" width="5.5" height="2" fill="#c586c0" fill-opacity="0.42"/>
<rect x="128.0" y="333.4" width="33.5" height="2" fill="#4ec9b0" fill-opacity="0.42"/>
<rect x="162.0" y="333.4" width="1.5" height="2" fill="#d4d4d4" fill-opacity="0.42"/>
<rect x="164.0" y="333.4" width="13.5" height="2" fill="#9cdcfe" fill-opacity="0.42"/>
<rect x="178.0" y="333.4" width="1.5" height="2" fill="#d4d4d4" fill-opacity="0.42"/>
<rect x="180.0" y="333.4" width="27.5" height="2" fill="#dcdcaa" fill-opacity="0.42"/>
<rect x="208.0" y="333.4" width="9.5" height="2" fill="#d4d4d4" fill-opacity="0.42"/>
<rect x="220.0" y="333.4" width="1.5" height="2" fill="#d4d4d4" fill-opacity="0.42"/>
<rect x="32.0" y="337.4" width="25.5" height="2" fill="#4ec9b0" fill-opacity="0.42"/>
<rect x="60.0" y="337.4" width="11.5" height="2" fill="#9cdcfe" fill-opacity="0.42"/>
<rect x="74.0" y="337.4" width="1.5" height="2" fill="#d4d4d4" fill-opacity="0.42"/>
<rect x="78.0" y="337.4" width="5.5" height="2" fill="#c586c0" fill-opacity="0.42"/>
<rect x="86.0" y="337.4" width="25.5" height="2" fill="#4ec9b0" fill-opacity="0.42"/>
<rect x="112.0" y="337.4" width="5.5" height="2" fill="#d4d4d4" fill-opacity="0.42"/>
<rect x="32.0" y="341.4" width="11.5" height="2" fill="#4ec9b0" fill-opacity="0.42"/>
<rect x="46.0" y="341.4" width="7.5" height="2" fill="#9cdcfe" fill-opacity="0.42"/>
<rect x="54.0" y="341.4" width="1.5" height="2" fill="#d4d4d4" fill-opacity="0.42"/>
<rect x="32.0" y="345.4" width="9.5" height="2" fill="#c586c0" fill-opacity="0.42"/>
<rect x="44.0" y="345.4" width="3.5" height="2" fill="#d4d4d4" fill-opacity="0.42"/>
<rect x="48.0" y="345.4" width="7.5" height="2" fill="#9cdcfe" fill-opacity="0.42"/>
<rect x="58.0" y="345.4" width="1.5" height="2" fill="#d4d4d4" fill-opacity="0.42"/>
<rect x="62.0" y="345.4" width="11.5" height="2" fill="#9cdcfe" fill-opacity="0.42"/>
<rect x="74.0" y="345.4" width="1.5" height="2" fill="#d4d4d4" fill-opacity="0.42"/>
<rect x="76.0" y="345.4" width="15.5" height="2" fill="#dcdcaa" fill-opacity="0.42"/>
<rect x="92.0" y="345.4" width="5.5" height="2" fill="#d4d4d4" fill-opacity="0.42"/>
<rect x="100.0" y="345.4" width="3.5" height="2" fill="#d4d4d4" fill-opacity="0.42"/>
<rect x="106.0" y="345.4" width="7.5" height="2" fill="#569cd6" fill-opacity="0.42"/>
<rect x="114.0" y="345.4" width="1.5" height="2" fill="#d4d4d4" fill-opacity="0.42"/>
<rect x="118.0" y="345.4" width="1.5" height="2" fill="#d4d4d4" fill-opacity="0.42"/>
<rect x="40.0" y="349.4" width="11.5" height="2" fill="#9cdcfe" fill-opacity="0.42"/>
<rect x="52.0" y="349.4" width="1.5" height="2" fill="#d4d4d4" fill-opacity="0.42"/>
<rect x="54.0" y="349.4" width="11.5" height="2" fill="#dcdcaa" fill-opacity="0.42"/>
<rect x="66.0" y="349.4" width="1.5" height="2" fill="#d4d4d4" fill-opacity="0.42"/>
<rect x="68.0" y="349.4" width="7.5" height="2" fill="#9cdcfe" fill-opacity="0.42"/>
<rect x="76.0" y="349.4" width="3.5" height="2" fill="#d4d4d4" fill-opacity="0.42"/>
<rect x="80.0" y="349.4" width="11.5" height="2" fill="#dcdcaa" fill-opacity="0.42"/>
<rect x="92.0" y="349.4" width="5.5" height="2" fill="#d4d4d4" fill-opacity="0.42"/>
<rect x="98.0" y="349.4" width="1.5" height="2" fill="#9cdcfe" fill-opacity="0.42"/>
<rect x="100.0" y="349.4" width="5.5" height="2" fill="#ce9178" fill-opacity="0.42"/>
<rect x="32.0" y="353.4" width="1.5" height="2" fill="#d4d4d4" fill-opacity="0.42"/>
<rect x="32.0" y="357.4" width="11.5" height="2" fill="#c586c0" fill-opacity="0.42"/>
<rect x="46.0" y="357.4" width="1.5" height="2" fill="#4ec9b0" fill-opacity="0.42"/>
<rect x="48.0" y="357.4" width="1.5" height="2" fill="#d4d4d4" fill-opacity="0.42"/>
<rect x="50.0" y="357.4" width="3.5" height="2" fill="#dcdcaa" fill-opacity="0.42"/>
<rect x="54.0" y="357.4" width="1.5" height="2" fill="#d4d4d4" fill-opacity="0.42"/>
<rect x="56.0" y="357.4" width="11.5" height="2" fill="#9cdcfe" fill-opacity="0.42"/>
<rect x="68.0" y="357.4" width="1.5" height="2" fill="#d4d4d4" fill-opacity="0.42"/>
<rect x="70.0" y="357.4" width="15.5" height="2" fill="#dcdcaa" fill-opacity="0.42"/>
<rect x="86.0" y="357.4" width="7.5" height="2" fill="#d4d4d4" fill-opacity="0.42"/>
<rect x="24.0" y="361.4" width="1.5" height="2" fill="#d4d4d4" fill-opacity="0.42"/>
<rect x="16.0" y="365.4" width="1.5" height="2" fill="#d4d4d4" fill-opacity="0.42"/>
<rect x="16.0" y="377.4" width="29.5" height="2" fill="#6a9955" fill-opacity="0.42"/>
<rect x="16.0" y="381.4" width="13.5" height="2" fill="#569cd6" fill-opacity="0.42"/>
<rect x="32.0" y="381.4" width="11.5" height="2" fill="#569cd6" fill-opacity="0.42"/>
<rect x="46.0" y="381.4" width="9.5" height="2" fill="#569cd6" fill-opacity="0.42"/>
<rect x="58.0" y="381.4" width="7.5" height="2" fill="#4ec9b0" fill-opacity="0.42"/>
<rect x="66.0" y="381.4" width="1.5" height="2" fill="#d4d4d4" fill-opacity="0.42"/>
<rect x="68.0" y="381.4" width="11.5" height="2" fill="#4ec9b0" fill-opacity="0.42"/>
<rect x="80.0" y="381.4" width="1.5" height="2" fill="#d4d4d4" fill-opacity="0.42"/>
<rect x="84.0" y="381.4" width="31.5" height="2" fill="#4ec9b0" fill-opacity="0.42"/>
<rect x="118.0" y="381.4" width="1.5" height="2" fill="#d4d4d4" fill-opacity="0.42"/>
<rect x="122.0" y="381.4" width="11.5" height="2" fill="#4ec9b0" fill-opacity="0.42"/>
<rect x="134.0" y="381.4" width="1.5" height="2" fill="#d4d4d4" fill-opacity="0.42"/>
<rect x="136.0" y="381.4" width="11.5" height="2" fill="#dcdcaa" fill-opacity="0.42"/>
<rect x="148.0" y="381.4" width="3.5" height="2" fill="#d4d4d4" fill-opacity="0.42"/>
<rect x="152.0" y="381.4" width="3.5" height="2" fill="#9cdcfe" fill-opacity="0.42"/>
<rect x="156.0" y="381.4" width="7.5" height="2" fill="#ce9178" fill-opacity="0.42"/>
<rect x="164.0" y="381.4" width="7.5" height="2" fill="#9cdcfe" fill-opacity="0.42"/>
<rect x="172.0" y="381.4" width="5.5" height="2" fill="#ce9178" fill-opacity="0.42"/>
<rect x="16.0" y="389.4" width="29.5" height="2" fill="#4ec9b0" fill-opacity="0.42"/>
<rect x="46.0" y="389.4" width="5.5" height="2" fill="#d4d4d4" fill-opacity="0.42"/>
<rect x="52.0" y="389.4" width="7.5" height="2" fill="#9cdcfe" fill-opacity="0.42"/>
<rect x="60.0" y="389.4" width="3.5" height="2" fill="#ce9178" fill-opacity="0.42"/>
<rect x="16.0" y="393.4" width="25.5" height="2" fill="#4ec9b0" fill-opacity="0.42"/>
<rect x="16.0" y="397.4" width="11.5" height="2" fill="#569cd6" fill-opacity="0.42"/>
<rect x="30.0" y="397.4" width="1.5" height="2" fill="#4ec9b0" fill-opacity="0.42"/>
<rect x="34.0" y="397.4" width="7.5" height="2" fill="#dcdcaa" fill-opacity="0.42"/>
<rect x="42.0" y="397.4" width="3.5" height="2" fill="#d4d4d4" fill-opacity="0.42"/>
<rect x="46.0" y="397.4" width="23.5" height="2" fill="#4ec9b0" fill-opacity="0.42"/>
<rect x="70.0" y="397.4" width="3.5" height="2" fill="#d4d4d4" fill-opacity="0.42"/>
<rect x="74.0" y="397.4" width="13.5" height="2" fill="#9cdcfe" fill-opacity="0.42"/>
<rect x="88.0" y="397.4" width="3.5" height="2" fill="#ce9178" fill-opacity="0.42"/>
<rect x="94.0" y="397.4" width="11.5" height="2" fill="#4ec9b0" fill-opacity="0.42"/>
<rect x="108.0" y="397.4" width="13.5" height="2" fill="#9cdcfe" fill-opacity="0.42"/>
<rect x="122.0" y="397.4" width="1.5" height="2" fill="#d4d4d4" fill-opacity="0.42"/>
<rect x="126.0" y="397.4" width="11.5" height="2" fill="#569cd6" fill-opacity="0.42"/>
<rect x="140.0" y="397.4" width="21.5" height="2" fill="#4ec9b0" fill-opacity="0.42"/>
<rect x="164.0" y="397.4" width="1.5" height="2" fill="#d4d4d4" fill-opacity="0.42"/>
<rect x="24.0" y="401.4" width="31.5" height="2" fill="#6a9955" fill-opacity="0.42"/>
<rect x="24.0" y="405.4" width="3.5" height="2" fill="#c586c0" fill-opacity="0.42"/>
<rect x="30.0" y="405.4" width="3.5" height="2" fill="#d4d4d4" fill-opacity="0.42"/>
<rect x="34.0" y="405.4" width="31.5" height="2" fill="#4ec9b0" fill-opacity="0.42"/>
<rect x="66.0" y="405.4" width="1.5" height="2" fill="#d4d4d4" fill-opacity="0.42"/>
<rect x="68.0" y="405.4" width="15.5" height="2" fill="#dcdcaa" fill-opacity="0.42"/>
<rect x="84.0" y="405.4" width="1.5" height="2" fill="#d4d4d4" fill-opacity="0.42"/>
<rect x="86.0" y="405.4" width="13.5" height="2" fill="#9cdcfe" fill-opacity="0.42"/>
<rect x="100.0" y="405.4" width="3.5" height="2" fill="#d4d4d4" fill-opacity="0.42"/>
<rect x="106.0" y="405.4" width="1.5" height="2" fill="#d4d4d4" fill-opacity="0.42"/>
<rect x="32.0" y="409.4" width="11.5" height="2" fill="#c586c0" fill-opacity="0.42"/>
<rect x="46.0" y="409.4" width="1.5" height="2" fill="#4ec9b0" fill-opacity="0.42"/>
<rect x="48.0" y="409.4" width="1.5" height="2" fill="#d4d4d4" fill-opacity="0.42"/>
<rect x="50.0" y="409.4" width="9.5" height="2" fill="#dcdcaa" fill-opacity="0.42"/>
<rect x="60.0" y="409.4" width="27.5" height="2" fill="#d4d4d4" fill-opacity="0.42"/>
<rect x="24.0" y="413.4" width="1.5" height="2" fill="#d4d4d4" fill-opacity="0.42"/>
<rect x="24.0" y="417.4" width="11.5" height="2" fill="#4ec9b0" fill-opacity="0.42"/>
<rect x="36.0" y="417.4" width="3.5" height="2" fill="#d4d4d4" fill-opacity="0.42"/>
<rect x="42.0" y="417.4" width="15.5" height="2" fill="#9cdcfe" fill-opacity="0.42"/>
<rect x="60.0" y="417.4" width="1.5" height="2" fill="#d4d4d4" fill-opacity="0.42"/>
<rect x="64.0" y="417.4" width="3.5" height="2" fill="#d4d4d4" fill-opacity="0.42"/>
<rect x="68.0" y="417.4" width="3.5" height="2" fill="#9cdcfe" fill-opacity="0.42"/>
<rect x="72.0" y="417.4" width="7.5" height="2" fill="#ce9178" fill-opacity="0.42"/>
<rect x="80.0" y="417.4" width="1.5" height="2" fill="#d4d4d4" fill-opacity="0.42"/>
<rect x="82.0" y="417.4" width="1.5" height="2" fill="#9cdcfe" fill-opacity="0.42"/>
<rect x="84.0" y="417.4" width="3.5" height="2" fill="#ce9178" fill-opacity="0.42"/>
<rect x="90.0" y="417.4" width="13.5" height="2" fill="#9cdcfe" fill-opacity="0.42"/>
<rect x="104.0" y="417.4" width="3.5" height="2" fill="#d4d4d4" fill-opacity="0.42"/>
<rect x="24.0" y="421.4" width="27.5" height="2" fill="#4ec9b0" fill-opacity="0.42"/>
<rect x="54.0" y="421.4" width="3.5" height="2" fill="#9cdcfe" fill-opacity="0.42"/>
<rect x="60.0" y="421.4" width="1.5" height="2" fill="#d4d4d4" fill-opacity="0.42"/>
<rect x="64.0" y="421.4" width="5.5" height="2" fill="#c586c0" fill-opacity="0.42"/>
<rect x="72.0" y="421.4" width="27.5" height="2" fill="#4ec9b0" fill-opacity="0.42"/>
<rect x="100.0" y="421.4" width="1.5" height="2" fill="#d4d4d4" fill-opacity="0.42"/>
<rect x="102.0" y="421.4" width="15.5" height="2" fill="#9cdcfe" fill-opacity="0.42"/>
<rect x="118.0" y="421.4" width="3.5" height="2" fill="#d4d4d4" fill-opacity="0.42"/>
<rect x="24.0" y="425.4" width="3.5" height="2" fill="#9cdcfe" fill-opacity="0.42"/>
<rect x="28.0" y="425.4" width="1.5" height="2" fill="#d4d4d4" fill-opacity="0.42"/>
<rect x="30.0" y="425.4" width="37.5" height="2" fill="#dcdcaa" fill-opacity="0.42"/>
<rect x="68.0" y="425.4" width="1.5" height="2" fill="#d4d4d4" fill-opacity="0.42"/>
<rect x="70.0" y="425.4" width="7.5" height="2" fill="#569cd6" fill-opacity="0.42"/>
<rect x="78.0" y="425.4" width="3.5" height="2" fill="#d4d4d4" fill-opacity="0.42"/>
<rect x="24.0" y="429.4" width="13.5" height="2" fill="#4ec9b0" fill-opacity="0.42"/>
<rect x="40.0" y="429.4" width="13.5" height="2" fill="#9cdcfe" fill-opacity="0.42"/>
<rect x="56.0" y="429.4" width="1.5" height="2" fill="#d4d4d4" fill-opacity="0.42"/>
<rect x="60.0" y="429.4" width="3.5" height="2" fill="#9cdcfe" fill-opacity="0.42"/>
<rect x="64.0" y="429.4" width="1.5" height="2" fill="#d4d4d4" fill-opacity="0.42"/>
<rect x="66.0" y="429.4" width="9.5" height="2" fill="#dcdcaa" fill-opacity="0.42"/>
<rect x="76.0" y="429.4" width="5.5" height="2" fill="#d4d4d4" fill-opacity="0.42"/>
<rect x="24.0" y="433.4" width="21.5" height="2" fill="#4ec9b0" fill-opacity="0.42"/>
<rect x="48.0" y="433.4" width="21.5" height="2" fill="#9cdcfe" fill-opacity="0.42"/>
<rect x="72.0" y="433.4" width="1.5" height="2" fill="#d4d4d4" fill-opacity="0.42"/>
<rect x="76.0" y="433.4" width="13.5" height="2" fill="#9cdcfe" fill-opacity="0.42"/>
<rect x="90.0" y="433.4" width="1.5" height="2" fill="#d4d4d4" fill-opacity="0.42"/>
<rect x="92.0" y="433.4" width="27.5" height="2" fill="#dcdcaa" fill-opacity="0.42"/>
<rect x="120.0" y="433.4" width="5.5" height="2" fill="#d4d4d4" fill-opacity="0.42"/>
<rect x="24.0" y="437.4" width="27.5" height="2" fill="#4ec9b0" fill-opacity="0.42"/>
<rect x="54.0" y="437.4" width="11.5" height="2" fill="#9cdcfe" fill-opacity="0.42"/>
<rect x="68.0" y="437.4" width="1.5" height="2" fill="#d4d4d4" fill-opacity="0.42"/>
<rect x="72.0" y="437.4" width="5.5" height="2" fill="#c586c0" fill-opacity="0.42"/>
<rect x="80.0" y="437.4" width="27.5" height="2" fill="#4ec9b0" fill-opacity="0.42"/>
<rect x="108.0" y="437.4" width="1.5" height="2" fill="#d4d4d4" fill-opacity="0.42"/>
<rect x="110.0" y="437.4" width="5.5" height="2" fill="#c586c0" fill-opacity="0.42"/>
<rect x="118.0" y="437.4" width="33.5" height="2" fill="#4ec9b0" fill-opacity="0.42"/>
<rect x="152.0" y="437.4" width="1.5" height="2" fill="#d4d4d4" fill-opacity="0.42"/>
<rect x="154.0" y="437.4" width="21.5" height="2" fill="#9cdcfe" fill-opacity="0.42"/>
<rect x="176.0" y="437.4" width="5.5" height="2" fill="#d4d4d4" fill-opacity="0.42"/>
<rect x="24.0" y="441.4" width="11.5" height="2" fill="#4ec9b0" fill-opacity="0.42"/>
<rect x="38.0" y="441.4" width="7.5" height="2" fill="#9cdcfe" fill-opacity="0.42"/>
<rect x="46.0" y="441.4" width="1.5" height="2" fill="#d4d4d4" fill-opacity="0.42"/>
<rect x="24.0" y="445.4" width="25.5" height="2" fill="#4ec9b0" fill-opacity="0.42"/>
<rect x="52.0" y="445.4" width="11.5" height="2" fill="#9cdcfe" fill-opacity="0.42"/>
<rect x="66.0" y="445.4" width="1.5" height="2" fill="#d4d4d4" fill-opacity="0.42"/>
<rect x="70.0" y="445.4" width="5.5" height="2" fill="#c586c0" fill-opacity="0.42"/>
<rect x="78.0" y="445.4" width="25.5" height="2" fill="#4ec9b0" fill-opacity="0.42"/>
<rect x="104.0" y="445.4" width="5.5" height="2" fill="#d4d4d4" fill-opacity="0.42"/>
<rect x="24.0" y="449.4" width="9.5" height="2" fill="#c586c0" fill-opacity="0.42"/>
<rect x="36.0" y="449.4" width="3.5" height="2" fill="#d4d4d4" fill-opacity="0.42"/>
<rect x="40.0" y="449.4" width="7.5" height="2" fill="#9cdcfe" fill-opacity="0.42"/>
<rect x="50.0" y="449.4" width="1.5" height="2" fill="#d4d4d4" fill-opacity="0.42"/>
<rect x="54.0" y="449.4" width="11.5" height="2" fill="#9cdcfe" fill-opacity="0.42"/>
<rect x="66.0" y="449.4" width="1.5" height="2" fill="#d4d4d4" fill-opacity="0.42"/>
<rect x="68.0" y="449.4" width="15.5" height="2" fill="#dcdcaa" fill-opacity="0.42"/>
<rect x="84.0" y="449.4" width="5.5" height="2" fill="#d4d4d4" fill-opacity="0.42"/>
<rect x="92.0" y="449.4" width="3.5" height="2" fill="#d4d4d4" fill-opacity="0.42"/>
<rect x="98.0" y="449.4" width="7.5" height="2" fill="#569cd6" fill-opacity="0.42"/>
<rect x="106.0" y="449.4" width="1.5" height="2" fill="#d4d4d4" fill-opacity="0.42"/>
<rect x="110.0" y="449.4" width="1.5" height="2" fill="#d4d4d4" fill-opacity="0.42"/>
<rect x="32.0" y="453.4" width="11.5" height="2" fill="#9cdcfe" fill-opacity="0.42"/>
<rect x="44.0" y="453.4" width="1.5" height="2" fill="#d4d4d4" fill-opacity="0.42"/>
<rect x="46.0" y="453.4" width="11.5" height="2" fill="#dcdcaa" fill-opacity="0.42"/>
<rect x="58.0" y="453.4" width="1.5" height="2" fill="#d4d4d4" fill-opacity="0.42"/>
<rect x="60.0" y="453.4" width="7.5" height="2" fill="#9cdcfe" fill-opacity="0.42"/>
<rect x="68.0" y="453.4" width="3.5" height="2" fill="#d4d4d4" fill-opacity="0.42"/>
<rect x="72.0" y="453.4" width="11.5" height="2" fill="#dcdcaa" fill-opacity="0.42"/>
<rect x="84.0" y="453.4" width="5.5" height="2" fill="#d4d4d4" fill-opacity="0.42"/>
<rect x="90.0" y="453.4" width="1.5" height="2" fill="#9cdcfe" fill-opacity="0.42"/>
<rect x="92.0" y="453.4" width="5.5" height="2" fill="#ce9178" fill-opacity="0.42"/>
<rect x="24.0" y="457.4" width="1.5" height="2" fill="#d4d4d4" fill-opacity="0.42"/>
<rect x="24.0" y="461.4" width="11.5" height="2" fill="#c586c0" fill-opacity="0.42"/>
<rect x="38.0" y="461.4" width="1.5" height="2" fill="#4ec9b0" fill-opacity="0.42"/>
<rect x="40.0" y="461.4" width="1.5" height="2" fill="#d4d4d4" fill-opacity="0.42"/>
<rect x="42.0" y="461.4" width="3.5" height="2" fill="#dcdcaa" fill-opacity="0.42"/>
<rect x="46.0" y="461.4" width="1.5" height="2" fill="#d4d4d4" fill-opacity="0.42"/>
<rect x="48.0" y="461.4" width="11.5" height="2" fill="#9cdcfe" fill-opacity="0.42"/>
<rect x="60.0" y="461.4" width="1.5" height="2" fill="#d4d4d4" fill-opacity="0.42"/>
<rect x="62.0" y="461.4" width="15.5" height="2" fill="#dcdcaa" fill-opacity="0.42"/>
<rect x="78.0" y="461.4" width="7.5" height="2" fill="#d4d4d4" fill-opacity="0.42"/>
<rect x="16.0" y="465.4" width="1.5" height="2" fill="#d4d4d4" fill-opacity="0.42"/>
<rect x="8.0" y="477.4" width="1.5" height="2" fill="#d4d4d4" fill-opacity="0.42"/>
</svg></div>
<div class="a" style="left:1987px;top:332px;width:4px;height:1418px;background:linear-gradient(90deg,rgba(0,0,0,0) 0%,rgba(0,0,0,0.55) 70%,rgba(0,0,0,0.2) 100%)"></div>
<div class="a" style="left:2171px;top:259px;width:27px;height:1491px;background:#1f1f1f;border-left:1px solid #262626"></div>
<div class="a" style="left:2170px;top:826px;width:28px;height:382px;background:rgba(121,121,121,0.4)"></div>
<div class="a" style="left:2170px;top:1016px;width:28px;height:3px;background:#9a9a9a"></div>
<div class="a" style="left:2189px;top:656px;width:9px;height:11px;background:#b5302a"></div>
<div class="a" style="left:2189px;top:830px;width:9px;height:12px;background:#a33d3a"></div>
<div class="a" style="left:939px;top:1726px;width:651px;height:23px;background:rgba(121,121,121,0.4)"></div>
</div></div>
</body></html>
